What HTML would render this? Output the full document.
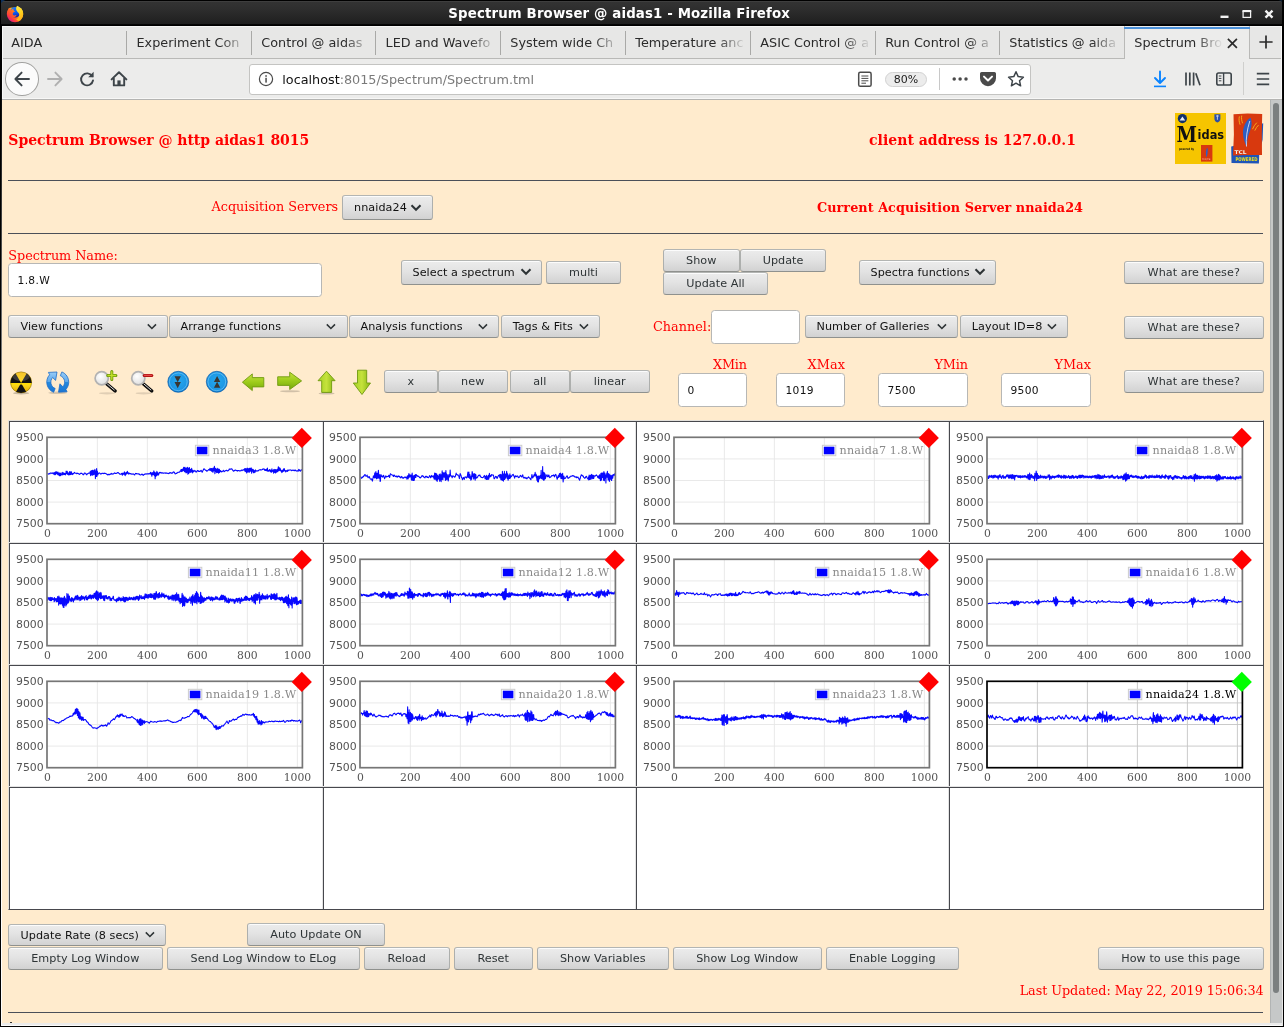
<!DOCTYPE html>
<html><head><meta charset="utf-8"><title>Spectrum Browser @ aidas1 - Mozilla Firefox</title>
<style>
html,body{margin:0;padding:0;background:#000;}
#w{position:relative;width:1284px;height:1027px;overflow:hidden;background:#ffebcd;will-change:transform;font-family:'DejaVu Sans','Liberation Sans',sans-serif;}
.t{position:absolute;white-space:pre;line-height:normal;}
.a{position:absolute;}
.b{position:absolute;box-sizing:border-box;border:1px solid #adafad;border-top-color:#b3b5b3;border-bottom-color:#8f918e;border-radius:3px;
 background:linear-gradient(#ececec,#e3e3e3 45%,#d2d2d2);color:#2e3436;text-align:center;font-family:'DejaVu Sans','Liberation Sans',sans-serif;white-space:pre;letter-spacing:.05px;
 box-shadow:inset 0 1px 0 rgba(255,255,255,.85);}
.b.s{text-align:left;color:#111;}
.chev{position:absolute;}
.i{position:absolute;box-sizing:border-box;border:1px solid #b7b7b5;border-radius:3.5px;background:#fff;color:#111;font:10.67px 'DejaVu Sans','Liberation Sans',sans-serif;padding-left:8.3px;white-space:pre;letter-spacing:.3px;}
.hr{position:absolute;left:8px;width:1255px;height:1px;background:#4b4f58;}
</style></head>
<body><div id="w">
<div class="a" style="left:0;top:0;width:1284px;height:26px;background:linear-gradient(#000 0,#000 1px,#4a4a4a 1px,#333 2px,#2f2f2f 8px,#1f1f1f 24px,#000 24.600px,#000 26px);"></div>
<svg class="a" style="left:0;top:0" width="1284" height="7" viewBox="0 0 1284 7"><path d="M0 0H5.500C2.800 .6 .8 2.600 0 5.500Z" fill="#0b2f5c"/><path d="M1284 0H1278.500C1281.200 .6 1283.200 2.600 1284 5.500Z" fill="#0a1c30"/></svg>
<span class="t" id="t1" style="top:5.63px;font:700 13.33px 'DejaVu Sans','Liberation Sans',sans-serif;color:#fff;letter-spacing:0.134px;left:619.20px;transform:translateX(-50%);">Spectrum Browser @ aidas1 - Mozilla Firefox</span>
<svg class="a" style="left:0;top:0" width="30" height="28" viewBox="0 0 30 28">
<defs><linearGradient id="fxo" x1="0.85" y1="0.1" x2="0.15" y2="0.9"><stop offset="0" stop-color="#fff160"/><stop offset=".3" stop-color="#ffc41e"/><stop offset=".55" stop-color="#ff8a16"/><stop offset=".8" stop-color="#ff3b3d"/><stop offset="1" stop-color="#d81b8c"/></linearGradient>
<linearGradient id="fxb" x1="0.3" y1="0" x2="0.6" y2="1"><stop offset="0" stop-color="#1f7cff"/><stop offset=".55" stop-color="#0a5cf0"/><stop offset="1" stop-color="#1b1f9e"/></linearGradient>
<linearGradient id="fxh" x1="0.9" y1="0" x2="0.1" y2="1"><stop offset="0" stop-color="#ff9c12"/><stop offset=".6" stop-color="#ff5a2c"/><stop offset="1" stop-color="#ff3040"/></linearGradient>
<linearGradient id="fxy" x1="0.3" y1="0" x2="0.6" y2="1"><stop offset="0" stop-color="#ffe94a"/><stop offset=".5" stop-color="#ffd21e"/><stop offset="1" stop-color="#ffa516"/></linearGradient></defs>
<circle cx="15" cy="14.100" r="8.200" fill="url(#fxo)"/>
<path d="M9.600 7.600L11 5.500L17.200 5.200L16.600 7.800Z" fill="#2d2d2d"/><circle cx="15.200" cy="12.300" r="5.300" fill="url(#fxb)"/>
<path d="M7.600 11.200C7.900 9.800 8.500 8.600 9.400 7.700C9.600 8.700 10.200 9.400 11.200 9.700C11.800 9.400 12.600 9.200 13.300 8.600C13.300 9.500 13.500 10.300 14 10.900C14.600 11.100 15.100 11.300 15.300 11.600C14.300 11.900 13.400 12.300 13 13.100C12.500 14 12.700 14.800 13.400 15.300C14.400 15.600 15.600 15.300 16.400 15C16.300 16 15.600 16.800 14.600 17.300C13.400 17.800 12 17.700 11 17.200L8.600 15.800Z" fill="url(#fxh)"/>
<path d="M17.300 5.700C18.200 6.600 19 7 20.200 7.800C22.300 9.400 23.400 11.800 23.200 14.400C23 17.400 21.200 20 18.600 21.300L16.200 19.400C17.600 18.800 18.700 17.600 19.100 16.200C19.500 14.900 19.200 13.800 18.400 12.800C17.600 11.800 16.500 10.800 16.200 9.400C16 8 16.400 6.700 17.300 5.700Z" fill="url(#fxy)"/>
</svg>
<svg class="a" style="left:1215px;top:6px" width="64" height="16" viewBox="0 0 64 16"><g fill="none" stroke="#f2f2f2" stroke-width="2"><path d="M5.5 10.800h8" stroke-width="2.4"/><rect x="28.100" y="5.400" width="7.500" height="6" stroke-width="1.250"/><path d="M27.500 5.050h8.700" stroke-width="2.100"/><path d="M50.500 4.600l7 7M57.500 4.600l-7 7" stroke-width="2.400"/></g></svg>
<div class="a" style="left:0;top:25.700px;width:1284px;height:33.300px;background:#e7e7e6;border-bottom:1px solid #b9b9b7;border-top:1px solid #f6f6f5;box-sizing:border-box"></div>
<div class="a" style="left:126.2px;top:31px;width:1px;height:24px;background:#a9a9a7"></div>
<div class="a" style="left:251.2px;top:31px;width:1px;height:24px;background:#a9a9a7"></div>
<div class="a" style="left:375.0px;top:31px;width:1px;height:24px;background:#a9a9a7"></div>
<div class="a" style="left:500.0px;top:31px;width:1px;height:24px;background:#a9a9a7"></div>
<div class="a" style="left:625.0px;top:31px;width:1px;height:24px;background:#a9a9a7"></div>
<div class="a" style="left:750.0px;top:31px;width:1px;height:24px;background:#a9a9a7"></div>
<div class="a" style="left:875.0px;top:31px;width:1px;height:24px;background:#a9a9a7"></div>
<div class="a" style="left:999.0px;top:31px;width:1px;height:24px;background:#a9a9a7"></div>
<div class="a" style="left:1124px;top:26px;width:126px;height:33px;background:#ececeb;border-left:1px solid #b9b9b7;border-right:1px solid #b9b9b7;box-sizing:border-box"></div>
<div class="a" style="left:1124px;top:26.6px;width:126px;height:2.200px;background:#4a90d9"></div>
<div class="a" style="left:11.3px;top:33px;width:113px;height:22px;overflow:hidden;-webkit-mask-image:linear-gradient(90deg,#000 83px,transparent 111px);mask-image:linear-gradient(90deg,#000 83px,transparent 111px)"><span class="t" style="left:0;top:2.12px;font:12.8px 'DejaVu Sans','Liberation Sans',sans-serif;color:#2b2b2b;letter-spacing:0px">AIDA</span></div>
<div class="a" style="left:136.5px;top:33px;width:113px;height:22px;overflow:hidden;-webkit-mask-image:linear-gradient(90deg,#000 83px,transparent 111px);mask-image:linear-gradient(90deg,#000 83px,transparent 111px)"><span class="t" style="left:0;top:2.12px;font:12.8px 'DejaVu Sans','Liberation Sans',sans-serif;color:#2b2b2b;letter-spacing:0px">Experiment Con</span></div>
<div class="a" style="left:261.3px;top:33px;width:113px;height:22px;overflow:hidden;-webkit-mask-image:linear-gradient(90deg,#000 83px,transparent 111px);mask-image:linear-gradient(90deg,#000 83px,transparent 111px)"><span class="t" style="left:0;top:2.12px;font:12.8px 'DejaVu Sans','Liberation Sans',sans-serif;color:#2b2b2b;letter-spacing:0px">Control @ aidas</span></div>
<div class="a" style="left:385.5px;top:33px;width:113px;height:22px;overflow:hidden;-webkit-mask-image:linear-gradient(90deg,#000 83px,transparent 111px);mask-image:linear-gradient(90deg,#000 83px,transparent 111px)"><span class="t" style="left:0;top:2.12px;font:12.8px 'DejaVu Sans','Liberation Sans',sans-serif;color:#2b2b2b;letter-spacing:0px">LED and Wavefo</span></div>
<div class="a" style="left:510.3px;top:33px;width:113px;height:22px;overflow:hidden;-webkit-mask-image:linear-gradient(90deg,#000 83px,transparent 111px);mask-image:linear-gradient(90deg,#000 83px,transparent 111px)"><span class="t" style="left:0;top:2.12px;font:12.8px 'DejaVu Sans','Liberation Sans',sans-serif;color:#2b2b2b;letter-spacing:0px">System wide Ch</span></div>
<div class="a" style="left:635.3px;top:33px;width:113px;height:22px;overflow:hidden;-webkit-mask-image:linear-gradient(90deg,#000 83px,transparent 111px);mask-image:linear-gradient(90deg,#000 83px,transparent 111px)"><span class="t" style="left:0;top:2.12px;font:12.8px 'DejaVu Sans','Liberation Sans',sans-serif;color:#2b2b2b;letter-spacing:0px">Temperature anc</span></div>
<div class="a" style="left:760.3px;top:33px;width:113px;height:22px;overflow:hidden;-webkit-mask-image:linear-gradient(90deg,#000 83px,transparent 111px);mask-image:linear-gradient(90deg,#000 83px,transparent 111px)"><span class="t" style="left:0;top:2.12px;font:12.8px 'DejaVu Sans','Liberation Sans',sans-serif;color:#2b2b2b;letter-spacing:0px">ASIC Control @ a</span></div>
<div class="a" style="left:885.3px;top:33px;width:113px;height:22px;overflow:hidden;-webkit-mask-image:linear-gradient(90deg,#000 83px,transparent 111px);mask-image:linear-gradient(90deg,#000 83px,transparent 111px)"><span class="t" style="left:0;top:2.12px;font:12.8px 'DejaVu Sans','Liberation Sans',sans-serif;color:#2b2b2b;letter-spacing:0px">Run Control @ a</span></div>
<div class="a" style="left:1009.3px;top:33px;width:113px;height:22px;overflow:hidden;-webkit-mask-image:linear-gradient(90deg,#000 83px,transparent 111px);mask-image:linear-gradient(90deg,#000 83px,transparent 111px)"><span class="t" style="left:0;top:2.12px;font:12.8px 'DejaVu Sans','Liberation Sans',sans-serif;color:#2b2b2b;letter-spacing:0px">Statistics @ aida</span></div>
<div class="a" style="left:1134.3px;top:33px;width:91px;height:22px;overflow:hidden;-webkit-mask-image:linear-gradient(90deg,#000 61px,transparent 89px);mask-image:linear-gradient(90deg,#000 61px,transparent 89px)"><span class="t" style="left:0;top:2.12px;font:12.8px 'DejaVu Sans','Liberation Sans',sans-serif;color:#2b2b2b;letter-spacing:0px">Spectrum Bro</span></div>
<svg class="a" style="left:1226px;top:36.6px" width="13" height="13" viewBox="0 0 13 13"><path d="M1.900 1.900l9 9M10.900 1.900L1.900 10.900" stroke="#2b2b2b" stroke-width="1.7" fill="none"/></svg>
<svg class="a" style="left:1258px;top:34px" width="16" height="16" viewBox="0 0 16 16"><path d="M8 1.4v13.2M1.4 8h13.2" stroke="#2b2b2b" stroke-width="1.7" fill="none"/></svg>
<div class="a" style="left:0;top:59px;width:1284px;height:41px;background:linear-gradient(#ececeb 0,#ececeb 38.800px,#f7f7f6 39.200px,#f7f7f6 39.800px,#b4b4b2 40.200px,#b4b4b2 41px)"></div>
<div class="a" style="left:5px;top:62.300px;width:33.600px;height:33.400px;border-radius:50%;background:#fbfbfb;border:1px solid #a2a2a0;box-sizing:border-box"></div>
<svg class="a" style="left:13px;top:70px" width="18" height="18" viewBox="0 0 18 18"><path d="M16 9H2.6M8.6 2.6L2.4 9l6.2 6.4" stroke="#3d4449" stroke-width="1.9" fill="none" stroke-linecap="round" stroke-linejoin="round"/></svg>
<svg class="a" style="left:46px;top:70px" width="18" height="18" viewBox="0 0 18 18"><path d="M2 9h13.4M9.4 2.6L15.6 9l-6.2 6.4" stroke="#b0b0b0" stroke-width="1.9" fill="none" stroke-linecap="round" stroke-linejoin="round"/></svg>
<svg class="a" style="left:78px;top:70px" width="18" height="18" viewBox="0 0 18 18"><path d="M14.2 6.2A6 6 0 1 0 15 10.5" stroke="#3d4449" stroke-width="1.9" fill="none" stroke-linecap="round"/><path d="M15.6 1.8v5.4h-5.4z" fill="#3d4449"/></svg>
<svg class="a" style="left:110px;top:70px" width="18" height="18" viewBox="0 0 18 18"><path d="M1.6 9.4L9 2.2l7.4 7.2M3.8 8.2v7.2h10.4V8.2" stroke="#3d4449" stroke-width="1.9" fill="none" stroke-linejoin="round" stroke-linecap="round"/><rect x="7.4" y="10.4" width="3.2" height="5" fill="#3d4449"/></svg>
<div class="a" style="left:248.5px;top:64px;width:782px;height:30.5px;background:#fff;border:1px solid #c4c4c2;border-radius:3px;box-sizing:border-box"></div>
<svg class="a" style="left:258px;top:71px" width="16" height="16" viewBox="0 0 16 16"><circle cx="8" cy="8" r="6.6" fill="none" stroke="#4a4a4a" stroke-width="1.2"/><rect x="7.3" y="6.8" width="1.5" height="4.8" fill="#4a4a4a"/><rect x="7.3" y="4.2" width="1.5" height="1.6" fill="#4a4a4a"/></svg>
<span class="t" id="t2" style="top:71.62px;font:400 12.8px 'DejaVu Sans','Liberation Sans',sans-serif;color:#111;letter-spacing:-0.011px;left:282.30px;">localhost<span style="color:#7a7a7a">:8015/Spectrum/Spectrum.tml</span></span>
<svg class="a" style="left:857px;top:71px" width="16" height="17" viewBox="0 0 16 17"><rect x="1.7" y="1.3" width="12.4" height="14" rx="1.6" fill="none" stroke="#4a4a4a" stroke-width="1.5"/><path d="M4.4 5h7M4.4 7.4h7M4.4 9.8h7M4.4 12.2h4.6" stroke="#4a4a4a" stroke-width="1"/></svg>
<div class="a" style="left:885px;top:72px;width:42px;height:15px;border-radius:8px;background:#ececec;border:1px solid #d2d2d2;box-sizing:border-box"></div>
<span class="t" id="t3" style="top:73.09px;font:400 11px 'DejaVu Sans','Liberation Sans',sans-serif;color:#222;left:906.00px;transform:translateX(-50%);">80%</span>
<div class="a" style="left:939px;top:68px;width:1px;height:22px;background:#c8c8c8"></div>
<svg class="a" style="left:950px;top:76px" width="20" height="6" viewBox="0 0 20 6"><circle cx="4.2" cy="3" r="1.75" fill="#4a4a4a"/><circle cx="10.1" cy="3" r="1.75" fill="#4a4a4a"/><circle cx="16" cy="3" r="1.75" fill="#4a4a4a"/></svg>
<svg class="a" style="left:979px;top:71px" width="18" height="16" viewBox="0 0 18 16"><path d="M2.6 1h12.8a1.6 1.6 0 0 1 1.6 1.6v4.6a8 8 0 0 1-16 0V2.6A1.6 1.6 0 0 1 2.6 1z" fill="#4a4a4a"/><path d="M5 5.6l4 3.9 4-3.9" stroke="#fff" stroke-width="2" fill="none" stroke-linecap="round" stroke-linejoin="round"/></svg>
<svg class="a" style="left:1007px;top:70px" width="18" height="18" viewBox="0 0 18 18"><path d="M9 1.8l2.2 4.8 5.2.6-3.9 3.5 1.1 5.1L9 13.2l-4.6 2.6 1.1-5.1L1.6 7.2l5.2-.6z" fill="none" stroke="#3d4449" stroke-width="1.5" stroke-linejoin="round"/></svg>
<svg class="a" style="left:1151px;top:70px" width="18" height="18" viewBox="0 0 18 18"><path d="M9 1.4v11M4 8l5 5 5-5" stroke="#0a84ff" stroke-width="1.9" fill="none" stroke-linecap="round" stroke-linejoin="round"/><path d="M3 16.4h12" stroke="#0a84ff" stroke-width="1.6"/></svg>
<svg class="a" style="left:1184px;top:71px" width="18" height="16" viewBox="0 0 18 16"><path d="M2 1.6v13M5.8 1.6v13M9.6 1.6v13" stroke="#3d4449" stroke-width="1.7"/><path d="M11.8 2.2l4.2 12" stroke="#3d4449" stroke-width="1.7"/></svg>
<svg class="a" style="left:1215px;top:71px" width="18" height="16" viewBox="0 0 18 16"><rect x="1.8" y="2" width="14.4" height="12" rx="1.8" fill="none" stroke="#3d4449" stroke-width="1.6"/><path d="M8.6 2v12" stroke="#3d4449" stroke-width="1.4"/><path d="M3.8 5h2.6M3.8 7.4h2.6M3.8 9.8h2.6" stroke="#3d4449" stroke-width="1"/></svg>
<div class="a" style="left:1243px;top:62px;width:1px;height:33px;background:#cfcfcd"></div>
<svg class="a" style="left:1255px;top:71px" width="16" height="16" viewBox="0 0 16 16"><path d="M1.8 2.6h12.4M1.8 8h12.4M1.8 13.4h12.4" stroke="#3d4449" stroke-width="1.7"/></svg>
<span class="t" id="t4" style="top:131.51px;font:700 14px 'DejaVu Serif','Liberation Serif',serif;color:#ff0000;letter-spacing:-0.031px;left:8.30px;">Spectrum Browser @ http aidas1 8015</span>
<span class="t" id="t5" style="top:131.51px;font:700 14px 'DejaVu Serif','Liberation Serif',serif;color:#ff0000;letter-spacing:0.026px;left:869.00px;">client address is 127.0.0.1</span>
<div class="hr" style="top:180px"></div>
<span class="t" id="t6" style="top:198.92px;font:400 12.8px 'DejaVu Serif','Liberation Serif',serif;color:#ff0000;letter-spacing:-0.011px;left:211.50px;">Acquisition Servers</span>
<div class="b s" style="left:342px;top:195.3px;width:91px;height:24.5px;line-height:23.9px;font-size:11.2px;padding-left:11.1px">nnaida24<svg class="chev" style="left:67.3px;top:7.3px" width="12" height="8" viewBox="0 0 12 8"><path d="M1.5 1.3 L6 5.700 L10.500 1.300" fill="none" stroke="#2e3436" stroke-width="2.1"/></svg></div>
<span class="t" id="t7" style="top:199.62px;font:700 12.8px 'DejaVu Serif','Liberation Serif',serif;color:#ff0000;letter-spacing:0.045px;left:817.00px;">Current Acquisition Server nnaida24</span>
<div class="hr" style="top:233px"></div>
<span class="t" id="t8" style="top:247.62px;font:400 12.8px 'DejaVu Serif','Liberation Serif',serif;color:#ff0000;letter-spacing:-0.058px;left:8.30px;">Spectrum Name:</span>
<div class="i" style="left:8.3px;top:263.1px;width:313.4px;height:33.6px;line-height:33.2px">1.8.W</div>
<div class="b s" style="left:401px;top:260.3px;width:140.7px;height:24.3px;line-height:23.7px;font-size:11.2px;padding-left:10.5px">Select a spectrum<svg class="chev" style="left:117.8px;top:7.2px" width="12" height="8" viewBox="0 0 12 8"><path d="M1.5 1.3 L6 5.700 L10.500 1.300" fill="none" stroke="#2e3436" stroke-width="2.1"/></svg></div>
<div class="b" style="left:546px;top:261.3px;width:75px;height:22.5px;line-height:21.9px;font-size:11.2px">multi</div>
<div class="b" style="left:663px;top:249.3px;width:76.5px;height:22.5px;line-height:21.9px;font-size:11.2px">Show</div>
<div class="b" style="left:740.2px;top:249.3px;width:85.8px;height:22.5px;line-height:21.9px;font-size:11.2px">Update</div>
<div class="b" style="left:663px;top:272.3px;width:105px;height:22.5px;line-height:21.9px;font-size:11.2px">Update All</div>
<div class="b s" style="left:859px;top:260.3px;width:136.5px;height:24.3px;line-height:23.7px;font-size:11.2px;padding-left:10.5px">Spectra functions<svg class="chev" style="left:113.9px;top:7.2px" width="12" height="8" viewBox="0 0 12 8"><path d="M1.5 1.3 L6 5.700 L10.500 1.300" fill="none" stroke="#2e3436" stroke-width="2.1"/></svg></div>
<div class="b" style="left:1124px;top:261.3px;width:139.5px;height:22.5px;line-height:21.9px;font-size:11.2px">What are these?</div>
<div class="b s" style="left:8px;top:315.40000000000003px;width:159.5px;height:23.1px;line-height:22.5px;font-size:11.2px;padding-left:11.5px">View functions<svg class="chev" style="left:136.95px;top:7.1px" width="12" height="8" viewBox="0 0 12 8"><path d="M1.8 1.4 L5.900 5.500 L10 1.400" fill="none" stroke="#2e3436" stroke-width="1.55"/></svg></div>
<div class="b s" style="left:169px;top:315.40000000000003px;width:178.5px;height:23.1px;line-height:22.5px;font-size:11.2px;padding-left:10.5px">Arrange functions<svg class="chev" style="left:155.25px;top:7.1px" width="12" height="8" viewBox="0 0 12 8"><path d="M1.8 1.4 L5.900 5.500 L10 1.400" fill="none" stroke="#2e3436" stroke-width="1.55"/></svg></div>
<div class="b s" style="left:349px;top:315.40000000000003px;width:149.5px;height:23.1px;line-height:22.5px;font-size:11.2px;padding-left:10.5px">Analysis functions<svg class="chev" style="left:126.75px;top:7.1px" width="12" height="8" viewBox="0 0 12 8"><path d="M1.8 1.4 L5.900 5.500 L10 1.400" fill="none" stroke="#2e3436" stroke-width="1.55"/></svg></div>
<div class="b s" style="left:501.2px;top:315.40000000000003px;width:98.5px;height:23.1px;line-height:22.5px;font-size:11.2px;padding-left:10.5px">Tags &amp; Fits<svg class="chev" style="left:75.55px;top:7.1px" width="12" height="8" viewBox="0 0 12 8"><path d="M1.8 1.4 L5.900 5.500 L10 1.400" fill="none" stroke="#2e3436" stroke-width="1.55"/></svg></div>
<span class="t" id="t9" style="top:318.62px;font:400 12.8px 'DejaVu Serif','Liberation Serif',serif;color:#ff0000;letter-spacing:0.011px;left:653.00px;">Channel:</span>
<div class="i" style="left:711.2px;top:310.1px;width:88.8px;height:33.6px;line-height:33.2px"></div>
<div class="b s" style="left:805px;top:315.40000000000003px;width:152.5px;height:23.1px;line-height:22.5px;font-size:11.2px;padding-left:10.5px">Number of Galleries<svg class="chev" style="left:130.45px;top:7.1px" width="12" height="8" viewBox="0 0 12 8"><path d="M1.8 1.4 L5.900 5.500 L10 1.400" fill="none" stroke="#2e3436" stroke-width="1.55"/></svg></div>
<div class="b s" style="left:960.3px;top:315.40000000000003px;width:107.3px;height:23.1px;line-height:22.5px;font-size:11.2px;padding-left:10.5px">Layout ID=8<svg class="chev" style="left:84.45px;top:7.1px" width="12" height="8" viewBox="0 0 12 8"><path d="M1.8 1.4 L5.900 5.500 L10 1.400" fill="none" stroke="#2e3436" stroke-width="1.55"/></svg></div>
<div class="b" style="left:1124px;top:316.3px;width:139.5px;height:22.5px;line-height:21.9px;font-size:11.2px">What are these?</div>
<div class="b" style="left:384px;top:370.3px;width:53.5px;height:22.5px;line-height:21.9px;font-size:11.2px">x</div>
<div class="b" style="left:438px;top:370.3px;width:69.5px;height:22.5px;line-height:21.9px;font-size:11.2px">new</div>
<div class="b" style="left:510px;top:370.3px;width:59.5px;height:22.5px;line-height:21.9px;font-size:11.2px">all</div>
<div class="b" style="left:570px;top:370.3px;width:79.5px;height:22.5px;line-height:21.9px;font-size:11.2px">linear</div>
<span class="t" id="t10" style="top:356.62px;font:400 12.8px 'DejaVu Serif','Liberation Serif',serif;color:#ff0000;letter-spacing:-0.188px;left:713.00px;">XMin</span>
<span class="t" id="t11" style="top:356.62px;font:400 12.8px 'DejaVu Serif','Liberation Serif',serif;color:#ff0000;letter-spacing:0.146px;left:807.50px;">XMax</span>
<span class="t" id="t12" style="top:356.62px;font:400 12.8px 'DejaVu Serif','Liberation Serif',serif;color:#ff0000;letter-spacing:-0.130px;left:934.50px;">YMin</span>
<span class="t" id="t13" style="top:356.62px;font:400 12.8px 'DejaVu Serif','Liberation Serif',serif;color:#ff0000;letter-spacing:0.031px;left:1054.50px;">YMax</span>
<div class="i" style="left:678.3px;top:373.1px;width:68.5px;height:33.6px;line-height:33.2px">0</div>
<div class="i" style="left:776.2px;top:373.1px;width:68.7px;height:33.6px;line-height:33.2px">1019</div>
<div class="i" style="left:878.3px;top:373.1px;width:89.4px;height:33.6px;line-height:33.2px">7500</div>
<div class="i" style="left:1001.2px;top:373.1px;width:89.6px;height:33.6px;line-height:33.2px">9500</div>
<div class="b" style="left:1124px;top:370.3px;width:139.5px;height:22.5px;line-height:21.9px;font-size:11.2px">What are these?</div>
<div class="b s" style="left:8px;top:923.5px;width:157.5px;height:22.7px;line-height:22.099999999999998px;font-size:11.2px;padding-left:11.5px">Update Rate (8 secs)<svg class="chev" style="left:134.65px;top:6.8px" width="12" height="8" viewBox="0 0 12 8"><path d="M1.8 1.4 L5.900 5.500 L10 1.400" fill="none" stroke="#2e3436" stroke-width="1.55"/></svg></div>
<div class="b" style="left:247px;top:923.3px;width:138px;height:22.5px;line-height:21.9px;font-size:11.2px">Auto Update ON</div>
<div class="b" style="left:8px;top:947.3px;width:154.6px;height:22.5px;line-height:21.9px;font-size:11.2px">Empty Log Window</div>
<div class="b" style="left:167px;top:947.3px;width:193px;height:22.5px;line-height:21.9px;font-size:11.2px">Send Log Window to ELog</div>
<div class="b" style="left:364px;top:947.3px;width:85.5px;height:22.5px;line-height:21.9px;font-size:11.2px">Reload</div>
<div class="b" style="left:454px;top:947.3px;width:78.5px;height:22.5px;line-height:21.9px;font-size:11.2px">Reset</div>
<div class="b" style="left:537px;top:947.3px;width:131.5px;height:22.5px;line-height:21.9px;font-size:11.2px">Show Variables</div>
<div class="b" style="left:673px;top:947.3px;width:148.5px;height:22.5px;line-height:21.9px;font-size:11.2px">Show Log Window</div>
<div class="b" style="left:826px;top:947.3px;width:132.5px;height:22.5px;line-height:21.9px;font-size:11.2px">Enable Logging</div>
<div class="b" style="left:1098px;top:947.3px;width:165.5px;height:22.5px;line-height:21.9px;font-size:11.2px">How to use this page</div>
<span class="t" id="t14" style="top:983.12px;font:400 12.8px 'DejaVu Serif','Liberation Serif',serif;color:#ff0000;letter-spacing:-0.075px;right:20.40px;">Last Updated: May 22, 2019 15:06:34</span>
<div class="hr" style="top:1012px"></div>
<div class="a" style="left:10px;top:1021.5px;width:1.6px;height:1.5px;background:#333"></div>
<svg class="a" style="left:1175px;top:113px" width="51" height="51" viewBox="0 0 51 51">
<rect width="51" height="51" fill="#f6c500"/>
<circle cx="7.4" cy="5.6" r="4.6" fill="#12306a"/><path d="M4.6 7.6l2.8-4 2.8 4z" fill="#e8eef8"/>
<path d="M39.4 1.2h6v4.6c0 2-1.4 3.2-3 3.8c-1.600-.6-3-1.800-3-3.800z" fill="#2b4fa8"/><path d="M41 3h2.800M42.400 2.200v4.600" stroke="#dfe6f5" stroke-width=".8"/>
<text x="1.6" y="28.6" font-family="'DejaVu Serif','Liberation Serif',serif" font-weight="700" font-size="23" fill="#111" textLength="20.5" lengthAdjust="spacingAndGlyphs">M</text>
<text x="22.6" y="26" font-family="'DejaVu Sans','Liberation Sans',sans-serif" font-weight="700" font-size="11.5" fill="#111" textLength="26.5" lengthAdjust="spacingAndGlyphs">idas</text>
<text x="4" y="37.4" font-family="'DejaVu Sans','Liberation Sans',sans-serif" font-weight="700" font-size="3.1" fill="#111" textLength="15" lengthAdjust="spacingAndGlyphs">powered by</text>
<rect x="26" y="32" width="11.4" height="16.6" fill="#d8390e"/><path d="M32.400 34.400c-1.600 2-2 6-1 10c1.200-3 1.800-7 1-10z" fill="#2d5fc4"/>
<text x="27" y="47.200" font-family="'DejaVu Sans','Liberation Sans',sans-serif" font-weight="700" font-size="2.4" fill="#f3a27e" textLength="8.6" lengthAdjust="spacingAndGlyphs">Tcl/Tk</text>
</svg>
<svg class="a" style="left:1231px;top:113px" width="33" height="52" viewBox="0 0 33 52">
<path d="M.2 33.500l2.400-.600 26-21.600 3.600-1-.6 16.200-3.400 15.500-.3 8.600-27.400-.5z" fill="#1f55b8"/>
<path d="M2.500 1.300l14-.9 14.700.5-.4 20 .2 21.200-14.500-.2-14.500.7.900-21z" fill="#d8390e"/>
<path d="M19.600 4.800c-4.600 2.400-8 9.600-7.600 16.500.3 4.800 2 8.600 3.600 12.700.7-3.600.4-6.500 1.300-10 1.300-5 3.800-8.500 3.700-13.200 0-2.200-.3-4.200-1-6z" fill="#2d5fc4"/>
<path d="M15.500 33.500c-.8-8 .5-16.500 3.300-25.500" stroke="#e9eefb" stroke-width=".8" fill="none"/>
<path d="M8.400 3.400c-.7 3-.3 5.600.7 8.300M10.700 2.600c-.5 2.700 0 5.200.9 7.700M21.500 16.200c1-2.600 2.400-4.700 4.300-6.500M23.800 17.600c.8-2.100 2.100-3.900 3.700-5.500" stroke="#f6b21b" stroke-width=".9" fill="none"/>
<text x="3.500" y="41.300" font-family="'DejaVu Sans','Liberation Sans',sans-serif" font-weight="700" font-size="5.200" fill="#f4efe6" textLength="12" lengthAdjust="spacingAndGlyphs">TCL</text>
<text x="4.400" y="48.300" font-family="'DejaVu Sans','Liberation Sans',sans-serif" font-weight="700" font-size="5" fill="#f2e21a" textLength="22" lengthAdjust="spacingAndGlyphs">POWERED</text>
</svg>
<svg class="a" style="left:8px;top:366px" width="368" height="32" viewBox="8 366 368 32">
<defs>
<linearGradient id="gy" x1="0" y1="0" x2="0" y2="1"><stop offset="0" stop-color="#f2b600"/><stop offset=".5" stop-color="#fbd000"/><stop offset=".56" stop-color="#ffdf20"/><stop offset="1" stop-color="#e2a800"/></linearGradient>
<radialGradient id="gb" cx="50%" cy="45%" r="60%"><stop offset="0" stop-color="#25a8ee"/><stop offset=".7" stop-color="#1c96e4"/><stop offset="1" stop-color="#0c74c8"/></radialGradient>
<linearGradient id="gg" x1="0" y1="0" x2="0" y2="1"><stop offset="0" stop-color="#c5e23c"/><stop offset=".5" stop-color="#9ccb1a"/><stop offset="1" stop-color="#78a80c"/></linearGradient>
<linearGradient id="ggh" x1="0" y1="0" x2="1" y2="0"><stop offset="0" stop-color="#a5d024"/><stop offset=".5" stop-color="#c5e23c"/><stop offset="1" stop-color="#84b410"/></linearGradient>
<linearGradient id="gr" gradientUnits="userSpaceOnUse" x1="0" y1="371" x2="0" y2="393"><stop offset="0" stop-color="#9fd0f8"/><stop offset=".48" stop-color="#5ea9ec"/><stop offset=".52" stop-color="#2489de"/><stop offset="1" stop-color="#1a74d2"/></linearGradient>
<radialGradient id="gl" cx="40%" cy="35%" r="70%"><stop offset="0" stop-color="#fff"/><stop offset="1" stop-color="#dcdcdc"/></radialGradient>
</defs>
<!-- radiation -->
<clipPath id="rc"><circle cx="21.1" cy="382.4" r="10.6"/></clipPath>
<ellipse cx="21.1" cy="393.2" rx="8" ry="1.3" fill="#000" opacity=".22"/>
<circle cx="21.1" cy="382.4" r="10.7" fill="url(#gy)"/>
<g clip-path="url(#rc)"><path d="M21.1 383L28.1 395.1H14.1ZM21.1 383H7.1L14.1 370.9ZM21.1 383H35.1L28.1 370.9Z" fill="#121212"/>
<path d="M10 383.3h22v1.2h-22z" fill="#ffdc00"/>
<ellipse cx="21.1" cy="375.8" rx="9" ry="5.2" fill="#fff" opacity=".17"/></g>
<circle cx="21.1" cy="382.4" r="10.5" fill="none" stroke="#3a2c00" stroke-width=".6" opacity=".55"/>
<!-- refresh -->
<ellipse cx="57.7" cy="392.8" rx="9.5" ry="1.3" fill="#000" opacity=".16"/>
<g fill="url(#gr)" stroke="#1d6cc8" stroke-width=".8" stroke-linejoin="round">
<path d="M53.63 392.30A11.0 11.0 0 0 1 49.58 374.74L48.40 372.40L57.00 372.00L55.60 380.40L52.62 377.48A6.9 6.9 0 0 0 55.17 388.50Z"/>
<path d="M61.87 371.90A11.0 11.0 0 0 1 65.92 389.46L67.10 391.80L58.50 392.20L59.90 383.80L62.88 386.72A6.9 6.9 0 0 0 60.33 375.70Z"/></g>
<!-- zoom in -->
<ellipse cx="107" cy="393.300" rx="8" ry="1.100" fill="#000" opacity=".12"/>
<path d="M106.600 383.700 L115.200 391" stroke="#0c0c0c" stroke-width="3.300" stroke-linecap="round"/><path d="M107.200 383.900 L114.600 390.200" stroke="#f4f4f4" stroke-width=".9"/>
<circle cx="101.700" cy="378.300" r="6.600" fill="url(#gl)" stroke="#b2b2b2" stroke-width="1.700"/>
<path d="M107.700 375.500h8.200M111.800 371.400v8.200" stroke="#6d9a06" stroke-width="3" stroke-linecap="round"/><path d="M108 375.500h7.600M111.800 371.700v7.600" stroke="#c3e02a" stroke-width="1.300" stroke-linecap="round"/>
<!-- zoom out -->
<ellipse cx="143.600" cy="393.300" rx="8" ry="1.100" fill="#000" opacity=".12"/>
<path d="M143.200 383.700 L151.800 391" stroke="#0c0c0c" stroke-width="3.300" stroke-linecap="round"/><path d="M143.800 383.900 L151.200 390.200" stroke="#f4f4f4" stroke-width=".9"/>
<circle cx="138.300" cy="378.300" r="6.600" fill="url(#gl)" stroke="#b2b2b2" stroke-width="1.700"/>
<path d="M144.200 375.500h7.600" stroke="#b31212" stroke-width="3" stroke-linecap="round"/><path d="M144.500 375.300h7" stroke="#ee5a5a" stroke-width="1" stroke-linecap="round"/>
<!-- down circle -->
<circle cx="178.300" cy="381.800" r="10.500" fill="url(#gb)" stroke="#0a5aa8" stroke-width=".7"/>
<circle cx="178.300" cy="381.800" r="8.900" fill="none" stroke="#8fd6fb" stroke-width=".7" opacity=".75"/>
<path d="M174.500 376.200h6.400l-3.200 6.100zM174.500 382h6.400l-3.200 6.200z" fill="#3a3632"/>
<!-- up circle -->
<circle cx="216.800" cy="381.800" r="10.500" fill="url(#gb)" stroke="#0a5aa8" stroke-width=".7"/>
<circle cx="216.800" cy="381.800" r="8.900" fill="none" stroke="#8fd6fb" stroke-width=".7" opacity=".75"/>
<path d="M213.900 382.100h6.400l-3.200-6.100zM213.900 387.800h6.400l-3.200-6z" fill="#3a3632"/>
<!-- arrows -->
<g stroke="#6f9a10" stroke-width=".9" stroke-linejoin="round">
<path d="M242.400 382.200 L252.300 373.900 V377.600 H263.800 V386.900 H252.300 V390.600Z" fill="url(#gg)"/>
<path d="M301.600 380.900 L289.700 372.200 V376.800 H277.700 V385.400 H289.700 V389.500Z" fill="url(#gg)"/>
<path d="M326.500 371.200 L335.100 380.700 H331.600 V392.400 H321.700 V380.700 H318Z" fill="url(#ggh)"/>
<path d="M362 394.500 L370.500 383 H366.700 V370.200 H357.500 V383 H353.300Z" fill="url(#ggh)"/>
</g>
<ellipse cx="290" cy="391.200" rx="10" ry="1" fill="#000" opacity=".18"/><ellipse cx="326.600" cy="393.500" rx="8" ry="1" fill="#000" opacity=".18"/>
</svg>
<div class="a" style="left:1270px;top:100px;width:12px;height:923px;background:#c6c8c8;border-left:1px solid #b2b4b4;box-sizing:border-box"></div>
<div class="a" style="left:1273px;top:103px;width:6px;height:890px;background:#7b7f80;border-radius:3px"></div>
<div class="a" style="left:2px;top:1023px;width:1280px;height:2px;background:#ebebeb"></div>
<div class="a" style="left:1px;top:1025px;width:1282px;height:1px;background:#fbfbfa"></div>
<div class="a" style="left:0;top:1026px;width:1284px;height:1px;background:#000"></div>
<div class="a" style="left:0;top:0;width:1px;height:1027px;background:#000"></div>
<div class="a" style="left:1px;top:26px;width:1px;height:1000px;background:linear-gradient(#000 0,#000 40px,#fdfdfb 640px)"></div>
<div class="a" style="left:1283px;top:0;width:1px;height:1027px;background:#000"></div>
<div class="a" style="left:1282px;top:0;width:1px;height:1026px;background:linear-gradient(#000 0,#000 66px,#e6e6e6 660px)"></div>
<div class="a" style="left:2px;top:26px;width:1px;height:73px;background:#f7f7f6"></div>
<div class="a" style="left:1281px;top:26px;width:1px;height:73px;background:#f7f7f6"></div>
<div class="a" style="left:8px;top:420px;width:1256px;height:490px;background:#fff;border-top:1px solid #e3e0da;border-left:1px solid #e3e0da;border-right:1px solid #47484d;border-bottom:1px solid #47484d;box-sizing:border-box"></div>
<div class="a" style="left:9.0px;top:421px;width:1px;height:488px;background:#47484d"></div>
<div class="a" style="left:323.0px;top:421px;width:1px;height:488px;background:#47484d"></div>
<div class="a" style="left:322.0px;top:421px;width:1px;height:488px;background:#e4e4e4"></div>
<div class="a" style="left:636.0px;top:421px;width:1px;height:488px;background:#47484d"></div>
<div class="a" style="left:635.0px;top:421px;width:1px;height:488px;background:#e4e4e4"></div>
<div class="a" style="left:949.0px;top:421px;width:1px;height:488px;background:#47484d"></div>
<div class="a" style="left:948.0px;top:421px;width:1px;height:488px;background:#e4e4e4"></div>
<div class="a" style="left:9px;top:421.0px;width:1254px;height:1px;background:#47484d"></div>
<div class="a" style="left:9px;top:543.0px;width:1254px;height:1px;background:#47484d"></div>
<div class="a" style="left:9px;top:542.0px;width:1254px;height:1px;background:#e4e4e4"></div>
<div class="a" style="left:9px;top:665.0px;width:1254px;height:1px;background:#47484d"></div>
<div class="a" style="left:9px;top:664.0px;width:1254px;height:1px;background:#e4e4e4"></div>
<div class="a" style="left:9px;top:787.0px;width:1254px;height:1px;background:#47484d"></div>
<div class="a" style="left:9px;top:786.0px;width:1254px;height:1px;background:#e4e4e4"></div>
<svg class="a" style="left:9.0px;top:421.0px" width="313" height="121" viewBox="0 0 313 121"><path d="M88.4 16.3V102.7M138.4 16.3V102.7M188.4 16.3V102.7M238.4 16.3V102.7M288.4 16.3V102.7M38.0 37.9H293.4M38.0 59.5H293.4M38.0 81.1H293.4" stroke="#e6e6e6" stroke-width=".9" fill="none"/><polyline points="38.4,52.8 38.65,52.7 38.9,52.9 39.15,52.9 39.4,53.1 39.65,52.8 39.9,53.0 40.15,52.8 40.4,52.5 40.65,52.8 40.9,52.4 41.15,52.6 41.4,52.1 41.65,52.0 41.9,52.0 42.15,52.1 42.4,52.2 42.65,52.2 42.9,52.5 43.15,51.9 43.4,52.2 43.65,52.3 43.9,52.0 44.15,52.3 44.4,53.1 44.65,52.6 44.9,51.7 45.15,51.7 45.4,52.4 45.65,53.7 45.9,51.2 46.15,52.6 46.4,53.6 46.65,50.9 46.9,52.5 47.15,52.3 47.4,50.9 47.65,52.8 47.9,51.0 48.15,53.3 48.4,53.1 48.65,51.9 48.9,51.1 49.15,53.9 49.4,53.7 49.65,52.2 49.9,52.1 50.15,53.6 50.4,54.8 50.65,53.6 50.9,51.7 51.15,52.3 51.4,54.6 51.65,54.2 51.9,52.6 52.15,53.5 52.4,53.7 52.65,53.9 52.9,54.0 53.15,51.3 53.4,51.6 53.65,53.7 53.9,53.4 54.15,52.0 54.4,51.8 54.65,52.0 54.9,53.6 55.15,52.3 55.4,53.5 55.65,53.1 55.9,52.4 56.15,52.9 56.4,53.9 56.65,53.2 56.9,51.9 57.15,50.1 57.4,51.0 57.65,52.7 57.9,52.7 58.15,50.2 58.4,51.3 58.65,53.5 58.9,53.3 59.15,52.0 59.4,53.6 59.65,53.9 59.9,51.8 60.15,53.3 60.4,53.6 60.65,50.6 60.9,53.2 61.15,53.6 61.4,50.9 61.65,52.2 61.9,53.4 62.15,51.7 62.4,50.7 62.65,53.3 62.9,52.2 63.15,52.3 63.4,53.1 63.65,53.6 63.9,52.7 64.15,52.9 64.4,52.5 64.65,52.4 64.9,52.1 65.15,51.6 65.4,51.4 65.65,51.7 65.9,52.0 66.15,52.3 66.4,52.2 66.65,52.2 66.9,52.3 67.15,52.1 67.4,52.2 67.65,52.6 67.9,52.6 68.15,52.5 68.4,52.3 68.65,52.1 68.9,52.6 69.15,52.7 69.4,52.6 69.65,52.8 69.9,52.9 70.15,53.2 70.4,53.3 70.65,53.4 70.9,53.2 71.15,52.6 71.4,52.5 71.65,52.3 71.9,52.1 72.15,52.2 72.4,52.5 72.65,52.3 72.9,52.5 73.15,52.5 73.4,52.8 73.65,53.1 73.9,53.1 74.15,53.7 74.4,53.7 74.65,53.8 74.9,53.3 75.15,52.4 75.4,52.1 75.65,52.1 75.9,52.2 76.15,52.3 76.4,52.2 76.65,52.3 76.9,52.8 77.15,53.1 77.4,53.7 77.65,53.4 77.9,53.6 78.15,53.1 78.4,52.8 78.65,52.6 78.9,52.6 79.15,52.3 79.4,52.3 79.65,52.0 79.9,52.1 80.15,52.2 80.4,52.2 80.65,52.1 80.9,52.1 81.15,50.6 81.4,53.3 81.65,54.7 81.9,51.9 82.15,49.5 82.4,51.6 82.65,53.9 82.9,52.9 83.15,50.1 83.4,49.2 83.65,54.1 83.9,53.2 84.15,49.2 84.4,51.1 84.65,53.7 84.9,53.0 85.15,49.9 85.4,53.2 85.65,50.6 85.9,48.2 86.15,50.7 86.4,57.6 86.65,50.1 86.9,50.7 87.15,55.5 87.4,51.7 87.65,47.5 87.9,55.4 88.15,51.2 88.4,50.2 88.65,53.3 88.9,53.9 89.15,52.4 89.4,52.4 89.65,52.5 89.9,52.2 90.15,52.1 90.4,51.9 90.65,52.1 90.9,52.2 91.15,52.6 91.4,52.9 91.65,52.7 91.9,53.0 92.15,52.8 92.4,52.6 92.65,52.7 92.9,52.4 93.15,52.5 93.4,52.2 93.65,52.2 93.9,52.2 94.15,52.5 94.4,52.7 94.65,52.6 94.9,52.5 95.15,52.2 95.4,52.2 95.65,52.5 95.9,52.1 96.15,52.5 96.4,52.5 96.65,52.5 96.9,52.7 97.15,52.9 97.4,52.9 97.65,53.3 97.9,53.3 98.15,53.2 98.4,53.9 98.65,53.6 98.9,53.5 99.15,53.5 99.4,53.2 99.65,53.6 99.9,53.9 100.15,53.8 100.4,53.7 100.65,53.4 100.9,53.5 101.15,53.1 101.4,53.2 101.65,53.1 101.9,53.1 102.15,52.8 102.4,52.4 102.65,52.9 102.9,52.7 103.15,52.9 103.4,52.9 103.65,53.2 103.9,53.0 104.15,53.0 104.4,53.0 104.65,52.6 104.9,52.4 105.15,52.4 105.4,52.2 105.65,51.9 105.9,52.1 106.15,52.3 106.4,52.5 106.65,52.3 106.9,52.3 107.15,52.5 107.4,52.3 107.65,52.2 107.9,52.3 108.15,51.9 108.4,51.7 108.65,51.6 108.9,51.6 109.15,51.5 109.4,51.8 109.65,51.9 109.9,52.4 110.15,52.6 110.4,52.6 110.65,53.0 110.9,53.3 111.15,53.1 111.4,53.3 111.65,53.3 111.9,53.0 112.15,53.1 112.4,52.8 112.65,52.4 112.9,52.7 113.15,53.2 113.4,54.3 113.65,52.3 113.9,52.0 114.15,53.2 114.4,52.5 114.65,53.1 114.9,53.3 115.15,52.1 115.4,50.9 115.65,51.7 115.9,53.9 116.15,54.7 116.4,53.6 116.65,51.8 116.9,52.6 117.15,53.2 117.4,52.3 117.65,51.2 117.9,52.7 118.15,52.3 118.4,50.4 118.65,52.0 118.9,52.3 119.15,51.7 119.4,51.8 119.65,53.1 119.9,53.0 120.15,52.1 120.4,52.5 120.65,52.5 120.9,52.7 121.15,52.6 121.4,52.6 121.65,52.6 121.9,52.8 122.15,53.2 122.4,52.9 122.65,53.0 122.9,52.9 123.15,53.2 123.4,53.2 123.65,53.1 123.9,53.0 124.15,53.0 124.4,52.9 124.65,53.2 124.9,53.3 125.15,53.6 125.4,53.6 125.65,54.0 125.9,53.4 126.15,53.0 126.4,52.4 126.65,52.7 126.9,52.5 127.15,52.5 127.4,52.6 127.65,52.9 127.9,52.6 128.15,52.8 128.4,52.8 128.65,52.8 128.9,53.0 129.15,53.1 129.4,53.0 129.65,52.7 129.9,53.0 130.15,52.9 130.4,53.4 130.65,53.7 130.9,53.7 131.15,53.8 131.4,53.8 131.65,54.0 131.9,53.8 132.15,53.7 132.4,53.6 132.65,53.2 132.9,53.1 133.15,53.2 133.4,53.3 133.65,53.8 133.9,54.2 134.15,54.4 134.4,53.9 134.65,54.0 134.9,53.6 135.15,53.7 135.4,53.5 135.65,53.0 135.9,53.1 136.15,53.0 136.4,53.1 136.65,52.8 136.9,52.9 137.15,53.1 137.4,52.9 137.65,52.8 137.9,52.7 138.15,52.9 138.4,52.8 138.65,52.7 138.9,52.9 139.15,52.6 139.4,53.0 139.65,52.8 139.9,52.7 140.15,53.0 140.4,52.8 140.65,52.5 140.9,52.3 141.15,52.5 141.4,51.4 141.65,53.2 141.9,52.4 142.15,51.8 142.4,51.8 142.65,54.2 142.9,55.3 143.15,53.1 143.4,51.5 143.65,52.8 143.9,52.3 144.15,53.6 144.4,53.6 144.65,50.8 144.9,49.9 145.15,52.2 145.4,54.8 145.65,52.8 145.9,51.3 146.15,57.7 146.4,52.0 146.65,53.4 146.9,55.5 147.15,51.9 147.4,53.3 147.65,54.5 147.9,50.4 148.15,54.0 148.4,53.4 148.65,51.7 148.9,51.9 149.15,54.1 149.4,53.7 149.65,53.6 149.9,52.9 150.15,52.2 150.4,51.5 150.65,51.4 150.9,51.3 151.15,51.6 151.4,51.4 151.65,51.5 151.9,51.9 152.15,51.5 152.4,51.8 152.65,52.1 152.9,52.0 153.15,51.9 153.4,51.8 153.65,51.7 153.9,52.1 154.15,52.1 154.4,52.2 154.65,52.0 154.9,52.1 155.15,52.0 155.4,51.9 155.65,52.0 155.9,52.2 156.15,51.9 156.4,52.2 156.65,52.2 156.9,52.1 157.15,52.2 157.4,52.1 157.65,52.2 157.9,52.0 158.15,52.0 158.4,52.3 158.65,52.3 158.9,52.5 159.15,52.5 159.4,52.7 159.65,52.6 159.9,52.2 160.15,52.0 160.4,51.9 160.65,52.1 160.9,51.7 161.15,51.5 161.4,52.0 161.65,51.9 161.9,51.9 162.15,51.9 162.4,52.0 162.65,52.1 162.9,52.4 163.15,52.1 163.4,51.7 163.65,52.0 163.9,51.3 164.15,51.0 164.4,51.2 164.65,51.1 164.9,50.9 165.15,51.3 165.4,51.3 165.65,51.9 165.9,52.7 166.15,52.8 166.4,52.8 166.65,52.9 166.9,52.7 167.15,52.3 167.4,52.4 167.65,52.5 167.9,52.0 168.15,51.9 168.4,51.7 168.65,51.8 168.9,51.3 169.15,51.4 169.4,51.2 169.65,51.2 169.9,51.3 170.15,51.3 170.4,51.2 170.65,50.8 170.9,50.7 171.15,50.0 171.4,50.3 171.65,50.3 171.9,48.9 172.15,48.5 172.4,50.5 172.65,48.5 172.9,50.7 173.15,48.7 173.4,48.0 173.65,49.9 173.9,49.2 174.15,48.5 174.4,49.5 174.65,46.2 174.9,47.9 175.15,49.9 175.4,50.7 175.65,46.8 175.9,46.3 176.15,50.6 176.4,49.7 176.65,47.2 176.9,51.6 177.15,47.3 177.4,47.6 177.65,51.8 177.9,46.9 178.15,49.6 178.4,51.0 178.65,46.3 178.9,53.3 179.15,50.0 179.4,47.2 179.65,52.4 179.9,51.9 180.15,47.8 180.4,46.5 180.65,48.6 180.9,50.6 181.15,51.5 181.4,49.7 181.65,48.3 181.9,48.5 182.15,51.2 182.4,49.8 182.65,47.2 182.9,50.1 183.15,50.8 183.4,49.2 183.65,52.0 183.9,49.2 184.15,50.2 184.4,50.8 184.65,50.0 184.9,50.3 185.15,50.1 185.4,50.2 185.65,49.7 185.9,49.4 186.15,49.9 186.4,50.1 186.65,50.5 186.9,51.0 187.15,51.2 187.4,51.0 187.65,50.7 187.9,50.4 188.15,49.9 188.4,49.5 188.65,49.6 188.9,49.8 189.15,49.6 189.4,50.3 189.65,50.4 189.9,50.3 190.15,50.2 190.4,50.5 190.65,50.3 190.9,50.4 191.15,50.4 191.4,50.2 191.65,49.6 191.9,49.4 192.15,49.3 192.4,49.9 192.65,50.2 192.9,50.7 193.15,51.3 193.4,50.7 193.65,50.1 193.9,49.7 194.15,49.3 194.4,48.9 194.65,48.2 194.9,47.7 195.15,47.9 195.4,48.0 195.65,48.4 195.9,48.6 196.15,48.7 196.4,49.2 196.65,49.4 196.9,49.2 197.15,49.4 197.4,49.8 197.65,50.1 197.9,49.8 198.15,49.9 198.4,50.0 198.65,49.8 198.9,49.4 199.15,49.2 199.4,49.1 199.65,48.6 199.9,48.8 200.15,48.5 200.4,49.1 200.65,49.2 200.9,47.2 201.15,48.2 201.4,49.4 201.65,48.7 201.9,48.1 202.15,47.6 202.4,50.1 202.65,50.3 202.9,49.6 203.15,47.3 203.4,48.5 203.65,50.6 203.9,51.2 204.15,50.5 204.4,47.1 204.65,48.9 204.9,49.6 205.15,48.7 205.4,45.2 205.65,47.7 205.9,52.8 206.15,48.2 206.4,47.3 206.65,49.1 206.9,50.6 207.15,48.6 207.4,49.2 207.65,51.8 207.9,48.8 208.15,47.2 208.4,49.1 208.65,51.5 208.9,51.2 209.15,47.9 209.4,48.9 209.65,52.3 209.9,50.1 210.15,48.2 210.4,48.4 210.65,51.5 210.9,50.6 211.15,50.0 211.4,49.9 211.65,49.5 211.9,50.5 212.15,50.4 212.4,50.5 212.65,50.9 212.9,50.8 213.15,50.5 213.4,50.3 213.65,50.2 213.9,50.1 214.15,50.0 214.4,49.3 214.65,49.8 214.9,50.1 215.15,50.7 215.4,50.5 215.65,50.3 215.9,50.0 216.15,49.7 216.4,49.8 216.65,49.5 216.9,49.6 217.15,49.4 217.4,49.4 217.65,49.3 217.9,49.7 218.15,49.8 218.4,49.9 218.65,49.9 218.9,49.6 219.15,49.8 219.4,49.5 219.65,49.1 219.9,49.1 220.15,48.2 220.4,48.0 220.65,48.4 220.9,48.0 221.15,48.3 221.4,48.1 221.65,48.1 221.9,48.1 222.15,48.1 222.4,48.0 222.65,47.7 222.9,48.0 223.15,48.4 223.4,48.7 223.65,49.2 223.9,49.5 224.15,49.7 224.4,50.1 224.65,50.1 224.9,49.9 225.15,50.0 225.4,49.7 225.65,49.2 225.9,49.2 226.15,49.1 226.4,49.0 226.65,49.3 226.9,49.4 227.15,49.4 227.4,49.6 227.65,49.5 227.9,49.5 228.15,49.8 228.4,50.1 228.65,49.6 228.9,49.7 229.15,49.6 229.4,49.5 229.65,49.6 229.9,49.7 230.15,49.8 230.4,49.9 230.65,49.9 230.9,49.8 231.15,49.7 231.4,49.9 231.65,49.7 231.9,49.7 232.15,49.1 232.4,49.1 232.65,49.2 232.9,49.2 233.15,49.6 233.4,49.3 233.65,49.0 233.9,48.9 234.15,48.8 234.4,48.7 234.65,48.9 234.9,49.2 235.15,49.2 235.4,47.9 235.65,47.7 235.9,49.2 236.15,50.7 236.4,50.6 236.65,47.6 236.9,50.0 237.15,49.4 237.4,48.0 237.65,51.9 237.9,48.3 238.15,47.1 238.4,51.0 238.65,47.6 238.9,49.3 239.15,51.1 239.4,47.9 239.65,49.6 239.9,50.1 240.15,47.4 240.4,51.1 240.65,50.3 240.9,47.2 241.15,47.4 241.4,48.0 241.65,50.2 241.9,49.5 242.15,46.9 242.4,47.7 242.65,52.1 242.9,48.8 243.15,48.3 243.4,50.2 243.65,50.1 243.9,48.4 244.15,48.8 244.4,51.7 244.65,49.0 244.9,50.1 245.15,51.6 245.4,50.8 245.65,49.7 245.9,49.6 246.15,51.3 246.4,48.9 246.65,49.7 246.9,49.9 247.15,49.8 247.4,50.1 247.65,49.8 247.9,49.8 248.15,49.6 248.4,50.0 248.65,50.0 248.9,50.1 249.15,50.0 249.4,49.7 249.65,49.5 249.9,49.1 250.15,49.1 250.4,48.9 250.65,48.7 250.9,48.7 251.15,48.9 251.4,48.6 251.65,48.9 251.9,48.9 252.15,49.0 252.4,49.0 252.65,48.7 252.9,48.7 253.15,48.7 253.4,48.5 253.65,48.1 253.9,48.1 254.15,47.8 254.4,47.9 254.65,48.2 254.9,48.0 255.15,48.0 255.4,48.2 255.65,49.1 255.9,49.5 256.15,48.5 256.4,49.1 256.65,49.4 256.9,49.5 257.15,48.5 257.4,48.2 257.65,48.9 257.9,50.0 258.15,49.5 258.4,47.0 258.65,49.7 258.9,50.2 259.15,50.2 259.4,49.2 259.65,50.2 259.9,49.4 260.15,49.3 260.4,49.5 260.65,48.5 260.9,49.9 261.15,50.4 261.4,49.8 261.65,49.1 261.9,50.3 262.15,51.4 262.4,50.6 262.65,49.0 262.9,47.8 263.15,50.8 263.4,50.4 263.65,49.6 263.9,49.3 264.15,49.5 264.4,48.8 264.65,52.2 264.9,50.4 265.15,48.8 265.4,51.4 265.65,49.4 265.9,48.4 266.15,49.4 266.4,51.3 266.65,52.0 266.9,48.6 267.15,50.0 267.4,51.1 267.65,50.7 267.9,50.2 268.15,48.4 268.4,49.5 268.65,50.8 268.9,50.5 269.15,47.1 269.4,45.7 269.65,47.7 269.9,49.3 270.15,49.6 270.4,47.9 270.65,46.7 270.9,48.3 271.15,49.5 271.4,47.8 271.65,49.2 271.9,50.2 272.15,49.2 272.4,49.7 272.65,51.0 272.9,51.6 273.15,50.5 273.4,49.5 273.65,50.6 273.9,50.1 274.15,48.8 274.4,48.1 274.65,50.3 274.9,49.9 275.15,47.6 275.4,48.0 275.65,49.1 275.9,49.9 276.15,49.7 276.4,49.6 276.65,51.0 276.9,50.1 277.15,49.7 277.4,50.0 277.65,50.3 277.9,49.8 278.15,49.3 278.4,50.0 278.65,50.4 278.9,49.1 279.15,49.2 279.4,49.5 279.65,49.2 279.9,49.1 280.15,49.1 280.4,49.2 280.65,49.0 280.9,49.0 281.15,48.9 281.4,49.1 281.65,49.0 281.9,49.1 282.15,49.0 282.4,49.3 282.65,49.7 282.9,49.6 283.15,49.5 283.4,49.3 283.65,49.2 283.9,49.0 284.15,49.2 284.4,49.4 284.65,49.4 284.9,49.2 285.15,49.6 285.4,49.3 285.65,49.6 285.9,49.4 286.15,49.1 286.4,49.0 286.65,49.5 286.9,49.6 287.15,50.0 287.4,49.9 287.65,50.0 287.9,50.1 288.15,50.0 288.4,49.7 288.65,49.8 288.9,49.9 289.15,50.3 289.4,49.4 289.65,48.7 289.9,48.4 290.15,48.7 290.4,49.0 290.65,49.7 290.9,49.7 291.15,49.9 291.4,50.2 291.65,49.7 291.9,49.4 292.15,48.7 292.4,49.0 292.65,49.0 292.9,49.2 293.15,49.5" fill="none" stroke="#0808ff" stroke-width="1.08" stroke-linejoin="round"/><rect x="38.0" y="16.3" width="255.39999999999998" height="86.4" fill="none" stroke="#767676" stroke-width="1.7"/><g font-family="'DejaVu Sans','Liberation Sans',sans-serif" font-size="10.9" fill="#545454" text-anchor="end"><text x="34.7" y="20.4">9500</text><text x="34.7" y="41.8">9000</text><text x="34.7" y="63.3">8500</text><text x="34.7" y="84.8">8000</text><text x="34.7" y="106.2">7500</text></g><g font-family="'DejaVu Serif','Liberation Serif',serif" font-size="10.8" fill="#545454" text-anchor="middle"><text x="38.4" y="115.9">0</text><text x="88.4" y="115.9">200</text><text x="138.4" y="115.9">400</text><text x="188.4" y="115.9">600</text><text x="238.4" y="115.9">800</text><text x="288.4" y="115.9">1000</text></g><rect x="186.4" y="24.3" width="13.4" height="10.4" fill="#fff" stroke="#ccc" stroke-width="1"/><rect x="187.8" y="25.7" width="10.6" height="7.6" fill="#0000ff"/><text x="203.6" y="32.8" font-family="'DejaVu Serif','Liberation Serif',serif" font-size="11.2" fill="#8a8a8a" textLength="83.6" lengthAdjust="spacing">nnaida3 1.8.W</text><path d="M292.8 6.800L302.900 16.900L292.800 27L282.700 16.900Z" fill="#ff0000"/></svg>
<svg class="a" style="left:322.4px;top:421.0px" width="313" height="121" viewBox="0 0 313 121"><path d="M88.4 16.3V102.7M138.4 16.3V102.7M188.4 16.3V102.7M238.4 16.3V102.7M288.4 16.3V102.7M38.0 37.9H293.4M38.0 59.5H293.4M38.0 81.1H293.4" stroke="#e6e6e6" stroke-width=".9" fill="none"/><polyline points="38.4,55.7 38.65,56.0 38.9,55.9 39.15,57.1 39.4,56.8 39.65,57.3 39.9,56.8 40.15,56.6 40.4,56.5 40.65,55.9 40.9,56.1 41.15,55.5 41.4,55.7 41.65,55.5 41.9,54.6 42.15,54.9 42.4,54.3 42.65,53.8 42.9,53.5 43.15,53.7 43.4,54.3 43.65,54.6 43.9,55.2 44.15,55.3 44.4,55.2 44.65,54.8 44.9,54.7 45.15,54.1 45.4,54.9 45.65,55.6 45.9,56.4 46.15,56.8 46.4,56.3 46.65,55.8 46.9,55.8 47.15,55.5 47.4,56.0 47.65,56.8 47.9,57.3 48.15,57.7 48.4,58.1 48.65,58.2 48.9,58.1 49.15,58.1 49.4,57.8 49.65,58.1 49.9,58.9 50.15,59.5 50.4,60.1 50.65,58.9 50.9,57.3 51.15,56.4 51.4,54.9 51.65,55.3 51.9,56.1 52.15,56.7 52.4,56.9 52.65,52.6 52.9,51.8 53.15,55.3 53.4,56.8 53.65,54.7 53.9,50.5 54.15,52.5 54.4,57.7 54.65,57.8 54.9,56.4 55.15,52.3 55.4,54.2 55.65,56.5 55.9,57.3 56.15,51.5 56.4,49.4 56.65,53.1 56.9,56.7 57.15,57.3 57.4,53.7 57.65,53.8 57.9,56.1 58.15,60.4 58.4,60.0 58.65,56.7 58.9,53.5 59.15,54.5 59.4,55.4 59.65,54.8 59.9,54.9 60.15,55.2 60.4,56.1 60.65,55.7 60.9,55.9 61.15,55.1 61.4,54.4 61.65,54.4 61.9,55.3 62.15,56.1 62.4,57.0 62.65,57.7 62.9,56.6 63.15,56.5 63.4,55.6 63.65,54.9 63.9,55.0 64.15,55.3 64.4,55.8 64.65,56.0 64.9,55.4 65.15,55.7 65.4,55.6 65.65,55.5 65.9,55.3 66.15,55.4 66.4,55.4 66.65,54.4 66.9,54.3 67.15,55.0 67.4,56.1 67.65,56.5 67.9,55.2 68.15,53.9 68.4,52.7 68.65,52.7 68.9,53.1 69.15,53.4 69.4,53.6 69.65,53.8 69.9,53.8 70.15,54.0 70.4,54.0 70.65,54.3 70.9,54.0 71.15,54.8 71.4,55.5 71.65,55.1 71.9,54.4 72.15,54.3 72.4,54.1 72.65,54.5 72.9,55.2 73.15,55.4 73.4,55.2 73.65,55.4 73.9,55.7 74.15,55.6 74.4,55.2 74.65,55.0 74.9,55.7 75.15,56.2 75.4,56.2 75.65,55.4 75.9,55.6 76.15,55.0 76.4,55.5 76.65,55.2 76.9,55.0 77.15,55.7 77.4,55.9 77.65,56.0 77.9,55.4 78.15,56.4 78.4,56.7 78.65,56.9 78.9,56.4 79.15,56.2 79.4,55.9 79.65,55.4 79.9,56.3 80.15,56.0 80.4,57.0 80.65,57.1 80.9,57.0 81.15,56.8 81.4,57.3 81.65,56.7 81.9,56.6 82.15,56.6 82.4,56.2 82.65,56.1 82.9,56.2 83.15,56.0 83.4,56.3 83.65,56.8 83.9,56.0 84.15,56.6 84.4,56.3 84.65,56.3 84.9,58.1 85.15,57.3 85.4,54.9 85.65,55.3 85.9,57.8 86.15,57.9 86.4,54.8 86.65,54.1 86.9,52.6 87.15,56.5 87.4,55.1 87.65,54.3 87.9,53.7 88.15,54.1 88.4,56.0 88.65,55.9 88.9,54.6 89.15,54.0 89.4,58.9 89.65,59.1 89.9,57.2 90.15,52.1 90.4,54.9 90.65,59.2 90.9,59.5 91.15,56.4 91.4,55.1 91.65,59.4 91.9,54.6 92.15,59.4 92.4,58.1 92.65,54.2 92.9,56.8 93.15,56.3 93.4,53.5 93.65,54.2 93.9,56.5 94.15,53.5 94.4,53.9 94.65,54.6 94.9,54.4 95.15,54.5 95.4,54.8 95.65,55.3 95.9,55.5 96.15,55.1 96.4,55.5 96.65,55.3 96.9,55.5 97.15,55.8 97.4,56.4 97.65,56.7 97.9,56.5 98.15,56.5 98.4,56.8 98.65,56.9 98.9,56.2 99.15,56.1 99.4,55.4 99.65,54.9 99.9,54.8 100.15,54.8 100.4,54.6 100.65,55.2 100.9,55.5 101.15,55.0 101.4,55.3 101.65,55.5 101.9,56.3 102.15,56.4 102.4,56.5 102.65,56.7 102.9,56.9 103.15,56.2 103.4,55.7 103.65,55.4 103.9,55.2 104.15,55.7 104.4,55.7 104.65,55.4 104.9,55.9 105.15,56.4 105.4,55.9 105.65,55.8 105.9,56.2 106.15,56.6 106.4,56.7 106.65,56.2 106.9,56.2 107.15,55.7 107.4,55.0 107.65,54.6 107.9,54.8 108.15,55.3 108.4,55.9 108.65,56.8 108.9,56.6 109.15,55.9 109.4,55.1 109.65,54.4 109.9,54.9 110.15,55.5 110.4,55.1 110.65,55.3 110.9,55.6 111.15,56.3 111.4,55.4 111.65,54.8 111.9,57.0 112.15,58.2 112.4,55.7 112.65,52.0 112.9,54.5 113.15,58.3 113.4,55.9 113.65,52.2 113.9,56.5 114.15,59.3 114.4,55.7 114.65,52.7 114.9,58.3 115.15,60.4 115.4,55.9 115.65,54.2 115.9,58.7 116.15,55.5 116.4,55.9 116.65,55.2 116.9,57.6 117.15,53.5 117.4,55.9 117.65,60.3 117.9,59.1 118.15,52.8 118.4,54.4 118.65,54.7 118.9,58.8 119.15,60.8 119.4,53.7 119.65,58.4 119.9,55.4 120.15,49.9 120.4,58.3 120.65,52.1 120.9,58.8 121.15,51.5 121.4,55.7 121.65,54.1 121.9,52.4 122.15,56.3 122.4,55.7 122.65,55.7 122.9,51.3 123.15,55.2 123.4,59.4 123.65,56.9 123.9,49.5 124.15,56.8 124.4,52.5 124.65,58.7 124.9,58.2 125.15,53.5 125.4,57.6 125.65,54.6 125.9,57.5 126.15,60.0 126.4,59.2 126.65,55.5 126.9,53.6 127.15,56.1 127.4,56.0 127.65,53.9 127.9,53.6 128.15,49.1 128.4,52.5 128.65,55.0 128.9,55.2 129.15,55.0 129.4,54.8 129.65,55.4 129.9,55.8 130.15,56.8 130.4,55.8 130.65,54.9 130.9,54.8 131.15,55.2 131.4,55.3 131.65,55.1 131.9,55.3 132.15,55.7 132.4,56.1 132.65,55.7 132.9,55.9 133.15,55.9 133.4,55.1 133.65,54.1 133.9,53.6 134.15,52.1 134.4,53.0 134.65,53.6 134.9,53.4 135.15,53.7 135.4,53.8 135.65,54.1 135.9,54.0 136.15,54.1 136.4,54.5 136.65,54.8 136.9,55.7 137.15,56.6 137.4,57.6 137.65,55.4 137.9,54.0 138.15,52.5 138.4,53.3 138.65,53.4 138.9,54.5 139.15,55.0 139.4,56.1 139.65,56.7 139.9,56.8 140.15,57.4 140.4,58.8 140.65,58.1 140.9,57.7 141.15,57.1 141.4,56.4 141.65,57.0 141.9,57.8 142.15,58.4 142.4,57.9 142.65,56.8 142.9,56.3 143.15,55.9 143.4,56.2 143.65,56.1 143.9,56.1 144.15,56.6 144.4,56.4 144.65,56.9 144.9,56.6 145.15,56.2 145.4,54.5 145.65,52.8 145.9,51.1 146.15,54.9 146.4,56.5 146.65,53.5 146.9,51.0 147.15,54.0 147.4,57.1 147.65,56.1 147.9,53.5 148.15,55.9 148.4,57.9 148.65,56.0 148.9,59.2 149.15,57.8 149.4,54.9 149.65,58.3 149.9,54.1 150.15,50.5 150.4,51.7 150.65,55.7 150.9,55.3 151.15,54.4 151.4,52.8 151.65,58.0 151.9,57.1 152.15,55.9 152.4,54.5 152.65,52.6 152.9,56.1 153.15,59.1 153.4,55.6 153.65,53.4 153.9,54.0 154.15,57.2 154.4,56.9 154.65,56.9 154.9,56.6 155.15,56.8 155.4,56.1 155.65,56.0 155.9,55.2 156.15,55.1 156.4,54.4 156.65,54.2 156.9,54.3 157.15,54.2 157.4,54.6 157.65,54.4 157.9,53.9 158.15,54.9 158.4,55.2 158.65,55.9 158.9,56.1 159.15,56.0 159.4,56.5 159.65,56.5 159.9,56.4 160.15,56.6 160.4,56.6 160.65,56.6 160.9,56.5 161.15,56.4 161.4,56.0 161.65,55.5 161.9,55.1 162.15,55.2 162.4,55.1 162.65,54.4 162.9,56.6 163.15,58.0 163.4,55.9 163.65,55.4 163.9,56.2 164.15,57.6 164.4,58.4 164.65,54.4 164.9,56.4 165.15,58.4 165.4,57.7 165.65,55.7 165.9,58.3 166.15,57.6 166.4,54.4 166.65,58.3 166.9,57.2 167.15,55.4 167.4,52.4 167.65,56.0 167.9,55.9 168.15,55.5 168.4,54.4 168.65,55.3 168.9,55.4 169.15,54.9 169.4,53.5 169.65,54.1 169.9,54.1 170.15,54.2 170.4,54.0 170.65,53.9 170.9,53.9 171.15,54.2 171.4,54.1 171.65,55.2 171.9,57.0 172.15,57.8 172.4,57.8 172.65,57.3 172.9,56.7 173.15,56.6 173.4,55.8 173.65,55.4 173.9,55.3 174.15,55.6 174.4,55.7 174.65,56.8 174.9,57.0 175.15,57.4 175.4,57.0 175.65,56.3 175.9,55.4 176.15,55.0 176.4,54.4 176.65,54.9 176.9,54.8 177.15,54.4 177.4,53.7 177.65,55.3 177.9,56.8 178.15,55.5 178.4,53.2 178.65,56.4 178.9,58.8 179.15,57.5 179.4,54.4 179.65,53.6 179.9,57.6 180.15,59.5 180.4,50.3 180.65,57.2 180.9,58.9 181.15,53.1 181.4,60.1 181.65,53.1 181.9,56.1 182.15,58.4 182.4,50.4 182.65,58.4 182.9,52.7 183.15,57.6 183.4,57.0 183.65,56.7 183.9,53.1 184.15,55.9 184.4,53.5 184.65,50.3 184.9,52.2 185.15,57.3 185.4,57.8 185.65,52.8 185.9,53.9 186.15,59.2 186.4,55.4 186.65,55.6 186.9,57.8 187.15,54.4 187.4,57.4 187.65,57.5 187.9,52.9 188.15,57.0 188.4,56.9 188.65,54.8 188.9,55.9 189.15,55.4 189.4,55.1 189.65,55.4 189.9,54.8 190.15,54.1 190.4,53.7 190.65,54.0 190.9,53.7 191.15,53.3 191.4,53.9 191.65,54.6 191.9,54.7 192.15,55.8 192.4,56.4 192.65,57.2 192.9,55.9 193.15,55.2 193.4,54.7 193.65,55.1 193.9,55.4 194.15,55.3 194.4,55.3 194.65,55.7 194.9,55.0 195.15,55.0 195.4,54.9 195.65,55.0 195.9,55.3 196.15,56.2 196.4,56.6 196.65,56.5 196.9,56.4 197.15,56.1 197.4,56.2 197.65,55.6 197.9,55.3 198.15,54.7 198.4,54.4 198.65,54.7 198.9,55.0 199.15,55.4 199.4,55.6 199.65,56.0 199.9,55.7 200.15,54.7 200.4,54.6 200.65,53.8 200.9,54.4 201.15,56.1 201.4,56.7 201.65,57.0 201.9,57.0 202.15,57.1 202.4,56.5 202.65,56.4 202.9,56.2 203.15,56.7 203.4,56.8 203.65,57.2 203.9,57.5 204.15,56.9 204.4,56.8 204.65,57.1 204.9,57.9 205.15,57.1 205.4,57.2 205.65,57.0 205.9,56.7 206.15,56.7 206.4,55.8 206.65,55.9 206.9,56.4 207.15,56.4 207.4,57.0 207.65,57.2 207.9,57.2 208.15,57.8 208.4,58.3 208.65,58.3 208.9,58.8 209.15,57.2 209.4,56.1 209.65,55.2 209.9,53.5 210.15,54.5 210.4,56.0 210.65,57.0 210.9,56.2 211.15,56.2 211.4,55.5 211.65,54.8 211.9,54.3 212.15,53.6 212.4,54.2 212.65,55.1 212.9,53.2 213.15,51.4 213.4,53.3 213.65,55.0 213.9,54.2 214.15,53.2 214.4,56.6 214.65,54.3 214.9,59.2 215.15,55.2 215.4,56.9 215.65,60.7 215.9,55.3 216.15,56.1 216.4,61.0 216.65,57.8 216.9,54.7 217.15,55.4 217.4,57.9 217.65,55.8 217.9,55.4 218.15,56.1 218.4,54.3 218.65,57.3 218.9,55.7 219.15,49.2 219.4,55.3 219.65,57.8 219.9,57.1 220.15,54.0 220.4,57.2 220.65,45.6 220.9,58.5 221.15,55.3 221.4,51.2 221.65,58.7 221.9,59.5 222.15,56.2 222.4,51.7 222.65,58.3 222.9,55.0 223.15,53.1 223.4,57.7 223.65,56.7 223.9,55.1 224.15,55.2 224.4,55.2 224.65,54.3 224.9,53.8 225.15,53.8 225.4,55.2 225.65,55.8 225.9,55.6 226.15,55.8 226.4,55.2 226.65,54.2 226.9,54.0 227.15,55.1 227.4,55.9 227.65,56.7 227.9,56.4 228.15,56.4 228.4,56.2 228.65,56.0 228.9,55.9 229.15,55.3 229.4,55.3 229.65,54.6 229.9,54.7 230.15,54.5 230.4,54.7 230.65,54.7 230.9,54.7 231.15,54.1 231.4,54.5 231.65,54.0 231.9,54.3 232.15,54.9 232.4,55.9 232.65,55.3 232.9,54.6 233.15,54.1 233.4,53.6 233.65,53.4 233.9,53.6 234.15,54.4 234.4,55.7 234.65,56.3 234.9,57.2 235.15,58.3 235.4,57.8 235.65,56.6 235.9,56.0 236.15,54.8 236.4,54.7 236.65,56.5 236.9,55.2 237.15,53.6 237.4,52.8 237.65,52.5 237.9,55.7 238.15,55.1 238.4,54.7 238.65,52.1 238.9,57.4 239.15,57.6 239.4,54.4 239.65,53.3 239.9,57.3 240.15,57.6 240.4,54.9 240.65,52.3 240.9,57.0 241.15,61.0 241.4,57.2 241.65,55.4 241.9,55.1 242.15,57.9 242.4,56.8 242.65,57.4 242.9,57.2 243.15,57.4 243.4,56.9 243.65,56.9 243.9,56.5 244.15,56.0 244.4,55.4 244.65,55.2 244.9,55.1 245.15,54.8 245.4,55.5 245.65,56.5 245.9,57.2 246.15,57.3 246.4,56.7 246.65,57.3 246.9,56.8 247.15,56.5 247.4,56.5 247.65,56.1 247.9,56.2 248.15,55.5 248.4,55.2 248.65,55.2 248.9,55.3 249.15,55.3 249.4,55.0 249.65,55.1 249.9,55.3 250.15,54.9 250.4,54.8 250.65,54.5 250.9,54.7 251.15,55.0 251.4,54.9 251.65,54.7 251.9,55.2 252.15,55.0 252.4,55.7 252.65,55.6 252.9,55.9 253.15,56.2 253.4,56.0 253.65,55.9 253.9,55.9 254.15,56.3 254.4,56.8 254.65,55.8 254.9,56.4 255.15,56.3 255.4,56.5 255.65,56.4 255.9,56.0 256.15,56.8 256.4,57.2 256.65,57.4 256.9,57.7 257.15,58.5 257.4,58.8 257.65,59.3 257.9,58.0 258.15,57.6 258.4,56.3 258.65,55.5 258.9,54.9 259.15,53.9 259.4,53.8 259.65,54.4 259.9,54.5 260.15,54.2 260.4,54.6 260.65,54.9 260.9,54.7 261.15,55.6 261.4,55.4 261.65,56.4 261.9,56.3 262.15,56.6 262.4,57.1 262.65,57.3 262.9,57.3 263.15,56.8 263.4,56.8 263.65,56.0 263.9,55.8 264.15,55.2 264.4,55.2 264.65,55.6 264.9,56.6 265.15,56.9 265.4,57.2 265.65,57.5 265.9,58.0 266.15,58.2 266.4,57.5 266.65,55.6 266.9,58.9 267.15,54.1 267.4,55.1 267.65,58.5 267.9,57.8 268.15,56.1 268.4,54.4 268.65,57.5 268.9,58.4 269.15,56.2 269.4,53.4 269.65,54.3 269.9,57.2 270.15,54.4 270.4,54.0 270.65,56.9 270.9,57.8 271.15,55.8 271.4,54.3 271.65,57.5 271.9,56.7 272.15,55.0 272.4,54.9 272.65,54.8 272.9,54.7 273.15,55.1 273.4,55.0 273.65,54.6 273.9,54.3 274.15,54.2 274.4,53.9 274.65,54.4 274.9,54.4 275.15,54.9 275.4,55.1 275.65,56.3 275.9,56.4 276.15,56.8 276.4,56.0 276.65,54.8 276.9,56.9 277.15,57.4 277.4,55.3 277.65,53.7 277.9,54.4 278.15,57.6 278.4,59.6 278.65,55.2 278.9,52.2 279.15,55.4 279.4,59.3 279.65,53.8 279.9,51.9 280.15,53.1 280.4,56.4 280.65,52.9 280.9,52.1 281.15,55.0 281.4,59.3 281.65,53.2 281.9,50.5 282.15,59.3 282.4,59.8 282.65,52.4 282.9,52.1 283.15,57.4 283.4,54.9 283.65,54.0 283.9,61.9 284.15,54.0 284.4,56.1 284.65,53.2 284.9,51.9 285.15,56.2 285.4,50.3 285.65,53.3 285.9,55.2 286.15,59.0 286.4,55.4 286.65,52.5 286.9,53.4 287.15,59.3 287.4,60.4 287.65,53.8 287.9,53.7 288.15,56.9 288.4,58.3 288.65,55.4 288.9,54.6 289.15,57.4 289.4,59.5 289.65,59.4 289.9,55.1 290.15,54.1 290.4,55.4 290.65,57.3 290.9,56.0 291.15,53.9 291.4,54.4 291.65,53.6 291.9,53.8 292.15,54.0 292.4,52.9 292.65,54.0 292.9,54.4 293.15,55.1" fill="none" stroke="#0808ff" stroke-width="1.08" stroke-linejoin="round"/><rect x="38.0" y="16.3" width="255.39999999999998" height="86.4" fill="none" stroke="#767676" stroke-width="1.7"/><g font-family="'DejaVu Sans','Liberation Sans',sans-serif" font-size="10.9" fill="#545454" text-anchor="end"><text x="34.7" y="20.4">9500</text><text x="34.7" y="41.8">9000</text><text x="34.7" y="63.3">8500</text><text x="34.7" y="84.8">8000</text><text x="34.7" y="106.2">7500</text></g><g font-family="'DejaVu Serif','Liberation Serif',serif" font-size="10.8" fill="#545454" text-anchor="middle"><text x="38.4" y="115.9">0</text><text x="88.4" y="115.9">200</text><text x="138.4" y="115.9">400</text><text x="188.4" y="115.9">600</text><text x="238.4" y="115.9">800</text><text x="288.4" y="115.9">1000</text></g><rect x="186.4" y="24.3" width="13.4" height="10.4" fill="#fff" stroke="#ccc" stroke-width="1"/><rect x="187.8" y="25.7" width="10.6" height="7.6" fill="#0000ff"/><text x="203.6" y="32.8" font-family="'DejaVu Serif','Liberation Serif',serif" font-size="11.2" fill="#8a8a8a" textLength="83.6" lengthAdjust="spacing">nnaida4 1.8.W</text><path d="M292.8 6.800L302.900 16.900L292.800 27L282.700 16.900Z" fill="#ff0000"/></svg>
<svg class="a" style="left:635.7px;top:421.0px" width="313" height="121" viewBox="0 0 313 121"><path d="M88.4 16.3V102.7M138.4 16.3V102.7M188.4 16.3V102.7M238.4 16.3V102.7M288.4 16.3V102.7M38.0 37.9H293.4M38.0 59.5H293.4M38.0 81.1H293.4" stroke="#e6e6e6" stroke-width=".9" fill="none"/><rect x="38.0" y="16.3" width="255.39999999999998" height="86.4" fill="none" stroke="#767676" stroke-width="1.7"/><g font-family="'DejaVu Sans','Liberation Sans',sans-serif" font-size="10.9" fill="#545454" text-anchor="end"><text x="34.7" y="20.4">9500</text><text x="34.7" y="41.8">9000</text><text x="34.7" y="63.3">8500</text><text x="34.7" y="84.8">8000</text><text x="34.7" y="106.2">7500</text></g><g font-family="'DejaVu Serif','Liberation Serif',serif" font-size="10.8" fill="#545454" text-anchor="middle"><text x="38.4" y="115.9">0</text><text x="88.4" y="115.9">200</text><text x="138.4" y="115.9">400</text><text x="188.4" y="115.9">600</text><text x="238.4" y="115.9">800</text><text x="288.4" y="115.9">1000</text></g><rect x="186.4" y="24.3" width="13.4" height="10.4" fill="#fff" stroke="#ccc" stroke-width="1"/><rect x="187.8" y="25.7" width="10.6" height="7.6" fill="#0000ff"/><text x="203.6" y="32.8" font-family="'DejaVu Serif','Liberation Serif',serif" font-size="11.2" fill="#8a8a8a" textLength="83.6" lengthAdjust="spacing">nnaida7 1.8.W</text><path d="M292.8 6.800L302.900 16.900L292.800 27L282.700 16.900Z" fill="#ff0000"/></svg>
<svg class="a" style="left:949.1px;top:421.0px" width="313" height="121" viewBox="0 0 313 121"><path d="M88.4 16.3V102.7M138.4 16.3V102.7M188.4 16.3V102.7M238.4 16.3V102.7M288.4 16.3V102.7M38.0 37.9H293.4M38.0 59.5H293.4M38.0 81.1H293.4" stroke="#e6e6e6" stroke-width=".9" fill="none"/><polyline points="38.4,56.9 38.65,55.4 38.9,57.8 39.15,56.0 39.4,55.8 39.65,57.4 39.9,55.1 40.15,54.4 40.4,55.0 40.65,56.3 40.9,56.0 41.15,55.0 41.4,55.2 41.65,55.9 41.9,56.1 42.15,55.8 42.4,54.2 42.65,56.4 42.9,55.1 43.15,55.0 43.4,55.6 43.65,54.9 43.9,57.2 44.15,55.4 44.4,54.4 44.65,56.2 44.9,56.7 45.15,54.7 45.4,55.8 45.65,56.2 45.9,54.0 46.15,55.1 46.4,55.9 46.65,54.6 46.9,55.3 47.15,56.4 47.4,55.5 47.65,55.0 47.9,56.1 48.15,56.4 48.4,55.4 48.65,54.9 48.9,57.4 49.15,58.2 49.4,56.5 49.65,55.1 49.9,54.5 50.15,56.2 50.4,56.3 50.65,55.2 50.9,53.5 51.15,54.1 51.4,56.1 51.65,55.6 51.9,55.7 52.15,56.2 52.4,57.0 52.65,57.5 52.9,56.4 53.15,54.8 53.4,55.1 53.65,56.0 53.9,54.8 54.15,54.2 54.4,56.1 54.65,57.3 54.9,56.6 55.15,56.1 55.4,55.7 55.65,56.9 55.9,56.3 56.15,55.5 56.4,57.3 56.65,56.1 56.9,56.3 57.15,55.9 57.4,54.3 57.65,55.5 57.9,55.3 58.15,53.6 58.4,54.4 58.65,55.5 58.9,54.8 59.15,54.7 59.4,57.0 59.65,55.7 59.9,53.9 60.15,57.2 60.4,57.1 60.65,54.2 60.9,54.6 61.15,56.7 61.4,56.7 61.65,53.7 61.9,54.3 62.15,57.1 62.4,54.8 62.65,54.1 62.9,57.6 63.15,53.6 63.4,55.6 63.65,54.6 63.9,53.8 64.15,57.8 64.4,55.3 64.65,54.8 64.9,56.9 65.15,54.2 65.4,54.9 65.65,59.0 65.9,55.1 66.15,54.5 66.4,55.9 66.65,55.6 66.9,54.8 67.15,54.2 67.4,54.9 67.65,55.1 67.9,55.2 68.15,54.4 68.4,54.9 68.65,55.5 68.9,56.3 69.15,55.2 69.4,54.8 69.65,56.5 69.9,55.6 70.15,54.9 70.4,55.0 70.65,56.5 70.9,54.9 71.15,54.5 71.4,55.8 71.65,56.9 71.9,55.2 72.15,55.8 72.4,56.2 72.65,56.1 72.9,54.8 73.15,56.4 73.4,56.1 73.65,54.9 73.9,55.6 74.15,56.3 74.4,55.5 74.65,55.0 74.9,54.9 75.15,56.2 75.4,55.0 75.65,54.6 75.9,55.9 76.15,55.9 76.4,55.0 76.65,54.7 76.9,55.6 77.15,56.7 77.4,56.1 77.65,55.6 77.9,57.0 78.15,56.1 78.4,54.5 78.65,56.4 78.9,53.2 79.15,57.9 79.4,54.6 79.65,53.7 79.9,56.7 80.15,58.8 80.4,55.7 80.65,52.0 80.9,56.5 81.15,58.5 81.4,56.0 81.65,54.1 81.9,56.2 82.15,56.8 82.4,53.6 82.65,54.0 82.9,55.9 83.15,56.3 83.4,54.9 83.65,55.2 83.9,57.2 84.15,56.8 84.4,55.6 84.65,55.9 84.9,57.3 85.15,57.6 85.4,54.6 85.65,59.6 85.9,52.2 86.15,57.5 86.4,53.9 86.65,56.1 86.9,55.5 87.15,50.1 87.4,51.6 87.65,59.5 87.9,57.4 88.15,52.5 88.4,52.5 88.65,57.5 88.9,56.6 89.15,55.6 89.4,54.4 89.65,57.5 89.9,56.7 90.15,55.0 90.4,56.9 90.65,56.8 90.9,55.4 91.15,57.0 91.4,55.5 91.65,54.0 91.9,56.6 92.15,56.8 92.4,55.7 92.65,55.2 92.9,55.6 93.15,56.2 93.4,56.2 93.65,55.1 93.9,56.2 94.15,57.2 94.4,56.0 94.65,55.3 94.9,55.9 95.15,56.8 95.4,56.6 95.65,55.0 95.9,55.5 96.15,56.3 96.4,57.4 96.65,56.4 96.9,55.4 97.15,55.3 97.4,56.8 97.65,57.2 97.9,56.5 98.15,55.9 98.4,55.9 98.65,55.7 98.9,56.2 99.15,53.9 99.4,55.1 99.65,56.1 99.9,55.4 100.15,54.7 100.4,53.8 100.65,58.6 100.9,57.5 101.15,55.3 101.4,56.3 101.65,56.2 101.9,55.0 102.15,57.9 102.4,56.9 102.65,55.7 102.9,56.2 103.15,56.8 103.4,56.0 103.65,54.8 103.9,55.7 104.15,56.6 104.4,55.3 104.65,56.1 104.9,55.6 105.15,55.7 105.4,57.1 105.65,55.3 105.9,56.4 106.15,55.3 106.4,55.9 106.65,55.4 106.9,56.5 107.15,55.5 107.4,54.9 107.65,55.0 107.9,55.6 108.15,55.8 108.4,54.3 108.65,55.8 108.9,56.2 109.15,55.0 109.4,53.8 109.65,56.5 109.9,55.4 110.15,54.9 110.4,54.3 110.65,54.8 110.9,55.6 111.15,56.4 111.4,55.2 111.65,55.3 111.9,57.0 112.15,54.4 112.4,55.4 112.65,57.1 112.9,55.9 113.15,55.2 113.4,56.3 113.65,55.8 113.9,55.2 114.15,56.5 114.4,57.1 114.65,55.0 114.9,54.1 115.15,55.4 115.4,57.0 115.65,55.6 115.9,54.6 116.15,54.9 116.4,57.3 116.65,57.3 116.9,56.3 117.15,54.7 117.4,55.7 117.65,55.9 117.9,56.5 118.15,56.3 118.4,55.8 118.65,56.8 118.9,56.5 119.15,56.3 119.4,54.5 119.65,55.1 119.9,56.1 120.15,55.2 120.4,55.3 120.65,57.4 120.9,56.9 121.15,55.3 121.4,56.1 121.65,57.1 121.9,55.9 122.15,55.1 122.4,55.2 122.65,57.3 122.9,56.0 123.15,54.6 123.4,56.4 123.65,55.8 123.9,54.4 124.15,55.8 124.4,57.1 124.65,56.0 124.9,55.4 125.15,57.2 125.4,56.1 125.65,56.1 125.9,56.1 126.15,56.5 126.4,55.8 126.65,54.9 126.9,56.3 127.15,56.1 127.4,55.0 127.65,56.2 127.9,57.2 128.15,55.2 128.4,55.9 128.65,57.5 128.9,55.5 129.15,55.4 129.4,56.3 129.65,56.3 129.9,54.4 130.15,55.3 130.4,56.8 130.65,56.2 130.9,54.1 131.15,55.7 131.4,56.9 131.65,54.4 131.9,55.0 132.15,56.4 132.4,54.9 132.65,54.3 132.9,56.7 133.15,56.2 133.4,54.0 133.65,54.4 133.9,55.4 134.15,55.6 134.4,54.5 134.65,55.2 134.9,57.1 135.15,56.5 135.4,55.1 135.65,55.3 135.9,56.1 136.15,55.4 136.4,55.3 136.65,56.7 136.9,55.0 137.15,56.7 137.4,55.2 137.65,56.1 137.9,55.9 138.15,55.1 138.4,56.4 138.65,55.8 138.9,55.3 139.15,56.6 139.4,56.7 139.65,55.8 139.9,56.8 140.15,56.8 140.4,55.0 140.65,55.7 140.9,56.2 141.15,55.8 141.4,55.2 141.65,56.7 141.9,56.9 142.15,55.4 142.4,56.2 142.65,57.0 142.9,55.3 143.15,55.2 143.4,54.9 143.65,56.1 143.9,56.4 144.15,55.6 144.4,55.0 144.65,55.5 144.9,56.1 145.15,55.3 145.4,55.5 145.65,54.5 145.9,56.6 146.15,57.2 146.4,54.3 146.65,56.6 146.9,55.5 147.15,56.2 147.4,56.8 147.65,54.4 147.9,57.7 148.15,55.1 148.4,56.3 148.65,57.3 148.9,53.4 149.15,56.7 149.4,53.7 149.65,55.5 149.9,57.8 150.15,54.2 150.4,57.7 150.65,54.0 150.9,56.5 151.15,57.6 151.4,54.5 151.65,56.8 151.9,55.1 152.15,57.4 152.4,56.4 152.65,56.3 152.9,57.5 153.15,54.6 153.4,56.6 153.65,55.3 153.9,55.8 154.15,57.5 154.4,55.0 154.65,55.6 154.9,55.8 155.15,55.0 155.4,53.9 155.65,56.5 155.9,55.7 156.15,55.2 156.4,55.7 156.65,56.3 156.9,55.3 157.15,55.3 157.4,56.4 157.65,56.4 157.9,56.3 158.15,56.2 158.4,55.2 158.65,55.5 158.9,55.3 159.15,55.0 159.4,54.9 159.65,55.5 159.9,56.9 160.15,55.4 160.4,55.1 160.65,56.9 160.9,57.0 161.15,55.2 161.4,55.5 161.65,56.3 161.9,55.2 162.15,54.3 162.4,56.1 162.65,56.1 162.9,55.5 163.15,54.6 163.4,54.1 163.65,54.9 163.9,56.8 164.15,56.0 164.4,55.4 164.65,55.9 164.9,57.4 165.15,57.0 165.4,55.8 165.65,56.5 165.9,57.2 166.15,55.9 166.4,56.0 166.65,56.9 166.9,56.2 167.15,55.2 167.4,55.9 167.65,55.8 167.9,55.8 168.15,55.4 168.4,54.4 168.65,56.2 168.9,57.4 169.15,57.4 169.4,55.5 169.65,57.6 169.9,57.6 170.15,56.2 170.4,56.1 170.65,56.5 170.9,55.6 171.15,57.0 171.4,57.1 171.65,56.7 171.9,55.9 172.15,54.7 172.4,55.7 172.65,57.0 172.9,56.8 173.15,56.1 173.4,55.4 173.65,55.9 173.9,58.8 174.15,58.3 174.4,55.9 174.65,54.2 174.9,53.7 175.15,58.4 175.4,57.7 175.65,57.7 175.9,52.7 176.15,54.1 176.4,57.2 176.65,60.2 176.9,55.2 177.15,51.9 177.4,57.0 177.65,59.3 177.9,55.7 178.15,53.6 178.4,57.4 178.65,57.9 178.9,54.4 179.15,53.3 179.4,57.7 179.65,57.1 179.9,54.1 180.15,55.8 180.4,57.8 180.65,56.0 180.9,55.6 181.15,54.9 181.4,55.7 181.65,54.4 181.9,55.5 182.15,55.4 182.4,54.0 182.65,54.3 182.9,55.3 183.15,56.4 183.4,55.0 183.65,55.1 183.9,56.2 184.15,55.6 184.4,55.0 184.65,55.4 184.9,56.6 185.15,56.1 185.4,55.4 185.65,55.4 185.9,55.7 186.15,56.1 186.4,54.7 186.65,54.8 186.9,55.9 187.15,54.6 187.4,55.6 187.65,56.5 187.9,55.5 188.15,56.9 188.4,56.1 188.65,55.2 188.9,57.3 189.15,55.2 189.4,57.0 189.65,56.3 189.9,55.4 190.15,56.7 190.4,56.9 190.65,56.5 190.9,56.1 191.15,56.4 191.4,57.6 191.65,56.3 191.9,56.4 192.15,56.9 192.4,55.3 192.65,55.2 192.9,58.0 193.15,56.7 193.4,56.4 193.65,57.5 193.9,56.6 194.15,55.6 194.4,55.8 194.65,57.0 194.9,57.4 195.15,55.8 195.4,55.2 195.65,56.4 195.9,56.1 196.15,53.7 196.4,55.8 196.65,54.7 196.9,54.5 197.15,56.2 197.4,54.5 197.65,57.1 197.9,55.5 198.15,55.8 198.4,56.5 198.65,56.7 198.9,56.7 199.15,55.4 199.4,56.1 199.65,57.2 199.9,54.8 200.15,55.0 200.4,56.9 200.65,56.4 200.9,54.4 201.15,55.1 201.4,56.2 201.65,55.6 201.9,54.8 202.15,55.3 202.4,56.5 202.65,55.9 202.9,56.2 203.15,54.0 203.4,55.8 203.65,56.2 203.9,56.2 204.15,55.7 204.4,55.1 204.65,55.4 204.9,56.5 205.15,56.8 205.4,56.2 205.65,54.7 205.9,55.6 206.15,56.5 206.4,56.7 206.65,55.5 206.9,55.0 207.15,54.9 207.4,56.4 207.65,56.0 207.9,53.8 208.15,55.3 208.4,56.5 208.65,56.1 208.9,55.4 209.15,54.6 209.4,55.5 209.65,56.3 209.9,56.0 210.15,55.5 210.4,54.3 210.65,56.4 210.9,57.1 211.15,56.7 211.4,55.4 211.65,55.8 211.9,57.1 212.15,57.4 212.4,54.7 212.65,55.8 212.9,56.1 213.15,53.9 213.4,56.2 213.65,55.8 213.9,55.2 214.15,56.1 214.4,56.3 214.65,55.4 214.9,55.7 215.15,56.7 215.4,57.3 215.65,55.2 215.9,54.9 216.15,55.9 216.4,57.1 216.65,53.8 216.9,55.6 217.15,55.7 217.4,54.7 217.65,54.7 217.9,55.9 218.15,56.0 218.4,55.4 218.65,55.7 218.9,57.7 219.15,55.5 219.4,55.3 219.65,58.1 219.9,55.0 220.15,54.7 220.4,55.9 220.65,57.0 220.9,55.0 221.15,55.6 221.4,54.7 221.65,54.5 221.9,55.3 222.15,57.0 222.4,57.4 222.65,56.3 222.9,57.0 223.15,56.5 223.4,57.0 223.65,58.6 223.9,56.8 224.15,55.9 224.4,56.2 224.65,57.3 224.9,58.3 225.15,56.1 225.4,54.9 225.65,55.9 225.9,56.3 226.15,55.2 226.4,54.6 226.65,56.3 226.9,56.9 227.15,55.4 227.4,55.2 227.65,57.2 227.9,57.0 228.15,55.1 228.4,55.9 228.65,57.4 228.9,56.0 229.15,55.9 229.4,55.7 229.65,55.5 229.9,55.5 230.15,57.3 230.4,56.7 230.65,56.0 230.9,56.4 231.15,56.7 231.4,56.5 231.65,57.4 231.9,57.6 232.15,56.6 232.4,57.1 232.65,58.0 232.9,57.8 233.15,56.9 233.4,56.2 233.65,56.5 233.9,57.0 234.15,55.5 234.4,54.5 234.65,56.2 234.9,57.2 235.15,56.5 235.4,55.3 235.65,56.2 235.9,57.9 236.15,56.0 236.4,55.0 236.65,56.2 236.9,57.1 237.15,55.6 237.4,57.9 237.65,56.9 237.9,57.0 238.15,56.6 238.4,56.5 238.65,56.4 238.9,57.7 239.15,57.3 239.4,55.6 239.65,55.8 239.9,57.9 240.15,56.1 240.4,55.3 240.65,56.8 240.9,57.0 241.15,54.8 241.4,54.6 241.65,55.4 241.9,57.5 242.15,56.0 242.4,55.0 242.65,57.4 242.9,54.9 243.15,57.5 243.4,56.3 243.65,58.0 243.9,56.7 244.15,57.0 244.4,57.6 244.65,55.4 244.9,58.3 245.15,53.6 245.4,60.3 245.65,54.1 245.9,57.9 246.15,56.4 246.4,52.7 246.65,57.7 246.9,56.6 247.15,54.0 247.4,54.4 247.65,56.8 247.9,58.2 248.15,55.8 248.4,54.3 248.65,56.8 248.9,57.8 249.15,55.5 249.4,55.2 249.65,57.3 249.9,56.6 250.15,54.7 250.4,56.7 250.65,58.0 250.9,56.7 251.15,55.4 251.4,56.6 251.65,57.6 251.9,56.1 252.15,55.2 252.4,56.0 252.65,57.2 252.9,55.4 253.15,56.3 253.4,56.6 253.65,56.6 253.9,55.4 254.15,55.2 254.4,56.9 254.65,57.2 254.9,55.7 255.15,56.2 255.4,57.9 255.65,57.3 255.9,55.7 256.15,56.2 256.4,57.3 256.65,55.3 256.9,57.3 257.15,55.8 257.4,55.7 257.65,56.7 257.9,56.7 258.15,55.2 258.4,57.4 258.65,54.9 258.9,55.7 259.15,57.2 259.4,55.9 259.65,55.1 259.9,56.0 260.15,57.2 260.4,57.2 260.65,56.1 260.9,54.9 261.15,57.3 261.4,56.6 261.65,55.4 261.9,57.9 262.15,57.3 262.4,56.0 262.65,57.5 262.9,55.7 263.15,56.4 263.4,57.0 263.65,55.4 263.9,56.2 264.15,57.9 264.4,55.6 264.65,56.9 264.9,55.9 265.15,55.8 265.4,57.8 265.65,55.3 265.9,56.3 266.15,56.9 266.4,54.5 266.65,58.4 266.9,56.2 267.15,55.8 267.4,58.2 267.65,53.9 267.9,60.1 268.15,55.1 268.4,58.3 268.65,58.9 268.9,54.5 269.15,59.1 269.4,53.2 269.65,56.9 269.9,58.3 270.15,53.9 270.4,58.9 270.65,54.2 270.9,57.3 271.15,58.1 271.4,55.3 271.65,55.1 271.9,56.3 272.15,58.1 272.4,56.7 272.65,56.5 272.9,56.4 273.15,57.7 273.4,58.0 273.65,57.0 273.9,55.4 274.15,55.9 274.4,57.2 274.65,58.0 274.9,56.6 275.15,55.6 275.4,55.6 275.65,56.6 275.9,56.8 276.15,56.3 276.4,55.5 276.65,56.3 276.9,57.4 277.15,56.7 277.4,57.2 277.65,57.6 277.9,56.8 278.15,57.7 278.4,57.7 278.65,55.9 278.9,56.3 279.15,57.8 279.4,57.1 279.65,56.5 279.9,56.6 280.15,57.8 280.4,57.2 280.65,56.4 280.9,55.9 281.15,57.5 281.4,57.1 281.65,55.2 281.9,58.1 282.15,56.9 282.4,56.5 282.65,57.8 282.9,57.2 283.15,56.7 283.4,57.3 283.65,56.2 283.9,55.9 284.15,57.7 284.4,57.4 284.65,56.1 284.9,57.4 285.15,58.0 285.4,57.4 285.65,57.2 285.9,58.0 286.15,56.2 286.4,56.8 286.65,58.8 286.9,56.8 287.15,55.6 287.4,57.3 287.65,57.0 287.9,55.9 288.15,57.0 288.4,57.3 288.65,56.0 288.9,56.9 289.15,57.8 289.4,57.1 289.65,55.8 289.9,57.1 290.15,57.2 290.4,56.2 290.65,56.9 290.9,57.0 291.15,54.7 291.4,56.8 291.65,57.1 291.9,57.1 292.15,55.8 292.4,55.6 292.65,57.1 292.9,56.4 293.15,55.4" fill="none" stroke="#0808ff" stroke-width="1.08" stroke-linejoin="round"/><rect x="38.0" y="16.3" width="255.39999999999998" height="86.4" fill="none" stroke="#767676" stroke-width="1.7"/><g font-family="'DejaVu Sans','Liberation Sans',sans-serif" font-size="10.9" fill="#545454" text-anchor="end"><text x="34.7" y="20.4">9500</text><text x="34.7" y="41.8">9000</text><text x="34.7" y="63.3">8500</text><text x="34.7" y="84.8">8000</text><text x="34.7" y="106.2">7500</text></g><g font-family="'DejaVu Serif','Liberation Serif',serif" font-size="10.8" fill="#545454" text-anchor="middle"><text x="38.4" y="115.9">0</text><text x="88.4" y="115.9">200</text><text x="138.4" y="115.9">400</text><text x="188.4" y="115.9">600</text><text x="238.4" y="115.9">800</text><text x="288.4" y="115.9">1000</text></g><rect x="186.4" y="24.3" width="13.4" height="10.4" fill="#fff" stroke="#ccc" stroke-width="1"/><rect x="187.8" y="25.7" width="10.6" height="7.6" fill="#0000ff"/><text x="203.6" y="32.8" font-family="'DejaVu Serif','Liberation Serif',serif" font-size="11.2" fill="#8a8a8a" textLength="83.6" lengthAdjust="spacing">nnaida8 1.8.W</text><path d="M292.8 6.800L302.900 16.900L292.800 27L282.700 16.900Z" fill="#ff0000"/></svg>
<svg class="a" style="left:9.0px;top:543.0px" width="313" height="121" viewBox="0 0 313 121"><path d="M88.4 16.3V102.7M138.4 16.3V102.7M188.4 16.3V102.7M238.4 16.3V102.7M288.4 16.3V102.7M38.0 37.9H293.4M38.0 59.5H293.4M38.0 81.1H293.4" stroke="#e6e6e6" stroke-width=".9" fill="none"/><polyline points="38.4,57.8 38.65,54.3 38.9,54.2 39.15,55.7 39.4,55.2 39.65,55.1 39.9,56.8 40.15,54.9 40.4,55.8 40.65,56.9 40.9,57.5 41.15,54.4 41.4,56.0 41.65,57.6 41.9,56.3 42.15,54.6 42.4,54.9 42.65,57.8 42.9,55.6 43.15,54.5 43.4,55.4 43.65,56.4 43.9,56.0 44.15,55.9 44.4,56.5 44.65,55.9 44.9,55.4 45.15,58.8 45.4,54.6 45.65,57.3 45.9,58.0 46.15,55.6 46.4,56.4 46.65,57.0 46.9,56.5 47.15,55.3 47.4,58.6 47.65,55.9 47.9,56.1 48.15,58.6 48.4,57.7 48.65,53.6 48.9,58.4 49.15,58.5 49.4,54.0 49.65,62.1 49.9,53.0 50.15,55.3 50.4,60.5 50.65,60.7 50.9,54.8 51.15,55.1 51.4,60.4 51.65,61.0 51.9,55.1 52.15,54.8 52.4,60.8 52.65,60.6 52.9,55.1 53.15,58.8 53.4,62.3 53.65,57.2 53.9,55.0 54.15,64.1 54.4,58.4 54.65,55.1 54.9,64.5 55.15,55.5 55.4,53.3 55.65,62.3 55.9,54.7 56.15,55.1 56.4,58.9 56.65,55.9 56.9,63.0 57.15,56.6 57.4,56.3 57.65,61.6 57.9,50.5 58.15,60.1 58.4,53.4 58.65,55.3 58.9,60.2 59.15,51.0 59.4,59.4 59.65,52.7 59.9,55.4 60.15,58.1 60.4,53.0 60.65,56.7 60.9,55.9 61.15,56.4 61.4,56.3 61.65,58.2 61.9,56.2 62.15,55.3 62.4,58.4 62.65,54.5 62.9,57.3 63.15,56.3 63.4,55.1 63.65,57.4 63.9,56.1 64.15,58.5 64.4,58.9 64.65,55.8 64.9,57.0 65.15,56.4 65.4,55.1 65.65,54.7 65.9,57.2 66.15,54.1 66.4,53.1 66.65,55.6 66.9,55.9 67.15,54.6 67.4,52.8 67.65,55.1 67.9,57.0 68.15,55.8 68.4,53.5 68.65,52.2 68.9,54.3 69.15,56.9 69.4,53.9 69.65,54.9 69.9,54.4 70.15,55.9 70.4,55.9 70.65,54.3 70.9,57.6 71.15,55.4 71.4,53.7 71.65,55.3 71.9,57.1 72.15,56.4 72.4,53.4 72.65,52.6 72.9,54.9 73.15,56.3 73.4,53.7 73.65,55.9 73.9,56.0 74.15,53.4 74.4,54.3 74.65,55.6 74.9,55.5 75.15,54.4 75.4,55.2 75.65,57.3 75.9,55.4 76.15,53.6 76.4,54.4 76.65,54.9 76.9,53.2 77.15,52.6 77.4,56.0 77.65,56.8 77.9,56.3 78.15,54.3 78.4,56.9 78.65,56.7 78.9,54.7 79.15,53.5 79.4,53.9 79.65,55.4 79.9,54.9 80.15,52.1 80.4,52.9 80.65,55.3 80.9,52.2 81.15,54.4 81.4,54.7 81.65,51.7 81.9,55.8 82.15,52.5 82.4,53.5 82.65,56.0 82.9,54.9 83.15,52.0 83.4,54.6 83.65,54.4 83.9,52.3 84.15,53.3 84.4,55.4 84.65,54.3 84.9,51.4 85.15,50.3 85.4,54.2 85.65,53.5 85.9,50.3 86.15,52.8 86.4,55.5 86.65,50.2 86.9,48.9 87.15,54.2 87.4,56.6 87.65,47.8 87.9,55.1 88.15,52.2 88.4,48.9 88.65,57.6 88.9,51.9 89.15,49.0 89.4,56.8 89.65,51.4 89.9,53.4 90.15,54.8 90.4,50.3 90.65,53.8 90.9,54.9 91.15,49.4 91.4,55.2 91.65,55.7 91.9,51.9 92.15,49.7 92.4,52.5 92.65,55.4 92.9,53.3 93.15,53.3 93.4,53.3 93.65,55.2 93.9,52.8 94.15,52.8 94.4,53.0 94.65,57.1 94.9,52.8 95.15,53.5 95.4,55.3 95.65,57.6 95.9,52.9 96.15,52.6 96.4,53.7 96.65,53.5 96.9,52.7 97.15,55.7 97.4,52.6 97.65,55.1 97.9,55.2 98.15,54.8 98.4,56.0 98.65,54.2 98.9,54.5 99.15,56.0 99.4,53.6 99.65,53.7 99.9,54.7 100.15,54.9 100.4,54.5 100.65,53.5 100.9,56.2 101.15,57.7 101.4,55.2 101.65,55.0 101.9,55.9 102.15,56.7 102.4,57.4 102.65,57.4 102.9,55.3 103.15,55.6 103.4,55.1 103.65,55.5 103.9,54.7 104.15,53.3 104.4,53.2 104.65,56.0 104.9,56.4 105.15,56.9 105.4,57.0 105.65,57.3 105.9,57.0 106.15,56.7 106.4,57.6 106.65,57.2 106.9,57.0 107.15,56.7 107.4,58.9 107.65,55.9 107.9,55.9 108.15,57.9 108.4,57.8 108.65,56.4 108.9,55.0 109.15,55.7 109.4,57.4 109.65,57.6 109.9,54.0 110.15,55.6 110.4,56.7 110.65,54.8 110.9,56.9 111.15,55.9 111.4,55.4 111.65,57.9 111.9,56.7 112.15,54.7 112.4,57.6 112.65,57.0 112.9,56.9 113.15,56.1 113.4,55.5 113.65,57.5 113.9,56.8 114.15,53.6 114.4,54.9 114.65,58.2 114.9,56.4 115.15,54.6 115.4,57.9 115.65,59.0 115.9,54.7 116.15,55.0 116.4,58.7 116.65,54.4 116.9,56.8 117.15,56.3 117.4,54.2 117.65,55.8 117.9,57.8 118.15,56.7 118.4,54.7 118.65,55.7 118.9,56.5 119.15,57.4 119.4,55.5 119.65,55.0 119.9,56.5 120.15,54.1 120.4,54.6 120.65,56.5 120.9,54.2 121.15,56.8 121.4,56.3 121.65,55.4 121.9,55.9 122.15,55.5 122.4,54.5 122.65,55.6 122.9,56.2 123.15,55.2 123.4,56.4 123.65,56.7 123.9,54.7 124.15,56.6 124.4,56.5 124.65,54.1 124.9,56.0 125.15,57.0 125.4,55.1 125.65,54.6 125.9,55.9 126.15,53.8 126.4,55.1 126.65,56.9 126.9,56.3 127.15,54.6 127.4,53.3 127.65,55.2 127.9,55.8 128.15,54.3 128.4,53.2 128.65,55.1 128.9,56.1 129.15,56.8 129.4,53.8 129.65,57.4 129.9,53.5 130.15,56.3 130.4,55.2 130.65,52.0 130.9,56.0 131.15,54.2 131.4,54.1 131.65,54.4 131.9,53.5 132.15,52.5 132.4,55.0 132.65,55.8 132.9,54.2 133.15,55.6 133.4,53.7 133.65,54.3 133.9,55.4 134.15,54.5 134.4,55.4 134.65,54.1 134.9,53.2 135.15,54.4 135.4,56.5 135.65,54.5 135.9,52.3 136.15,50.9 136.4,53.0 136.65,54.9 136.9,54.3 137.15,51.9 137.4,51.3 137.65,54.6 137.9,54.8 138.15,54.7 138.4,52.4 138.65,51.7 138.9,55.1 139.15,55.3 139.4,52.0 139.65,51.5 139.9,52.8 140.15,54.5 140.4,52.9 140.65,52.2 140.9,51.0 141.15,53.1 141.4,54.5 141.65,54.4 141.9,50.6 142.15,52.0 142.4,54.8 142.65,53.6 142.9,51.4 143.15,51.1 143.4,54.4 143.65,52.8 143.9,53.4 144.15,53.3 144.4,52.1 144.65,56.0 144.9,50.6 145.15,50.9 145.4,56.3 145.65,52.8 145.9,50.4 146.15,53.1 146.4,56.3 146.65,55.5 146.9,51.4 147.15,48.6 147.4,48.9 147.65,54.1 147.9,51.9 148.15,51.6 148.4,53.7 148.65,51.0 148.9,55.0 149.15,50.8 149.4,54.9 149.65,53.2 149.9,50.3 150.15,53.0 150.4,49.6 150.65,54.5 150.9,54.7 151.15,52.0 151.4,52.8 151.65,51.7 151.9,52.7 152.15,53.7 152.4,50.7 152.65,54.2 152.9,49.9 153.15,53.2 153.4,53.2 153.65,52.2 153.9,51.1 154.15,53.5 154.4,53.3 154.65,51.8 154.9,50.7 155.15,53.3 155.4,54.9 155.65,52.7 155.9,52.2 156.15,52.8 156.4,54.0 156.65,54.0 156.9,52.5 157.15,52.0 157.4,53.4 157.65,53.6 157.9,52.9 158.15,53.9 158.4,53.6 158.65,53.3 158.9,55.7 159.15,55.4 159.4,52.8 159.65,54.5 159.9,56.6 160.15,54.2 160.4,54.1 160.65,55.8 160.9,56.0 161.15,53.0 161.4,54.1 161.65,55.6 161.9,55.8 162.15,53.7 162.4,53.7 162.65,56.1 162.9,52.3 163.15,57.3 163.4,52.1 163.65,56.1 163.9,55.3 164.15,52.1 164.4,53.2 164.65,56.4 164.9,57.7 165.15,52.2 165.4,56.5 165.65,52.3 165.9,55.4 166.15,56.0 166.4,51.4 166.65,57.9 166.9,52.8 167.15,56.1 167.4,57.2 167.65,49.8 167.9,56.9 168.15,54.2 168.4,51.6 168.65,56.9 168.9,52.0 169.15,52.7 169.4,57.3 169.65,51.4 169.9,53.9 170.15,58.8 170.4,55.4 170.65,55.2 170.9,55.2 171.15,60.7 171.4,59.0 171.65,57.0 171.9,55.2 172.15,58.5 172.4,59.4 172.65,59.3 172.9,52.7 173.15,50.2 173.4,60.3 173.65,63.4 173.9,56.2 174.15,52.1 174.4,59.5 174.65,62.5 174.9,58.7 175.15,53.9 175.4,59.6 175.65,62.9 175.9,60.5 176.15,54.1 176.4,56.5 176.65,58.8 176.9,58.6 177.15,55.4 177.4,55.2 177.65,59.1 177.9,59.8 178.15,58.4 178.4,56.4 178.65,59.2 178.9,59.4 179.15,57.8 179.4,56.0 179.65,57.0 179.9,57.9 180.15,56.3 180.4,56.2 180.65,57.2 180.9,54.0 181.15,57.7 181.4,57.0 181.65,56.0 181.9,60.5 182.15,57.6 182.4,53.7 182.65,58.6 182.9,54.7 183.15,52.8 183.4,62.2 183.65,57.7 183.9,51.6 184.15,59.1 184.4,53.5 184.65,56.4 184.9,56.1 185.15,53.9 185.4,59.7 185.65,52.4 185.9,56.0 186.15,55.2 186.4,50.6 186.65,59.7 186.9,57.0 187.15,53.1 187.4,48.6 187.65,53.3 187.9,60.8 188.15,55.7 188.4,49.9 188.65,58.0 188.9,58.0 189.15,51.1 189.4,58.6 189.65,59.0 189.9,53.8 190.15,55.1 190.4,58.5 190.65,54.6 190.9,56.4 191.15,60.4 191.4,54.0 191.65,49.4 191.9,52.8 192.15,60.2 192.4,56.7 192.65,52.9 192.9,58.6 193.15,59.5 193.4,53.8 193.65,57.8 193.9,56.8 194.15,55.5 194.4,59.1 194.65,55.5 194.9,54.6 195.15,57.5 195.4,58.1 195.65,55.1 195.9,57.5 196.15,56.8 196.4,55.5 196.65,55.7 196.9,57.1 197.15,56.7 197.4,55.0 197.65,54.2 197.9,55.1 198.15,55.3 198.4,55.9 198.65,54.9 198.9,54.3 199.15,55.2 199.4,55.7 199.65,55.4 199.9,53.2 200.15,54.9 200.4,56.1 200.65,55.5 200.9,54.7 201.15,55.0 201.4,57.5 201.65,57.0 201.9,55.0 202.15,53.9 202.4,55.7 202.65,57.0 202.9,54.6 203.15,54.3 203.4,54.4 203.65,58.0 203.9,56.1 204.15,55.8 204.4,54.7 204.65,55.8 204.9,56.6 205.15,55.7 205.4,55.9 205.65,56.8 205.9,55.9 206.15,54.2 206.4,56.3 206.65,55.3 206.9,53.3 207.15,55.3 207.4,56.1 207.65,54.9 207.9,54.1 208.15,56.1 208.4,54.9 208.65,54.2 208.9,56.2 209.15,56.2 209.4,55.9 209.65,55.8 209.9,56.2 210.15,57.1 210.4,56.2 210.65,54.7 210.9,55.1 211.15,57.0 211.4,55.0 211.65,53.0 211.9,55.1 212.15,56.6 212.4,53.0 212.65,52.0 212.9,56.5 213.15,56.3 213.4,52.3 213.65,53.4 213.9,56.7 214.15,54.8 214.4,53.5 214.65,52.3 214.9,54.8 215.15,56.4 215.4,53.5 215.65,55.3 215.9,58.9 216.15,53.0 216.4,54.3 216.65,57.3 216.9,57.8 217.15,54.9 217.4,55.0 217.65,58.8 217.9,59.5 218.15,57.4 218.4,57.2 218.65,59.3 218.9,59.1 219.15,55.1 219.4,59.0 219.65,60.0 219.9,55.9 220.15,58.4 220.4,59.4 220.65,56.6 220.9,56.3 221.15,57.9 221.4,57.2 221.65,55.7 221.9,57.2 222.15,57.8 222.4,56.4 222.65,57.5 222.9,58.4 223.15,57.3 223.4,57.4 223.65,56.0 223.9,57.7 224.15,57.7 224.4,57.9 224.65,56.4 224.9,58.0 225.15,60.3 225.4,56.9 225.65,57.2 225.9,60.2 226.15,56.7 226.4,57.8 226.65,58.6 226.9,57.2 227.15,55.2 227.4,56.3 227.65,57.9 227.9,55.7 228.15,55.5 228.4,57.7 228.65,59.3 228.9,59.3 229.15,57.1 229.4,55.2 229.65,56.6 229.9,57.4 230.15,56.2 230.4,55.0 230.65,55.4 230.9,59.6 231.15,60.5 231.4,57.3 231.65,56.4 231.9,58.6 232.15,57.5 232.4,54.5 232.65,57.3 232.9,58.2 233.15,55.8 233.4,56.4 233.65,57.0 233.9,57.7 234.15,57.0 234.4,56.3 234.65,56.7 234.9,57.4 235.15,56.0 235.4,54.2 235.65,56.0 235.9,57.2 236.15,55.2 236.4,53.0 236.65,56.0 236.9,57.5 237.15,56.2 237.4,53.2 237.65,53.9 237.9,57.1 238.15,55.3 238.4,54.1 238.65,56.5 238.9,56.1 239.15,55.7 239.4,57.1 239.65,55.3 239.9,55.2 240.15,57.2 240.4,55.8 240.65,57.8 240.9,55.7 241.15,55.1 241.4,55.5 241.65,55.3 241.9,56.3 242.15,56.5 242.4,54.8 242.65,52.5 242.9,55.6 243.15,58.5 243.4,54.8 243.65,54.1 243.9,54.9 244.15,57.1 244.4,56.9 244.65,52.2 244.9,59.7 245.15,51.6 245.4,56.4 245.65,59.7 245.9,52.1 246.15,52.9 246.4,60.9 246.65,53.6 246.9,50.6 247.15,57.2 247.4,55.4 247.65,51.7 247.9,55.4 248.15,57.4 248.4,51.2 248.65,54.7 248.9,56.7 249.15,52.6 249.4,51.8 249.65,54.8 249.9,53.3 250.15,49.4 250.4,54.5 250.65,60.3 250.9,51.8 251.15,55.5 251.4,57.0 251.65,53.5 251.9,56.6 252.15,53.9 252.4,52.5 252.65,54.1 252.9,56.9 253.15,54.2 253.4,50.9 253.65,53.5 253.9,55.2 254.15,52.2 254.4,53.5 254.65,55.9 254.9,54.3 255.15,52.8 255.4,54.0 255.65,56.0 255.9,55.5 256.15,54.5 256.4,52.8 256.65,56.0 256.9,56.3 257.15,53.5 257.4,53.0 257.65,55.0 257.9,54.2 258.15,51.4 258.4,55.0 258.65,56.0 258.9,55.5 259.15,53.0 259.4,53.9 259.65,54.2 259.9,54.3 260.15,53.1 260.4,52.4 260.65,53.5 260.9,53.4 261.15,53.3 261.4,53.7 261.65,56.2 261.9,52.5 262.15,50.9 262.4,56.5 262.65,54.7 262.9,51.3 263.15,52.9 263.4,55.5 263.65,54.0 263.9,51.9 264.15,53.7 264.4,55.8 264.65,51.7 264.9,50.8 265.15,55.1 265.4,56.2 265.65,50.8 265.9,53.3 266.15,56.9 266.4,55.7 266.65,51.7 266.9,51.9 267.15,56.8 267.4,56.3 267.65,52.4 267.9,50.2 268.15,55.4 268.4,54.7 268.65,54.7 268.9,56.2 269.15,55.1 269.4,55.2 269.65,56.1 269.9,55.5 270.15,54.4 270.4,56.4 270.65,56.0 270.9,54.7 271.15,55.1 271.4,57.6 271.65,55.1 271.9,54.6 272.15,56.8 272.4,56.3 272.65,54.0 272.9,54.4 273.15,57.2 273.4,57.2 273.65,54.3 273.9,55.9 274.15,57.5 274.4,59.7 274.65,59.0 274.9,55.8 275.15,55.1 275.4,58.4 275.65,59.7 275.9,56.2 276.15,54.2 276.4,58.5 276.65,59.3 276.9,53.6 277.15,53.2 277.4,57.2 277.65,60.6 277.9,58.7 278.15,54.1 278.4,55.5 278.65,61.2 278.9,62.8 279.15,58.2 279.4,51.8 279.65,56.3 279.9,64.8 280.15,56.3 280.4,55.6 280.65,58.1 280.9,60.4 281.15,56.7 281.4,58.7 281.65,61.8 281.9,58.2 282.15,56.1 282.4,62.1 282.65,54.1 282.9,55.8 283.15,64.9 283.4,57.6 283.65,59.6 283.9,60.8 284.15,54.9 284.4,58.5 284.65,57.5 284.9,55.1 285.15,57.7 285.4,60.6 285.65,59.1 285.9,54.6 286.15,55.0 286.4,59.8 286.65,60.1 286.9,53.7 287.15,57.4 287.4,61.8 287.65,60.5 287.9,54.6 288.15,56.0 288.4,59.7 288.65,61.5 288.9,59.6 289.15,58.3 289.4,60.9 289.65,60.0 289.9,58.5 290.15,60.0 290.4,59.8 290.65,57.5 290.9,58.4 291.15,59.8 291.4,60.4 291.65,57.1 291.9,58.2 292.15,60.3 292.4,60.5 292.65,59.3 292.9,57.4 293.15,59.8" fill="none" stroke="#0808ff" stroke-width="1.08" stroke-linejoin="round"/><rect x="38.0" y="16.3" width="255.39999999999998" height="86.4" fill="none" stroke="#767676" stroke-width="1.7"/><g font-family="'DejaVu Sans','Liberation Sans',sans-serif" font-size="10.9" fill="#545454" text-anchor="end"><text x="34.7" y="20.4">9500</text><text x="34.7" y="41.8">9000</text><text x="34.7" y="63.3">8500</text><text x="34.7" y="84.8">8000</text><text x="34.7" y="106.2">7500</text></g><g font-family="'DejaVu Serif','Liberation Serif',serif" font-size="10.8" fill="#545454" text-anchor="middle"><text x="38.4" y="115.9">0</text><text x="88.4" y="115.9">200</text><text x="138.4" y="115.9">400</text><text x="188.4" y="115.9">600</text><text x="238.4" y="115.9">800</text><text x="288.4" y="115.9">1000</text></g><rect x="179.4" y="24.3" width="13.4" height="10.4" fill="#fff" stroke="#ccc" stroke-width="1"/><rect x="180.8" y="25.7" width="10.6" height="7.6" fill="#0000ff"/><text x="196.6" y="32.8" font-family="'DejaVu Serif','Liberation Serif',serif" font-size="11.2" fill="#8a8a8a" textLength="90.6" lengthAdjust="spacing">nnaida11 1.8.W</text><path d="M292.8 6.800L302.900 16.900L292.800 27L282.700 16.900Z" fill="#ff0000"/></svg>
<svg class="a" style="left:322.4px;top:543.0px" width="313" height="121" viewBox="0 0 313 121"><path d="M88.4 16.3V102.7M138.4 16.3V102.7M188.4 16.3V102.7M238.4 16.3V102.7M288.4 16.3V102.7M38.0 37.9H293.4M38.0 59.5H293.4M38.0 81.1H293.4" stroke="#e6e6e6" stroke-width=".9" fill="none"/><polyline points="38.4,52.6 38.65,50.6 38.9,53.1 39.15,52.3 39.4,51.8 39.65,51.4 39.9,52.3 40.15,52.5 40.4,52.8 40.65,52.4 40.9,51.6 41.15,51.3 41.4,51.5 41.65,51.9 41.9,51.4 42.15,51.6 42.4,52.4 42.65,52.3 42.9,51.5 43.15,51.8 43.4,52.1 43.65,52.8 43.9,52.4 44.15,51.9 44.4,52.3 44.65,53.3 44.9,51.9 45.15,53.7 45.4,52.8 45.65,52.4 45.9,52.8 46.15,52.4 46.4,52.9 46.65,53.4 46.9,52.3 47.15,52.4 47.4,53.1 47.65,52.8 47.9,51.7 48.15,51.9 48.4,52.8 48.65,52.5 48.9,50.9 49.15,52.9 49.4,52.2 49.65,51.1 49.9,52.3 50.15,52.1 50.4,51.1 50.65,52.2 50.9,51.2 51.15,50.8 51.4,52.0 51.65,51.3 51.9,52.0 52.15,50.5 52.4,50.5 52.65,50.5 52.9,49.3 53.15,50.3 53.4,50.9 53.65,50.0 53.9,51.3 54.15,51.4 54.4,50.8 54.65,50.3 54.9,50.8 55.15,51.4 55.4,50.9 55.65,50.4 55.9,51.2 56.15,52.7 56.4,52.3 56.65,52.0 56.9,52.1 57.15,53.1 57.4,51.8 57.65,52.0 57.9,51.2 58.15,50.8 58.4,52.6 58.65,53.5 58.9,51.4 59.15,50.5 59.4,54.5 59.65,53.6 59.9,50.6 60.15,54.3 60.4,49.8 60.65,49.3 60.9,52.9 61.15,53.8 61.4,49.5 61.65,49.0 61.9,49.5 62.15,51.9 62.4,49.3 62.65,49.5 62.9,52.3 63.15,49.8 63.4,50.1 63.65,51.3 63.9,55.2 64.15,52.4 64.4,51.9 64.65,51.3 64.9,54.1 65.15,54.1 65.4,50.7 65.65,52.4 65.9,52.0 66.15,54.0 66.4,52.2 66.65,50.0 66.9,48.3 67.15,50.5 67.4,55.1 67.65,52.6 67.9,52.3 68.15,49.7 68.4,51.9 68.65,55.9 68.9,55.1 69.15,52.0 69.4,50.7 69.65,50.4 69.9,54.5 70.15,55.8 70.4,51.1 70.65,50.7 70.9,54.3 71.15,53.4 71.4,50.9 71.65,54.4 71.9,55.5 72.15,54.2 72.4,50.2 72.65,50.4 72.9,52.5 73.15,52.8 73.4,50.8 73.65,49.5 73.9,51.3 74.15,53.1 74.4,51.8 74.65,49.6 74.9,49.9 75.15,52.0 75.4,51.5 75.65,52.2 75.9,52.6 76.15,52.3 76.4,52.8 76.65,52.7 76.9,53.3 77.15,53.6 77.4,53.2 77.65,53.4 77.9,53.6 78.15,52.6 78.4,51.9 78.65,52.2 78.9,52.4 79.15,51.4 79.4,50.5 79.65,51.6 79.9,52.5 80.15,52.2 80.4,51.2 80.65,50.8 80.9,51.7 81.15,52.3 81.4,51.8 81.65,51.1 81.9,52.5 82.15,53.2 82.4,52.6 82.65,51.0 82.9,49.1 83.15,52.0 83.4,50.3 83.65,50.4 83.9,50.4 84.15,50.8 84.4,50.9 84.65,50.5 84.9,52.3 85.15,52.2 85.4,48.2 85.65,50.9 85.9,55.2 86.15,53.2 86.4,48.8 86.65,48.9 86.9,55.3 87.15,54.9 87.4,45.1 87.65,50.4 87.9,51.9 88.15,53.0 88.4,54.7 88.65,46.4 88.9,50.0 89.15,52.8 89.4,54.7 89.65,54.2 89.9,48.8 90.15,49.0 90.4,49.7 90.65,56.1 90.9,54.1 91.15,51.7 91.4,50.9 91.65,52.1 91.9,53.6 92.15,54.6 92.4,50.4 92.65,52.7 92.9,51.9 93.15,52.8 93.4,52.2 93.65,51.2 93.9,52.0 94.15,52.0 94.4,51.8 94.65,51.5 94.9,52.5 95.15,52.8 95.4,52.2 95.65,53.4 95.9,50.9 96.15,53.2 96.4,50.6 96.65,52.1 96.9,50.8 97.15,50.5 97.4,51.5 97.65,50.6 97.9,50.6 98.15,51.9 98.4,51.4 98.65,51.8 98.9,52.8 99.15,52.6 99.4,52.0 99.65,52.2 99.9,52.6 100.15,52.3 100.4,52.1 100.65,52.3 100.9,53.5 101.15,54.0 101.4,50.4 101.65,52.9 101.9,53.2 102.15,50.7 102.4,51.1 102.65,52.2 102.9,52.2 103.15,51.6 103.4,50.4 103.65,53.4 103.9,51.8 104.15,50.3 104.4,52.4 104.65,53.7 104.9,51.0 105.15,51.1 105.4,53.3 105.65,49.8 105.9,50.5 106.15,52.5 106.4,49.5 106.65,49.3 106.9,51.0 107.15,50.9 107.4,49.4 107.65,52.9 107.9,52.8 108.15,50.6 108.4,50.4 108.65,51.8 108.9,51.8 109.15,51.1 109.4,51.6 109.65,53.6 109.9,52.0 110.15,51.3 110.4,52.0 110.65,52.5 110.9,53.2 111.15,52.4 111.4,51.8 111.65,51.2 111.9,52.9 112.15,52.2 112.4,51.6 112.65,51.8 112.9,51.8 113.15,51.3 113.4,51.2 113.65,51.9 113.9,51.6 114.15,50.4 114.4,51.5 114.65,52.0 114.9,51.6 115.15,51.9 115.4,51.6 115.65,50.9 115.9,50.6 116.15,51.5 116.4,51.0 116.65,51.4 116.9,52.3 117.15,51.4 117.4,52.3 117.65,52.8 117.9,52.1 118.15,51.7 118.4,52.3 118.65,53.1 118.9,50.8 119.15,51.1 119.4,51.7 119.65,51.9 119.9,50.8 120.15,50.2 120.4,50.8 120.65,51.5 120.9,50.7 121.15,50.8 121.4,51.1 121.65,53.5 121.9,50.2 122.15,50.4 122.4,52.2 122.65,54.2 122.9,49.7 123.15,55.2 123.4,50.4 123.65,54.6 123.9,52.8 124.15,50.3 124.4,50.3 124.65,52.7 124.9,53.2 125.15,51.9 125.4,47.9 125.65,55.8 125.9,56.0 126.15,51.5 126.4,52.3 126.65,53.3 126.9,51.1 127.15,49.4 127.4,52.0 127.65,54.0 127.9,48.2 128.15,54.0 128.4,59.5 128.65,49.5 128.9,50.9 129.15,52.8 129.4,52.0 129.65,52.1 129.9,50.5 130.15,52.8 130.4,52.5 130.65,53.4 130.9,51.6 131.15,50.6 131.4,51.8 131.65,52.7 131.9,51.3 132.15,51.0 132.4,50.4 132.65,51.3 132.9,51.1 133.15,51.2 133.4,50.5 133.65,50.6 133.9,51.5 134.15,52.0 134.4,51.9 134.65,51.8 134.9,51.8 135.15,51.2 135.4,51.7 135.65,51.3 135.9,51.6 136.15,51.7 136.4,52.4 136.65,52.7 136.9,51.5 137.15,51.1 137.4,51.3 137.65,51.3 137.9,51.5 138.15,51.0 138.4,50.7 138.65,50.8 138.9,51.3 139.15,51.9 139.4,52.1 139.65,51.9 139.9,51.8 140.15,51.7 140.4,51.5 140.65,50.5 140.9,50.3 141.15,51.6 141.4,50.5 141.65,50.3 141.9,49.8 142.15,50.7 142.4,51.9 142.65,51.9 142.9,51.2 143.15,50.8 143.4,53.2 143.65,51.8 143.9,52.4 144.15,52.0 144.4,52.2 144.65,52.7 144.9,51.7 145.15,52.7 145.4,52.5 145.65,52.3 145.9,53.0 146.15,52.3 146.4,52.1 146.65,51.6 146.9,50.9 147.15,50.0 147.4,50.8 147.65,52.0 147.9,52.8 148.15,52.7 148.4,52.0 148.65,52.6 148.9,53.1 149.15,52.6 149.4,52.0 149.65,52.6 149.9,52.8 150.15,52.1 150.4,50.7 150.65,50.1 150.9,51.9 151.15,52.9 151.4,52.3 151.65,50.6 151.9,52.3 152.15,52.7 152.4,52.4 152.65,51.3 152.9,50.7 153.15,53.4 153.4,52.0 153.65,51.2 153.9,54.6 154.15,50.9 154.4,53.4 154.65,51.0 154.9,52.0 155.15,52.9 155.4,52.8 155.65,51.8 155.9,50.8 156.15,50.6 156.4,52.3 156.65,53.1 156.9,50.7 157.15,51.3 157.4,51.8 157.65,50.1 157.9,50.3 158.15,53.7 158.4,51.8 158.65,50.5 158.9,50.6 159.15,53.7 159.4,49.2 159.65,51.8 159.9,54.1 160.15,49.5 160.4,52.9 160.65,53.7 160.9,49.2 161.15,51.9 161.4,54.4 161.65,50.7 161.9,52.0 162.15,53.0 162.4,51.1 162.65,51.0 162.9,52.9 163.15,50.3 163.4,51.3 163.65,53.3 163.9,50.0 164.15,50.9 164.4,52.4 164.65,51.2 164.9,50.3 165.15,52.3 165.4,50.1 165.65,49.3 165.9,51.6 166.15,50.7 166.4,50.4 166.65,51.7 166.9,52.3 167.15,51.1 167.4,51.8 167.65,52.2 167.9,52.4 168.15,51.2 168.4,53.3 168.65,52.2 168.9,51.5 169.15,51.6 169.4,52.1 169.65,51.2 169.9,51.1 170.15,51.6 170.4,51.2 170.65,50.7 170.9,51.1 171.15,51.0 171.4,51.3 171.65,51.6 171.9,51.7 172.15,51.8 172.4,51.9 172.65,51.5 172.9,51.9 173.15,50.6 173.4,51.8 173.65,50.8 173.9,51.2 174.15,53.0 174.4,51.5 174.65,52.0 174.9,53.0 175.15,51.2 175.4,51.4 175.65,52.3 175.9,51.7 176.15,50.8 176.4,51.1 176.65,51.7 176.9,51.7 177.15,50.5 177.4,51.0 177.65,52.0 177.9,51.9 178.15,51.3 178.4,51.3 178.65,52.5 178.9,52.4 179.15,51.3 179.4,50.5 179.65,52.6 179.9,52.8 180.15,50.3 180.4,48.8 180.65,54.0 180.9,55.0 181.15,51.4 181.4,49.2 181.65,56.0 181.9,56.7 182.15,48.3 182.4,48.9 182.65,56.6 182.9,53.7 183.15,45.8 183.4,51.5 183.65,56.1 183.9,51.5 184.15,45.6 184.4,50.6 184.65,52.0 184.9,53.9 185.15,50.8 185.4,50.5 185.65,53.0 185.9,53.6 186.15,50.5 186.4,51.8 186.65,54.2 186.9,53.5 187.15,49.3 187.4,54.0 187.65,51.8 187.9,50.5 188.15,51.7 188.4,53.9 188.65,52.3 188.9,49.9 189.15,50.7 189.4,52.2 189.65,51.8 189.9,49.6 190.15,52.3 190.4,51.0 190.65,50.5 190.9,50.4 191.15,51.5 191.4,51.6 191.65,51.2 191.9,52.7 192.15,51.1 192.4,51.0 192.65,52.2 192.9,50.8 193.15,52.1 193.4,51.8 193.65,51.4 193.9,52.7 194.15,51.4 194.4,52.5 194.65,51.7 194.9,51.5 195.15,52.7 195.4,51.9 195.65,50.8 195.9,51.7 196.15,52.9 196.4,52.5 196.65,51.7 196.9,51.5 197.15,52.0 197.4,52.4 197.65,51.5 197.9,51.6 198.15,51.7 198.4,51.8 198.65,51.0 198.9,52.7 199.15,52.7 199.4,52.5 199.65,51.9 199.9,51.8 200.15,52.7 200.4,52.8 200.65,52.3 200.9,51.0 201.15,51.2 201.4,51.7 201.65,52.4 201.9,50.4 202.15,50.6 202.4,51.9 202.65,52.5 202.9,50.3 203.15,50.5 203.4,52.2 203.65,51.7 203.9,50.2 204.15,51.0 204.4,52.3 204.65,52.3 204.9,50.9 205.15,50.7 205.4,53.5 205.65,52.3 205.9,49.0 206.15,50.8 206.4,51.4 206.65,50.9 206.9,52.3 207.15,50.6 207.4,52.3 207.65,50.2 207.9,55.7 208.15,51.8 208.4,52.7 208.65,53.0 208.9,49.5 209.15,52.2 209.4,54.1 209.65,50.4 209.9,49.8 210.15,53.3 210.4,50.0 210.65,49.7 210.9,52.0 211.15,51.2 211.4,50.8 211.65,53.8 211.9,48.1 212.15,48.7 212.4,52.8 212.65,46.8 212.9,48.4 213.15,51.6 213.4,49.1 213.65,48.9 213.9,53.8 214.15,51.9 214.4,48.5 214.65,48.0 214.9,52.6 215.15,52.7 215.4,52.8 215.65,49.9 215.9,49.8 216.15,52.1 216.4,52.6 216.65,50.6 216.9,48.7 217.15,51.6 217.4,53.1 217.65,53.7 217.9,51.5 218.15,49.8 218.4,51.8 218.65,53.4 218.9,52.0 219.15,48.9 219.4,50.6 219.65,52.7 219.9,48.6 220.15,48.8 220.4,52.2 220.65,53.1 220.9,52.2 221.15,51.2 221.4,51.3 221.65,53.5 221.9,51.8 222.15,49.8 222.4,51.5 222.65,51.0 222.9,50.7 223.15,50.4 223.4,51.8 223.65,50.3 223.9,50.2 224.15,52.2 224.4,51.5 224.65,51.1 224.9,52.3 225.15,51.7 225.4,50.2 225.65,49.6 225.9,51.4 226.15,51.3 226.4,51.6 226.65,52.1 226.9,52.5 227.15,51.1 227.4,51.1 227.65,51.1 227.9,52.6 228.15,52.3 228.4,50.6 228.65,50.4 228.9,51.4 229.15,52.1 229.4,52.2 229.65,50.5 229.9,51.2 230.15,52.4 230.4,53.0 230.65,52.2 230.9,52.1 231.15,52.5 231.4,52.1 231.65,51.5 231.9,53.2 232.15,51.0 232.4,50.1 232.65,50.4 232.9,50.5 233.15,50.3 233.4,50.6 233.65,52.0 233.9,52.4 234.15,52.4 234.4,52.1 234.65,52.0 234.9,52.5 235.15,51.6 235.4,51.3 235.65,52.2 235.9,51.9 236.15,51.9 236.4,51.7 236.65,52.9 236.9,51.6 237.15,52.0 237.4,52.4 237.65,51.6 237.9,52.8 238.15,52.3 238.4,51.8 238.65,51.9 238.9,52.4 239.15,51.7 239.4,52.6 239.65,51.7 239.9,50.9 240.15,51.9 240.4,51.6 240.65,50.4 240.9,50.6 241.15,51.6 241.4,51.7 241.65,51.3 241.9,50.3 242.15,54.0 242.4,53.6 242.65,51.8 242.9,50.4 243.15,53.2 243.4,54.8 243.65,54.3 243.9,48.6 244.15,48.0 244.4,53.6 244.65,52.9 244.9,46.9 245.15,51.4 245.4,57.4 245.65,49.7 245.9,50.6 246.15,57.8 246.4,54.2 246.65,49.7 246.9,47.7 247.15,50.0 247.4,54.7 247.65,54.2 247.9,51.1 248.15,47.6 248.4,52.0 248.65,50.5 248.9,49.3 249.15,54.6 249.4,49.9 249.65,50.4 249.9,51.7 250.15,51.7 250.4,50.6 250.65,51.6 250.9,52.3 251.15,51.3 251.4,50.4 251.65,50.4 251.9,50.6 252.15,49.5 252.4,49.2 252.65,51.4 252.9,53.1 253.15,51.4 253.4,52.8 253.65,51.8 253.9,51.9 254.15,53.0 254.4,51.9 254.65,53.1 254.9,53.1 255.15,52.1 255.4,52.3 255.65,53.1 255.9,52.6 256.15,51.7 256.4,51.0 256.65,51.6 256.9,51.9 257.15,50.8 257.4,51.0 257.65,52.6 257.9,53.3 258.15,53.1 258.4,51.5 258.65,52.4 258.9,52.2 259.15,51.4 259.4,51.5 259.65,51.1 259.9,50.8 260.15,50.9 260.4,51.1 260.65,52.0 260.9,51.2 261.15,50.7 261.4,51.7 261.65,52.9 261.9,51.6 262.15,52.2 262.4,51.8 262.65,52.2 262.9,52.2 263.15,51.3 263.4,52.1 263.65,51.6 263.9,51.1 264.15,51.7 264.4,50.6 264.65,50.3 264.9,50.8 265.15,49.4 265.4,49.8 265.65,51.3 265.9,50.5 266.15,51.6 266.4,52.2 266.65,51.0 266.9,50.8 267.15,52.1 267.4,50.9 267.65,51.2 267.9,52.0 268.15,51.7 268.4,51.0 268.65,51.2 268.9,51.4 269.15,50.7 269.4,49.6 269.65,50.0 269.9,50.0 270.15,49.3 270.4,50.4 270.65,51.4 270.9,51.6 271.15,52.3 271.4,51.7 271.65,51.3 271.9,52.0 272.15,52.9 272.4,52.5 272.65,51.7 272.9,51.9 273.15,52.2 273.4,53.4 273.65,51.7 273.9,50.1 274.15,52.0 274.4,53.8 274.65,51.3 274.9,48.2 275.15,50.0 275.4,52.6 275.65,50.8 275.9,49.0 276.15,50.7 276.4,54.9 276.65,51.4 276.9,48.0 277.15,48.1 277.4,50.3 277.65,54.1 277.9,51.7 278.15,49.6 278.4,48.6 278.65,52.1 278.9,48.8 279.15,46.7 279.4,49.4 279.65,50.1 279.9,48.3 280.15,50.8 280.4,52.1 280.65,48.9 280.9,51.8 281.15,49.8 281.4,48.8 281.65,52.2 281.9,52.9 282.15,49.7 282.4,47.9 282.65,48.6 282.9,53.6 283.15,53.9 283.4,50.2 283.65,49.7 283.9,50.8 284.15,50.9 284.4,52.2 284.65,50.0 284.9,48.5 285.15,51.0 285.4,52.8 285.65,49.6 285.9,46.6 286.15,50.4 286.4,49.7 286.65,47.6 286.9,49.7 287.15,51.1 287.4,50.1 287.65,49.2 287.9,50.1 288.15,49.5 288.4,49.5 288.65,50.2 288.9,49.8 289.15,48.9 289.4,50.3 289.65,50.9 289.9,50.1 290.15,50.0 290.4,50.8 290.65,49.5 290.9,49.8 291.15,51.1 291.4,50.2 291.65,49.9 291.9,50.6 292.15,49.4 292.4,51.0 292.65,48.8 292.9,49.7 293.15,49.2" fill="none" stroke="#0808ff" stroke-width="1.08" stroke-linejoin="round"/><rect x="38.0" y="16.3" width="255.39999999999998" height="86.4" fill="none" stroke="#767676" stroke-width="1.7"/><g font-family="'DejaVu Sans','Liberation Sans',sans-serif" font-size="10.9" fill="#545454" text-anchor="end"><text x="34.7" y="20.4">9500</text><text x="34.7" y="41.8">9000</text><text x="34.7" y="63.3">8500</text><text x="34.7" y="84.8">8000</text><text x="34.7" y="106.2">7500</text></g><g font-family="'DejaVu Serif','Liberation Serif',serif" font-size="10.8" fill="#545454" text-anchor="middle"><text x="38.4" y="115.9">0</text><text x="88.4" y="115.9">200</text><text x="138.4" y="115.9">400</text><text x="188.4" y="115.9">600</text><text x="238.4" y="115.9">800</text><text x="288.4" y="115.9">1000</text></g><rect x="179.4" y="24.3" width="13.4" height="10.4" fill="#fff" stroke="#ccc" stroke-width="1"/><rect x="180.8" y="25.7" width="10.6" height="7.6" fill="#0000ff"/><text x="196.6" y="32.8" font-family="'DejaVu Serif','Liberation Serif',serif" font-size="11.2" fill="#8a8a8a" textLength="90.6" lengthAdjust="spacing">nnaida12 1.8.W</text><path d="M292.8 6.800L302.900 16.900L292.800 27L282.700 16.900Z" fill="#ff0000"/></svg>
<svg class="a" style="left:635.7px;top:543.0px" width="313" height="121" viewBox="0 0 313 121"><path d="M88.4 16.3V102.7M138.4 16.3V102.7M188.4 16.3V102.7M238.4 16.3V102.7M288.4 16.3V102.7M38.0 37.9H293.4M38.0 59.5H293.4M38.0 81.1H293.4" stroke="#e6e6e6" stroke-width=".9" fill="none"/><polyline points="38.4,50.5 38.65,51.6 38.9,50.9 39.15,50.1 39.4,50.5 39.65,52.1 39.9,52.4 40.15,50.6 40.4,49.1 40.65,47.6 40.9,51.1 41.15,51.2 41.4,51.6 41.65,49.6 41.9,49.3 42.15,50.8 42.4,53.5 42.65,52.5 42.9,50.7 43.15,49.1 43.4,50.2 43.65,50.3 43.9,51.3 44.15,50.6 44.4,50.2 44.65,50.0 44.9,50.1 45.15,49.7 45.4,49.7 45.65,50.2 45.9,50.1 46.15,50.2 46.4,49.9 46.65,49.7 46.9,49.7 47.15,49.9 47.4,49.9 47.65,49.5 47.9,49.8 48.15,50.0 48.4,50.3 48.65,50.8 48.9,50.9 49.15,51.4 49.4,51.5 49.65,51.2 49.9,50.8 50.15,50.7 50.4,50.2 50.65,49.5 50.9,49.4 51.15,49.6 51.4,49.7 51.65,49.8 51.9,50.1 52.15,50.1 52.4,49.9 52.65,50.1 52.9,50.4 53.15,50.2 53.4,50.2 53.65,50.0 53.9,50.2 54.15,50.0 54.4,49.9 54.65,50.3 54.9,50.4 55.15,50.2 55.4,50.3 55.65,50.6 55.9,51.0 56.15,50.3 56.4,50.5 56.65,50.5 56.9,50.1 57.15,49.9 57.4,50.1 57.65,50.7 57.9,50.9 58.15,51.3 58.4,51.7 58.65,52.0 58.9,51.5 59.15,51.5 59.4,51.4 59.65,51.1 59.9,50.7 60.15,50.8 60.4,50.4 60.65,50.4 60.9,50.0 61.15,50.4 61.4,51.2 61.65,51.6 61.9,51.7 62.15,51.8 62.4,51.8 62.65,51.8 62.9,51.4 63.15,51.5 63.4,51.5 63.65,51.5 63.9,51.4 64.15,51.1 64.4,50.8 64.65,50.7 64.9,50.4 65.15,50.3 65.4,50.9 65.65,51.1 65.9,51.3 66.15,51.3 66.4,51.1 66.65,51.2 66.9,51.2 67.15,51.2 67.4,51.5 67.65,51.6 67.9,51.1 68.15,50.2 68.4,49.8 68.65,50.5 68.9,51.0 69.15,51.8 69.4,51.6 69.65,51.5 69.9,51.3 70.15,51.3 70.4,51.2 70.65,51.3 70.9,51.0 71.15,51.4 71.4,52.4 71.65,52.9 71.9,52.6 72.15,52.3 72.4,52.0 72.65,51.9 72.9,51.6 73.15,52.0 73.4,52.0 73.65,52.4 73.9,52.8 74.15,52.9 74.4,53.9 74.65,53.4 74.9,53.3 75.15,52.8 75.4,52.3 75.65,51.9 75.9,51.9 76.15,52.0 76.4,51.7 76.65,51.6 76.9,51.8 77.15,52.0 77.4,51.8 77.65,51.8 77.9,51.9 78.15,51.7 78.4,51.5 78.65,51.6 78.9,51.6 79.15,51.4 79.4,51.1 79.65,51.0 79.9,51.0 80.15,51.2 80.4,51.1 80.65,51.3 80.9,51.5 81.15,52.0 81.4,52.5 81.65,52.0 81.9,51.6 82.15,52.0 82.4,51.0 82.65,51.0 82.9,51.0 83.15,51.0 83.4,51.1 83.65,50.9 83.9,51.0 84.15,50.9 84.4,50.7 84.65,51.3 84.9,51.9 85.15,52.5 85.4,52.4 85.65,52.3 85.9,52.4 86.15,52.4 86.4,52.5 86.65,52.2 86.9,51.9 87.15,52.1 87.4,52.0 87.65,52.1 87.9,52.4 88.15,52.3 88.4,51.9 88.65,51.7 88.9,52.4 89.15,51.5 89.4,51.4 89.65,52.0 89.9,51.4 90.15,50.9 90.4,51.9 90.65,52.5 90.9,52.5 91.15,51.1 91.4,52.0 91.65,53.2 91.9,52.0 92.15,51.2 92.4,51.2 92.65,52.7 92.9,52.3 93.15,50.5 93.4,51.1 93.65,52.6 93.9,52.1 94.15,50.0 94.4,51.2 94.65,51.6 94.9,50.3 95.15,51.0 95.4,52.8 95.65,52.1 95.9,50.2 96.15,50.6 96.4,52.0 96.65,52.6 96.9,51.4 97.15,50.9 97.4,51.9 97.65,52.0 97.9,50.7 98.15,51.7 98.4,52.6 98.65,50.7 98.9,51.0 99.15,52.8 99.4,51.3 99.65,49.4 99.9,51.0 100.15,52.7 100.4,52.3 100.65,51.6 100.9,51.6 101.15,52.6 101.4,52.0 101.65,51.7 101.9,52.5 102.15,51.5 102.4,50.1 102.65,50.9 102.9,51.4 103.15,49.9 103.4,49.5 103.65,50.5 103.9,50.7 104.15,51.4 104.4,51.5 104.65,51.0 104.9,50.8 105.15,50.8 105.4,50.0 105.65,50.3 105.9,50.1 106.15,49.8 106.4,49.6 106.65,49.1 106.9,48.3 107.15,48.5 107.4,48.6 107.65,48.8 107.9,49.3 108.15,49.1 108.4,49.3 108.65,49.6 108.9,49.7 109.15,49.6 109.4,49.2 109.65,49.7 109.9,49.8 110.15,49.8 110.4,49.7 110.65,49.8 110.9,49.7 111.15,49.8 111.4,49.7 111.65,49.6 111.9,49.8 112.15,49.7 112.4,49.9 112.65,50.0 112.9,50.1 113.15,50.0 113.4,50.0 113.65,49.6 113.9,49.4 114.15,48.8 114.4,49.3 114.65,49.9 114.9,49.8 115.15,50.4 115.4,50.8 115.65,50.8 115.9,50.8 116.15,50.7 116.4,50.4 116.65,50.6 116.9,50.5 117.15,50.4 117.4,50.6 117.65,50.7 117.9,50.3 118.15,50.0 118.4,50.2 118.65,50.1 118.9,49.7 119.15,49.8 119.4,49.7 119.65,49.5 119.9,49.6 120.15,49.4 120.4,49.5 120.65,49.6 120.9,49.5 121.15,49.4 121.4,49.4 121.65,49.3 121.9,49.1 122.15,48.9 122.4,48.9 122.65,48.9 122.9,49.0 123.15,49.2 123.4,49.4 123.65,49.7 123.9,49.9 124.15,50.0 124.4,50.2 124.65,50.1 124.9,50.3 125.15,49.8 125.4,49.6 125.65,49.9 125.9,49.8 126.15,49.3 126.4,49.1 126.65,49.4 126.9,49.8 127.15,50.3 127.4,50.0 127.65,49.7 127.9,49.4 128.15,49.4 128.4,49.4 128.65,48.9 128.9,49.0 129.15,48.9 129.4,48.6 129.65,48.7 129.9,48.2 130.15,49.0 130.4,48.8 130.65,47.9 130.9,48.0 131.15,50.1 131.4,49.6 131.65,49.2 131.9,48.1 132.15,50.4 132.4,51.7 132.65,49.3 132.9,49.6 133.15,52.2 133.4,51.0 133.65,49.3 133.9,49.7 134.15,50.9 134.4,49.1 134.65,49.5 134.9,50.8 135.15,48.8 135.4,49.3 135.65,49.8 135.9,49.5 136.15,49.6 136.4,50.3 136.65,50.5 136.9,50.3 137.15,50.7 137.4,50.8 137.65,50.7 137.9,50.7 138.15,50.7 138.4,50.7 138.65,50.7 138.9,50.9 139.15,51.2 139.4,51.1 139.65,51.1 139.9,51.0 140.15,50.8 140.4,51.1 140.65,51.0 140.9,51.1 141.15,51.0 141.4,50.8 141.65,50.9 141.9,50.8 142.15,50.0 142.4,50.1 142.65,49.7 142.9,49.3 143.15,49.5 143.4,50.0 143.65,50.4 143.9,50.4 144.15,50.4 144.4,51.0 144.65,50.8 144.9,50.7 145.15,50.3 145.4,50.2 145.65,49.9 145.9,49.5 146.15,49.2 146.4,49.6 146.65,49.8 146.9,50.0 147.15,50.2 147.4,50.7 147.65,51.0 147.9,51.0 148.15,50.7 148.4,50.3 148.65,50.0 148.9,49.5 149.15,49.1 149.4,49.4 149.65,49.7 149.9,49.8 150.15,50.0 150.4,50.0 150.65,50.2 150.9,50.1 151.15,50.0 151.4,50.1 151.65,50.2 151.9,50.2 152.15,50.1 152.4,49.9 152.65,49.9 152.9,49.4 153.15,49.7 153.4,49.9 153.65,50.1 153.9,49.9 154.15,49.7 154.4,49.9 154.65,49.8 154.9,49.0 155.15,49.7 155.4,50.8 155.65,49.8 155.9,49.8 156.15,50.3 156.4,48.7 156.65,48.3 156.9,49.1 157.15,50.8 157.4,49.2 157.65,47.6 157.9,48.6 158.15,50.3 158.4,51.4 158.65,51.5 158.9,50.6 159.15,49.7 159.4,50.3 159.65,51.2 159.9,50.9 160.15,50.4 160.4,51.5 160.65,48.9 160.9,51.5 161.15,51.3 161.4,49.0 161.65,50.5 161.9,50.1 162.15,50.0 162.4,50.0 162.65,48.8 162.9,50.0 163.15,50.6 163.4,48.9 163.65,48.4 163.9,48.7 164.15,49.9 164.4,50.0 164.65,49.9 164.9,50.3 165.15,50.2 165.4,50.3 165.65,50.2 165.9,50.3 166.15,49.9 166.4,50.0 166.65,50.1 166.9,50.1 167.15,50.3 167.4,50.3 167.65,50.1 167.9,50.2 168.15,50.0 168.4,50.3 168.65,50.2 168.9,50.1 169.15,50.4 169.4,50.3 169.65,50.2 169.9,50.2 170.15,50.5 170.4,50.8 170.65,51.0 170.9,51.1 171.15,51.0 171.4,51.2 171.65,51.5 171.9,51.7 172.15,52.2 172.4,52.3 172.65,52.3 172.9,52.0 173.15,51.6 173.4,51.2 173.65,50.9 173.9,50.2 174.15,50.7 174.4,50.9 174.65,51.3 174.9,51.9 175.15,51.9 175.4,51.6 175.65,51.6 175.9,51.2 176.15,51.2 176.4,50.8 176.65,50.9 176.9,51.0 177.15,51.1 177.4,51.4 177.65,51.7 177.9,51.8 178.15,51.6 178.4,51.7 178.65,51.1 178.9,51.1 179.15,50.5 179.4,51.2 179.65,51.3 179.9,51.7 180.15,51.6 180.4,51.6 180.65,51.3 180.9,51.1 181.15,51.1 181.4,50.9 181.65,51.2 181.9,51.2 182.15,51.2 182.4,51.3 182.65,51.5 182.9,51.9 183.15,51.7 183.4,52.0 183.65,51.8 183.9,51.8 184.15,52.0 184.4,52.2 184.65,52.1 184.9,52.5 185.15,52.6 185.4,52.4 185.65,52.3 185.9,52.4 186.15,52.4 186.4,52.3 186.65,52.0 186.9,51.8 187.15,51.9 187.4,51.6 187.65,51.5 187.9,51.6 188.15,51.5 188.4,52.0 188.65,51.9 188.9,52.1 189.15,52.5 189.4,52.6 189.65,52.0 189.9,51.8 190.15,52.1 190.4,51.8 190.65,51.8 190.9,51.8 191.15,51.8 191.4,51.6 191.65,52.0 191.9,52.4 192.15,52.6 192.4,52.8 192.65,52.6 192.9,52.4 193.15,51.6 193.4,51.3 193.65,51.2 193.9,51.0 194.15,51.2 194.4,51.1 194.65,51.0 194.9,50.5 195.15,50.5 195.4,50.1 195.65,50.4 195.9,50.7 196.15,51.0 196.4,51.8 196.65,52.0 196.9,51.3 197.15,50.6 197.4,50.4 197.65,50.6 197.9,50.4 198.15,50.3 198.4,50.2 198.65,50.2 198.9,50.2 199.15,50.6 199.4,51.0 199.65,51.4 199.9,51.2 200.15,51.8 200.4,51.5 200.65,51.4 200.9,51.1 201.15,51.2 201.4,50.9 201.65,50.9 201.9,50.6 202.15,50.6 202.4,50.8 202.65,50.9 202.9,50.9 203.15,51.0 203.4,51.3 203.65,51.2 203.9,51.0 204.15,51.3 204.4,51.3 204.65,51.6 204.9,51.5 205.15,51.6 205.4,51.5 205.65,50.9 205.9,50.5 206.15,50.1 206.4,50.0 206.65,49.9 206.9,49.8 207.15,49.8 207.4,50.0 207.65,50.2 207.9,50.4 208.15,50.4 208.4,50.6 208.65,50.5 208.9,50.2 209.15,50.3 209.4,50.2 209.65,50.1 209.9,49.6 210.15,49.7 210.4,49.8 210.65,49.4 210.9,49.9 211.15,50.5 211.4,50.6 211.65,50.8 211.9,50.7 212.15,50.4 212.4,50.6 212.65,50.2 212.9,50.4 213.15,50.5 213.4,51.1 213.65,51.2 213.9,51.3 214.15,51.0 214.4,51.0 214.65,51.3 214.9,51.3 215.15,51.2 215.4,51.3 215.65,51.5 215.9,51.3 216.15,50.9 216.4,50.3 216.65,50.2 216.9,50.0 217.15,49.8 217.4,49.7 217.65,50.3 217.9,50.4 218.15,50.5 218.4,50.9 218.65,51.2 218.9,50.7 219.15,50.5 219.4,50.1 219.65,51.3 219.9,52.0 220.15,50.4 220.4,49.0 220.65,49.9 220.9,49.9 221.15,50.8 221.4,51.2 221.65,49.6 221.9,48.3 222.15,49.4 222.4,51.2 222.65,51.7 222.9,50.0 223.15,50.4 223.4,52.0 223.65,50.9 223.9,50.5 224.15,51.1 224.4,51.0 224.65,50.9 224.9,50.9 225.15,50.6 225.4,50.4 225.65,50.2 225.9,49.8 226.15,49.5 226.4,49.1 226.65,48.8 226.9,48.4 227.15,48.3 227.4,49.0 227.65,49.7 227.9,50.1 228.15,50.7 228.4,49.7 228.65,49.3 228.9,48.4 229.15,48.8 229.4,49.0 229.65,49.1 229.9,49.5 230.15,49.8 230.4,50.2 230.65,50.0 230.9,50.1 231.15,49.9 231.4,50.2 231.65,49.9 231.9,49.5 232.15,49.2 232.4,49.4 232.65,49.3 232.9,48.9 233.15,49.1 233.4,48.7 233.65,48.7 233.9,48.7 234.15,49.3 234.4,49.5 234.65,49.8 234.9,49.4 235.15,49.3 235.4,49.4 235.65,49.7 235.9,49.4 236.15,49.1 236.4,48.4 236.65,48.4 236.9,48.7 237.15,49.2 237.4,49.4 237.65,49.8 237.9,48.8 238.15,48.2 238.4,47.7 238.65,48.0 238.9,48.3 239.15,48.5 239.4,48.7 239.65,48.9 239.9,48.8 240.15,48.7 240.4,48.1 240.65,48.2 240.9,47.7 241.15,47.5 241.4,48.1 241.65,48.3 241.9,49.0 242.15,48.6 242.4,48.1 242.65,48.1 242.9,47.9 243.15,48.2 243.4,48.6 243.65,48.8 243.9,49.0 244.15,49.6 244.4,49.7 244.65,49.5 244.9,49.3 245.15,49.0 245.4,49.0 245.65,48.5 245.9,48.4 246.15,48.5 246.4,48.5 246.65,48.5 246.9,48.3 247.15,48.3 247.4,48.6 247.65,48.7 247.9,48.4 248.15,48.5 248.4,48.5 248.65,48.0 248.9,48.0 249.15,47.9 249.4,47.9 249.65,48.1 249.9,47.3 250.15,47.8 250.4,47.5 250.65,47.8 250.9,47.9 251.15,48.2 251.4,47.6 251.65,47.3 251.9,49.5 252.15,49.4 252.4,48.4 252.65,46.9 252.9,49.5 253.15,50.0 253.4,47.6 253.65,48.9 253.9,49.4 254.15,46.6 254.4,48.9 254.65,48.1 254.9,48.1 255.15,48.8 255.4,47.5 255.65,48.5 255.9,48.7 256.15,49.0 256.4,49.2 256.65,49.2 256.9,49.3 257.15,49.6 257.4,49.8 257.65,50.1 257.9,49.7 258.15,49.4 258.4,49.4 258.65,49.4 258.9,49.6 259.15,49.3 259.4,49.0 259.65,49.2 259.9,49.4 260.15,49.4 260.4,49.5 260.65,49.3 260.9,49.2 261.15,49.0 261.4,49.0 261.65,49.2 261.9,49.6 262.15,49.9 262.4,50.0 262.65,50.6 262.9,50.7 263.15,50.6 263.4,50.6 263.65,50.4 263.9,50.2 264.15,50.3 264.4,50.3 264.65,49.7 264.9,49.6 265.15,49.6 265.4,49.8 265.65,49.9 265.9,49.8 266.15,49.8 266.4,49.9 266.65,50.3 266.9,49.9 267.15,50.0 267.4,50.0 267.65,50.0 267.9,49.9 268.15,49.8 268.4,49.9 268.65,49.8 268.9,49.9 269.15,50.1 269.4,50.1 269.65,50.2 269.9,50.2 270.15,50.2 270.4,50.3 270.65,50.3 270.9,50.5 271.15,50.7 271.4,50.9 271.65,50.7 271.9,50.6 272.15,50.8 272.4,51.0 272.65,50.5 272.9,51.4 273.15,51.5 273.4,50.5 273.65,51.1 273.9,52.7 274.15,51.9 274.4,50.7 274.65,50.3 274.9,51.8 275.15,49.9 275.4,49.8 275.65,51.9 275.9,50.3 276.15,51.4 276.4,52.1 276.65,52.0 276.9,50.2 277.15,50.8 277.4,52.7 277.65,51.8 277.9,49.8 278.15,52.4 278.4,51.6 278.65,49.1 278.9,51.9 279.15,50.6 279.4,48.9 279.65,51.0 279.9,49.5 280.15,48.4 280.4,51.7 280.65,50.4 280.9,48.8 281.15,52.0 281.4,49.7 281.65,49.4 281.9,51.7 282.15,49.9 282.4,51.1 282.65,53.2 282.9,51.1 283.15,52.1 283.4,52.9 283.65,50.6 283.9,52.0 284.15,52.1 284.4,51.7 284.65,52.5 284.9,52.3 285.15,51.8 285.4,51.5 285.65,52.1 285.9,52.3 286.15,52.1 286.4,52.0 286.65,51.8 286.9,51.8 287.15,51.9 287.4,52.0 287.65,51.8 287.9,51.5 288.15,51.7 288.4,51.7 288.65,51.7 288.9,52.2 289.15,52.3 289.4,52.1 289.65,51.5 289.9,51.3 290.15,50.9 290.4,50.4 290.65,51.2 290.9,51.4 291.15,51.3 291.4,51.5 291.65,51.7 291.9,52.2 292.15,51.9 292.4,52.1 292.65,52.3 292.9,51.9 293.15,51.5" fill="none" stroke="#0808ff" stroke-width="1.08" stroke-linejoin="round"/><rect x="38.0" y="16.3" width="255.39999999999998" height="86.4" fill="none" stroke="#767676" stroke-width="1.7"/><g font-family="'DejaVu Sans','Liberation Sans',sans-serif" font-size="10.9" fill="#545454" text-anchor="end"><text x="34.7" y="20.4">9500</text><text x="34.7" y="41.8">9000</text><text x="34.7" y="63.3">8500</text><text x="34.7" y="84.8">8000</text><text x="34.7" y="106.2">7500</text></g><g font-family="'DejaVu Serif','Liberation Serif',serif" font-size="10.8" fill="#545454" text-anchor="middle"><text x="38.4" y="115.9">0</text><text x="88.4" y="115.9">200</text><text x="138.4" y="115.9">400</text><text x="188.4" y="115.9">600</text><text x="238.4" y="115.9">800</text><text x="288.4" y="115.9">1000</text></g><rect x="179.4" y="24.3" width="13.4" height="10.4" fill="#fff" stroke="#ccc" stroke-width="1"/><rect x="180.8" y="25.7" width="10.6" height="7.6" fill="#0000ff"/><text x="196.6" y="32.8" font-family="'DejaVu Serif','Liberation Serif',serif" font-size="11.2" fill="#8a8a8a" textLength="90.6" lengthAdjust="spacing">nnaida15 1.8.W</text><path d="M292.8 6.800L302.900 16.900L292.800 27L282.700 16.900Z" fill="#ff0000"/></svg>
<svg class="a" style="left:949.1px;top:543.0px" width="313" height="121" viewBox="0 0 313 121"><path d="M88.4 16.3V102.7M138.4 16.3V102.7M188.4 16.3V102.7M238.4 16.3V102.7M288.4 16.3V102.7M38.0 37.9H293.4M38.0 59.5H293.4M38.0 81.1H293.4" stroke="#e6e6e6" stroke-width=".9" fill="none"/><polyline points="38.4,60.3 38.65,60.5 38.9,60.3 39.15,60.5 39.4,60.7 39.65,60.6 39.9,60.6 40.15,60.5 40.4,60.4 40.65,60.4 40.9,60.3 41.15,60.5 41.4,60.5 41.65,60.4 41.9,60.4 42.15,60.2 42.4,60.3 42.65,60.2 42.9,60.2 43.15,60.2 43.4,60.1 43.65,59.9 43.9,60.0 44.15,60.1 44.4,60.1 44.65,60.0 44.9,59.9 45.15,60.0 45.4,60.1 45.65,60.1 45.9,60.0 46.15,59.9 46.4,60.1 46.65,60.1 46.9,60.3 47.15,60.4 47.4,60.7 47.65,60.8 47.9,60.5 48.15,60.6 48.4,60.5 48.65,60.4 48.9,60.5 49.15,60.7 49.4,60.4 49.65,60.1 49.9,59.6 50.15,59.1 50.4,59.2 50.65,59.6 50.9,59.7 51.15,60.1 51.4,60.2 51.65,60.4 51.9,60.2 52.15,59.9 52.4,59.9 52.65,59.7 52.9,59.8 53.15,59.6 53.4,59.6 53.65,59.9 53.9,60.0 54.15,59.9 54.4,60.1 54.65,60.1 54.9,60.5 55.15,60.2 55.4,59.9 55.65,59.8 55.9,59.5 56.15,59.7 56.4,59.6 56.65,59.7 56.9,60.0 57.15,59.7 57.4,59.4 57.65,59.7 57.9,60.0 58.15,59.8 58.4,60.2 58.65,60.8 58.9,60.8 59.15,61.1 59.4,60.7 59.65,60.4 59.9,60.4 60.15,60.0 60.4,59.9 60.65,60.0 60.9,60.1 61.15,60.3 61.4,59.4 61.65,60.2 61.9,60.9 62.15,58.9 62.4,58.2 62.65,58.5 62.9,59.6 63.15,60.5 63.4,60.3 63.65,57.9 63.9,58.0 64.15,60.3 64.4,61.3 64.65,58.9 64.9,62.3 65.15,61.0 65.4,58.0 65.65,59.3 65.9,62.7 66.15,58.8 66.4,60.4 66.65,62.3 66.9,58.0 67.15,59.6 67.4,60.9 67.65,59.4 67.9,57.9 68.15,60.0 68.4,61.8 68.65,60.7 68.9,58.6 69.15,61.6 69.4,58.3 69.65,59.0 69.9,61.0 70.15,59.6 70.4,59.2 70.65,60.0 70.9,59.8 71.15,59.2 71.4,58.7 71.65,59.3 71.9,59.0 72.15,58.7 72.4,58.9 72.65,59.1 72.9,59.4 73.15,59.4 73.4,59.2 73.65,59.0 73.9,58.9 74.15,58.9 74.4,59.0 74.65,59.4 74.9,59.9 75.15,59.9 75.4,60.0 75.65,60.2 75.9,60.3 76.15,60.0 76.4,59.5 76.65,59.1 76.9,59.1 77.15,58.9 77.4,58.7 77.65,59.0 77.9,58.7 78.15,58.5 78.4,58.6 78.65,58.7 78.9,58.8 79.15,59.3 79.4,59.6 79.65,59.9 79.9,59.8 80.15,59.7 80.4,59.9 80.65,60.1 80.9,60.0 81.15,59.7 81.4,59.7 81.65,59.5 81.9,59.4 82.15,59.3 82.4,58.8 82.65,58.7 82.9,58.7 83.15,58.6 83.4,58.8 83.65,59.1 83.9,59.7 84.15,59.8 84.4,59.8 84.65,60.0 84.9,59.7 85.15,59.5 85.4,59.1 85.65,59.0 85.9,58.9 86.15,58.2 86.4,59.2 86.65,58.2 86.9,57.6 87.15,59.6 87.4,59.2 87.65,58.8 87.9,60.9 88.15,58.8 88.4,58.5 88.65,59.4 88.9,62.0 89.15,60.0 89.4,56.9 89.65,56.8 89.9,60.5 90.15,60.3 90.4,58.9 90.65,58.3 90.9,59.2 91.15,59.3 91.4,59.0 91.65,58.9 91.9,58.9 92.15,59.0 92.4,58.7 92.65,58.9 92.9,58.4 93.15,58.4 93.4,58.3 93.65,58.5 93.9,58.4 94.15,58.3 94.4,58.5 94.65,58.7 94.9,58.4 95.15,58.0 95.4,57.9 95.65,58.2 95.9,58.3 96.15,58.3 96.4,58.5 96.65,58.5 96.9,58.6 97.15,58.7 97.4,58.7 97.65,58.4 97.9,58.2 98.15,58.0 98.4,57.5 98.65,57.6 98.9,57.6 99.15,57.8 99.4,58.0 99.65,58.2 99.9,58.6 100.15,58.8 100.4,58.5 100.65,58.7 100.9,58.5 101.15,58.4 101.4,58.2 101.65,58.1 101.9,58.2 102.15,58.3 102.4,58.6 102.65,58.5 102.9,58.6 103.15,58.7 103.4,58.2 103.65,57.8 103.9,58.5 104.15,58.2 104.4,57.7 104.65,54.6 104.9,54.8 105.15,59.9 105.4,60.7 105.65,58.7 105.9,56.5 106.15,56.2 106.4,62.2 106.65,53.7 106.9,62.9 107.15,53.9 107.4,57.4 107.65,62.2 107.9,55.5 108.15,58.3 108.4,60.9 108.65,56.6 108.9,59.7 109.15,58.3 109.4,58.3 109.65,58.4 109.9,58.4 110.15,58.4 110.4,58.4 110.65,58.4 110.9,58.3 111.15,58.2 111.4,58.4 111.65,58.3 111.9,58.3 112.15,58.3 112.4,58.4 112.65,58.5 112.9,58.4 113.15,58.4 113.4,58.4 113.65,58.4 113.9,58.3 114.15,58.4 114.4,58.6 114.65,58.6 114.9,58.9 115.15,59.1 115.4,58.9 115.65,59.1 115.9,58.9 116.15,58.9 116.4,58.9 116.65,58.5 116.9,58.6 117.15,58.2 117.4,58.5 117.65,58.4 117.9,58.5 118.15,58.9 118.4,58.8 118.65,58.9 118.9,58.5 119.15,58.6 119.4,58.4 119.65,58.7 119.9,58.4 120.15,58.3 120.4,58.1 120.65,58.2 120.9,58.1 121.15,58.5 121.4,55.8 121.65,57.2 121.9,60.6 122.15,57.1 122.4,56.5 122.65,61.1 122.9,60.5 123.15,56.5 123.4,53.8 123.65,58.6 123.9,63.4 124.15,58.8 124.4,54.0 124.65,58.4 124.9,60.9 125.15,60.5 125.4,59.2 125.65,56.9 125.9,58.2 126.15,60.6 126.4,57.5 126.65,58.0 126.9,59.0 127.15,58.8 127.4,58.6 127.65,58.6 127.9,58.6 128.15,58.6 128.4,58.8 128.65,58.5 128.9,58.0 129.15,57.9 129.4,57.8 129.65,57.7 129.9,57.2 130.15,56.9 130.4,57.6 130.65,57.8 130.9,58.5 131.15,58.8 131.4,59.0 131.65,58.8 131.9,58.9 132.15,58.8 132.4,58.8 132.65,58.9 132.9,58.8 133.15,58.8 133.4,59.0 133.65,59.5 133.9,59.5 134.15,59.7 134.4,59.6 134.65,59.1 134.9,59.3 135.15,59.1 135.4,59.0 135.65,59.0 135.9,59.1 136.15,59.0 136.4,58.7 136.65,58.5 136.9,58.1 137.15,57.8 137.4,57.6 137.65,57.6 137.9,58.0 138.15,58.4 138.4,58.4 138.65,58.7 138.9,59.0 139.15,58.7 139.4,58.8 139.65,58.6 139.9,58.5 140.15,58.0 140.4,58.1 140.65,57.7 140.9,57.7 141.15,58.0 141.4,58.0 141.65,58.4 141.9,58.7 142.15,59.2 142.4,59.5 142.65,59.4 142.9,59.2 143.15,59.5 143.4,59.5 143.65,59.2 143.9,59.3 144.15,59.0 144.4,58.8 144.65,58.9 144.9,58.7 145.15,58.5 145.4,58.5 145.65,58.5 145.9,58.4 146.15,58.6 146.4,58.7 146.65,58.8 146.9,59.3 147.15,59.4 147.4,59.8 147.65,60.6 147.9,59.9 148.15,59.5 148.4,58.8 148.65,58.6 148.9,58.1 149.15,57.9 149.4,57.6 149.65,58.0 149.9,58.4 150.15,59.0 150.4,59.2 150.65,59.1 150.9,59.1 151.15,59.0 151.4,59.0 151.65,58.8 151.9,58.6 152.15,58.2 152.4,58.1 152.65,58.1 152.9,57.8 153.15,57.9 153.4,57.5 153.65,58.1 153.9,58.6 154.15,59.1 154.4,58.8 154.65,58.9 154.9,59.0 155.15,58.6 155.4,58.9 155.65,58.7 155.9,58.8 156.15,58.8 156.4,59.2 156.65,59.2 156.9,59.3 157.15,59.2 157.4,59.2 157.65,59.0 157.9,58.9 158.15,58.9 158.4,58.7 158.65,58.5 158.9,58.6 159.15,58.4 159.4,58.4 159.65,58.1 159.9,58.0 160.15,58.1 160.4,57.9 160.65,58.1 160.9,58.4 161.15,58.5 161.4,58.6 161.65,58.8 161.9,59.2 162.15,59.1 162.4,59.2 162.65,59.3 162.9,59.0 163.15,59.2 163.4,59.1 163.65,58.9 163.9,59.0 164.15,59.0 164.4,58.8 164.65,58.8 164.9,58.8 165.15,58.9 165.4,59.0 165.65,59.3 165.9,59.2 166.15,59.2 166.4,59.0 166.65,59.2 166.9,58.9 167.15,58.7 167.4,59.1 167.65,59.0 167.9,59.1 168.15,59.4 168.4,59.3 168.65,59.3 168.9,59.3 169.15,59.0 169.4,59.1 169.65,59.0 169.9,58.9 170.15,58.8 170.4,59.1 170.65,59.0 170.9,59.2 171.15,59.7 171.4,59.8 171.65,59.7 171.9,59.7 172.15,59.5 172.4,59.5 172.65,59.6 172.9,59.6 173.15,59.5 173.4,59.1 173.65,58.8 173.9,58.9 174.15,59.1 174.4,59.3 174.65,59.1 174.9,59.4 175.15,59.3 175.4,59.2 175.65,58.9 175.9,59.0 176.15,58.5 176.4,58.5 176.65,58.5 176.9,58.6 177.15,58.7 177.4,58.7 177.65,58.9 177.9,58.9 178.15,58.6 178.4,58.9 178.65,59.5 178.9,57.2 179.15,58.6 179.4,60.0 179.65,59.9 179.9,55.7 180.15,57.4 180.4,61.9 180.65,61.4 180.9,55.0 181.15,57.5 181.4,61.3 181.65,63.3 181.9,57.7 182.15,55.8 182.4,63.5 182.65,63.2 182.9,55.3 183.15,59.1 183.4,65.1 183.65,59.1 183.9,54.7 184.15,57.6 184.4,62.9 184.65,61.2 184.9,56.9 185.15,57.5 185.4,59.8 185.65,60.3 185.9,59.8 186.15,59.9 186.4,59.9 186.65,59.8 186.9,59.5 187.15,59.3 187.4,59.1 187.65,59.0 187.9,58.7 188.15,58.7 188.4,58.7 188.65,58.5 188.9,58.4 189.15,58.4 189.4,58.6 189.65,58.8 189.9,58.7 190.15,58.6 190.4,58.7 190.65,59.2 190.9,59.1 191.15,59.2 191.4,59.0 191.65,58.9 191.9,58.8 192.15,58.9 192.4,58.6 192.65,58.5 192.9,58.5 193.15,58.3 193.4,58.8 193.65,59.5 193.9,59.8 194.15,60.0 194.4,59.8 194.65,60.1 194.9,60.1 195.15,59.7 195.4,59.8 195.65,59.6 195.9,59.6 196.15,59.7 196.4,58.3 196.65,58.9 196.9,61.8 197.15,61.1 197.4,58.5 197.65,56.6 197.9,60.2 198.15,61.0 198.4,61.0 198.65,58.4 198.9,56.9 199.15,60.3 199.4,58.9 199.65,59.1 199.9,55.4 200.15,57.8 200.4,62.6 200.65,58.9 200.9,58.1 201.15,58.6 201.4,62.5 201.65,57.9 201.9,59.6 202.15,63.6 202.4,56.2 202.65,60.7 202.9,59.4 203.15,58.0 203.4,61.0 203.65,62.9 203.9,60.7 204.15,59.8 204.4,59.8 204.65,60.6 204.9,59.7 205.15,59.7 205.4,59.3 205.65,59.7 205.9,59.7 206.15,59.9 206.4,60.0 206.65,60.2 206.9,60.1 207.15,60.6 207.4,60.2 207.65,59.8 207.9,59.6 208.15,59.9 208.4,60.2 208.65,60.2 208.9,60.2 209.15,60.2 209.4,60.2 209.65,59.9 209.9,59.9 210.15,59.9 210.4,59.8 210.65,59.9 210.9,59.6 211.15,59.5 211.4,59.4 211.65,59.8 211.9,60.3 212.15,61.0 212.4,61.5 212.65,61.3 212.9,60.9 213.15,60.7 213.4,60.7 213.65,60.2 213.9,59.8 214.15,59.6 214.4,59.7 214.65,59.6 214.9,59.7 215.15,59.9 215.4,59.9 215.65,59.9 215.9,59.7 216.15,60.0 216.4,60.1 216.65,60.0 216.9,59.7 217.15,59.8 217.4,59.5 217.65,59.5 217.9,59.2 218.15,59.2 218.4,59.0 218.65,58.7 218.9,59.3 219.15,60.0 219.4,60.2 219.65,59.7 219.9,60.0 220.15,59.8 220.4,59.9 220.65,59.8 220.9,59.4 221.15,59.5 221.4,59.6 221.65,59.6 221.9,59.7 222.15,59.7 222.4,59.9 222.65,60.1 222.9,60.1 223.15,59.9 223.4,59.9 223.65,59.6 223.9,59.4 224.15,59.6 224.4,59.6 224.65,59.3 224.9,59.1 225.15,59.1 225.4,59.1 225.65,59.0 225.9,58.9 226.15,58.5 226.4,58.8 226.65,59.1 226.9,59.4 227.15,59.5 227.4,59.2 227.65,59.2 227.9,59.3 228.15,59.3 228.4,59.3 228.65,59.5 228.9,59.6 229.15,59.5 229.4,59.8 229.65,59.7 229.9,59.3 230.15,59.4 230.4,59.4 230.65,59.3 230.9,59.3 231.15,59.5 231.4,59.4 231.65,59.2 231.9,59.0 232.15,59.0 232.4,58.8 232.65,58.9 232.9,59.0 233.15,59.0 233.4,59.3 233.65,59.6 233.9,59.4 234.15,59.5 234.4,59.8 234.65,59.6 234.9,59.9 235.15,59.8 235.4,59.6 235.65,59.7 235.9,59.1 236.15,59.2 236.4,58.9 236.65,58.9 236.9,59.1 237.15,59.2 237.4,59.2 237.65,59.3 237.9,59.6 238.15,59.8 238.4,59.5 238.65,59.5 238.9,59.2 239.15,59.3 239.4,58.9 239.65,58.7 239.9,58.7 240.15,58.5 240.4,58.2 240.65,58.6 240.9,57.0 241.15,57.3 241.4,57.4 241.65,58.3 241.9,57.0 242.15,56.4 242.4,55.4 242.65,59.6 242.9,61.5 243.15,55.8 243.4,56.3 243.65,64.1 243.9,59.4 244.15,55.8 244.4,61.5 244.65,58.3 244.9,54.3 245.15,56.4 245.4,59.9 245.65,59.6 245.9,57.7 246.15,55.8 246.4,57.3 246.65,58.2 246.9,58.7 247.15,58.7 247.4,58.8 247.65,58.7 247.9,58.4 248.15,58.4 248.4,58.1 248.65,57.8 248.9,57.4 249.15,57.1 249.4,57.5 249.65,57.9 249.9,58.3 250.15,58.5 250.4,58.4 250.65,58.6 250.9,58.5 251.15,58.6 251.4,58.6 251.65,58.7 251.9,58.5 252.15,58.7 252.4,59.0 252.65,59.3 252.9,58.9 253.15,59.0 253.4,58.6 253.65,57.9 253.9,57.7 254.15,57.9 254.4,58.2 254.65,58.3 254.9,58.7 255.15,58.9 255.4,59.1 255.65,59.2 255.9,59.0 256.15,58.8 256.4,58.4 256.65,57.9 256.9,58.0 257.15,57.8 257.4,57.8 257.65,57.6 257.9,58.0 258.15,57.9 258.4,57.8 258.65,57.8 258.9,57.9 259.15,57.8 259.4,57.9 259.65,57.6 259.9,57.4 260.15,57.8 260.4,57.9 260.65,57.8 260.9,58.0 261.15,58.2 261.4,58.1 261.65,58.3 261.9,57.8 262.15,57.8 262.4,57.6 262.65,57.6 262.9,57.4 263.15,57.0 263.4,57.0 263.65,57.0 263.9,56.9 264.15,57.0 264.4,57.0 264.65,57.3 264.9,57.2 265.15,57.2 265.4,57.6 265.65,57.6 265.9,57.9 266.15,57.9 266.4,58.2 266.65,57.7 266.9,57.5 267.15,57.3 267.4,56.8 267.65,56.8 267.9,56.7 268.15,56.4 268.4,56.6 268.65,56.5 268.9,57.0 269.15,57.4 269.4,57.9 269.65,58.4 269.9,58.4 270.15,58.0 270.4,57.5 270.65,57.3 270.9,57.1 271.15,57.4 271.4,57.5 271.65,57.8 271.9,57.7 272.15,58.1 272.4,58.6 272.65,58.5 272.9,56.3 273.15,58.6 273.4,57.5 273.65,56.8 273.9,58.8 274.15,55.4 274.4,59.3 274.65,57.0 274.9,56.5 275.15,59.7 275.4,53.6 275.65,57.4 275.9,56.4 276.15,56.3 276.4,58.8 276.65,56.4 276.9,56.5 277.15,61.3 277.4,58.5 277.65,57.2 277.9,57.7 278.15,58.7 278.4,59.2 278.65,57.7 278.9,56.6 279.15,56.8 279.4,56.9 279.65,57.3 279.9,57.4 280.15,57.3 280.4,57.4 280.65,57.5 280.9,57.3 281.15,57.1 281.4,57.1 281.65,57.3 281.9,57.5 282.15,58.1 282.4,58.0 282.65,58.5 282.9,58.8 283.15,58.9 283.4,58.6 283.65,58.4 283.9,57.9 284.15,57.8 284.4,57.9 284.65,58.0 284.9,58.1 285.15,58.4 285.4,58.7 285.65,58.9 285.9,58.9 286.15,59.0 286.4,59.1 286.65,58.8 286.9,58.9 287.15,59.1 287.4,59.3 287.65,59.1 287.9,59.4 288.15,59.2 288.4,59.7 288.65,59.7 288.9,59.4 289.15,58.9 289.4,58.5 289.65,58.2 289.9,58.4 290.15,58.7 290.4,58.9 290.65,59.1 290.9,58.9 291.15,58.9 291.4,58.7 291.65,58.8 291.9,58.5 292.15,58.5 292.4,58.5 292.65,58.6 292.9,58.9 293.15,59.0" fill="none" stroke="#0808ff" stroke-width="1.08" stroke-linejoin="round"/><rect x="38.0" y="16.3" width="255.39999999999998" height="86.4" fill="none" stroke="#767676" stroke-width="1.7"/><g font-family="'DejaVu Sans','Liberation Sans',sans-serif" font-size="10.9" fill="#545454" text-anchor="end"><text x="34.7" y="20.4">9500</text><text x="34.7" y="41.8">9000</text><text x="34.7" y="63.3">8500</text><text x="34.7" y="84.8">8000</text><text x="34.7" y="106.2">7500</text></g><g font-family="'DejaVu Serif','Liberation Serif',serif" font-size="10.8" fill="#545454" text-anchor="middle"><text x="38.4" y="115.9">0</text><text x="88.4" y="115.9">200</text><text x="138.4" y="115.9">400</text><text x="188.4" y="115.9">600</text><text x="238.4" y="115.9">800</text><text x="288.4" y="115.9">1000</text></g><rect x="179.4" y="24.3" width="13.4" height="10.4" fill="#fff" stroke="#ccc" stroke-width="1"/><rect x="180.8" y="25.7" width="10.6" height="7.6" fill="#0000ff"/><text x="196.6" y="32.8" font-family="'DejaVu Serif','Liberation Serif',serif" font-size="11.2" fill="#8a8a8a" textLength="90.6" lengthAdjust="spacing">nnaida16 1.8.W</text><path d="M292.8 6.800L302.900 16.900L292.800 27L282.700 16.900Z" fill="#ff0000"/></svg>
<svg class="a" style="left:9.0px;top:665.0px" width="313" height="121" viewBox="0 0 313 121"><path d="M88.4 16.3V102.7M138.4 16.3V102.7M188.4 16.3V102.7M238.4 16.3V102.7M288.4 16.3V102.7M38.0 37.9H293.4M38.0 59.5H293.4M38.0 81.1H293.4" stroke="#e6e6e6" stroke-width=".9" fill="none"/><polyline points="38.4,53.8 38.65,53.7 38.9,53.7 39.15,53.7 39.4,53.8 39.65,53.5 39.9,53.3 40.15,53.8 40.4,54.4 40.65,55.0 40.9,55.1 41.15,55.0 41.4,55.2 41.65,55.0 41.9,54.7 42.15,55.0 42.4,55.0 42.65,55.4 42.9,55.6 43.15,55.6 43.4,55.6 43.65,55.6 43.9,55.8 44.15,55.7 44.4,55.7 44.65,55.5 44.9,56.0 45.15,56.2 45.4,56.5 45.65,56.5 45.9,56.9 46.15,56.9 46.4,57.3 46.65,57.2 46.9,57.6 47.15,57.2 47.4,57.7 47.65,57.6 47.9,57.6 48.15,57.6 48.4,57.5 48.65,57.7 48.9,57.7 49.15,57.9 49.4,58.2 49.65,58.2 49.9,58.3 50.15,57.6 50.4,57.5 50.65,57.0 50.9,57.0 51.15,56.9 51.4,57.0 51.65,57.2 51.9,57.0 52.15,56.7 52.4,56.1 52.65,55.9 52.9,55.5 53.15,55.4 53.4,55.5 53.65,55.6 53.9,55.5 54.15,55.7 54.4,55.5 54.65,55.5 54.9,55.0 55.15,54.6 55.4,54.6 55.65,54.4 55.9,54.0 56.15,54.0 56.4,54.1 56.65,53.9 56.9,53.6 57.15,53.5 57.4,53.2 57.65,53.0 57.9,53.0 58.15,52.9 58.4,52.7 58.65,52.7 58.9,52.7 59.15,52.5 59.4,52.4 59.65,52.5 59.9,52.3 60.15,51.8 60.4,51.6 60.65,51.5 60.9,51.0 61.15,51.3 61.4,51.4 61.65,51.4 61.9,51.1 62.15,51.1 62.4,51.0 62.65,51.2 62.9,51.0 63.15,50.9 63.4,50.6 63.65,50.9 63.9,49.8 64.15,48.5 64.4,48.4 64.65,49.8 64.9,49.7 65.15,47.8 65.4,47.2 65.65,48.6 65.9,48.7 66.15,46.2 66.4,44.4 66.65,48.9 66.9,47.6 67.15,44.0 67.4,48.3 67.65,46.9 67.9,43.2 68.15,46.5 68.4,50.4 68.65,46.4 68.9,44.4 69.15,47.7 69.4,52.9 69.65,50.8 69.9,46.5 70.15,48.0 70.4,52.2 70.65,54.1 70.9,47.8 71.15,49.8 71.4,53.4 71.65,54.2 71.9,51.6 72.15,51.7 72.4,52.8 72.65,55.5 72.9,52.9 73.15,52.0 73.4,52.4 73.65,55.0 73.9,54.2 74.15,52.3 74.4,55.4 74.65,55.4 74.9,54.5 75.15,54.6 75.4,54.6 75.65,54.8 75.9,54.7 76.15,54.7 76.4,54.5 76.65,54.9 76.9,55.3 77.15,55.5 77.4,56.1 77.65,56.5 77.9,56.7 78.15,57.1 78.4,57.2 78.65,57.0 78.9,57.4 79.15,57.9 79.4,58.3 79.65,58.8 79.9,59.3 80.15,59.5 80.4,59.6 80.65,59.9 80.9,59.6 81.15,59.7 81.4,60.1 81.65,60.4 81.9,60.5 82.15,60.8 82.4,60.8 82.65,61.2 82.9,61.7 83.15,62.1 83.4,62.5 83.65,62.8 83.9,62.9 84.15,62.9 84.4,63.1 84.65,62.8 84.9,62.8 85.15,62.8 85.4,62.7 85.65,62.9 85.9,63.0 86.15,63.1 86.4,63.2 86.65,63.0 86.9,63.0 87.15,63.2 87.4,63.2 87.65,63.5 87.9,63.8 88.15,63.4 88.4,63.2 88.65,63.0 88.9,62.6 89.15,62.7 89.4,62.4 89.65,62.3 89.9,62.0 90.15,61.9 90.4,61.8 90.65,61.4 90.9,61.1 91.15,61.3 91.4,60.9 91.65,61.1 91.9,60.8 92.15,60.5 92.4,60.4 92.65,60.1 92.9,60.2 93.15,60.5 93.4,60.7 93.65,61.0 93.9,61.2 94.15,61.1 94.4,60.8 94.65,60.7 94.9,60.2 95.15,60.6 95.4,60.5 95.65,60.6 95.9,60.6 96.15,60.2 96.4,59.9 96.65,59.9 96.9,60.2 97.15,60.5 97.4,61.1 97.65,61.2 97.9,60.7 98.15,60.2 98.4,59.7 98.65,59.4 98.9,58.5 99.15,57.8 99.4,58.3 99.65,58.6 99.9,58.8 100.15,59.1 100.4,58.9 100.65,58.4 100.9,57.9 101.15,57.7 101.4,57.2 101.65,56.5 101.9,56.1 102.15,55.8 102.4,55.7 102.65,55.5 102.9,55.4 103.15,55.0 103.4,55.0 103.65,54.8 103.9,54.3 104.15,54.4 104.4,53.9 104.65,53.7 104.9,54.2 105.15,54.5 105.4,54.6 105.65,54.2 105.9,53.9 106.15,53.4 106.4,52.8 106.65,52.4 106.9,51.8 107.15,51.7 107.4,51.0 107.65,51.1 107.9,51.7 108.15,51.4 108.4,49.9 108.65,50.0 108.9,51.2 109.15,50.6 109.4,50.5 109.65,50.6 109.9,52.5 110.15,51.7 110.4,50.0 110.65,51.6 110.9,50.8 111.15,49.0 111.4,51.1 111.65,50.3 111.9,49.5 112.15,50.3 112.4,49.2 112.65,49.2 112.9,49.9 113.15,48.9 113.4,50.2 113.65,51.0 113.9,51.2 114.15,50.5 114.4,50.3 114.65,51.0 114.9,51.5 115.15,51.6 115.4,51.5 115.65,51.1 115.9,51.0 116.15,50.9 116.4,51.0 116.65,50.8 116.9,51.1 117.15,51.5 117.4,52.0 117.65,52.1 117.9,53.0 118.15,52.7 118.4,52.8 118.65,52.8 118.9,52.7 119.15,52.5 119.4,52.5 119.65,52.8 119.9,52.6 120.15,52.9 120.4,52.6 120.65,52.7 120.9,52.7 121.15,52.4 121.4,52.7 121.65,52.7 121.9,52.3 122.15,52.1 122.4,51.8 122.65,51.7 122.9,51.5 123.15,51.9 123.4,51.9 123.65,52.0 123.9,52.3 124.15,52.5 124.4,52.8 124.65,53.2 124.9,53.2 125.15,53.5 125.4,53.6 125.65,53.7 125.9,53.6 126.15,54.2 126.4,54.4 126.65,54.2 126.9,54.6 127.15,54.9 127.4,55.0 127.65,55.3 127.9,55.0 128.15,57.0 128.4,56.7 128.65,54.4 128.9,57.6 129.15,55.5 129.4,57.2 129.65,58.0 129.9,55.7 130.15,59.5 130.4,54.2 130.65,59.7 130.9,56.5 131.15,53.8 131.4,60.5 131.65,58.0 131.9,53.8 132.15,60.1 132.4,59.8 132.65,55.0 132.9,58.1 133.15,58.6 133.4,55.1 133.65,59.7 133.9,56.3 134.15,56.0 134.4,57.7 134.65,55.8 134.9,56.5 135.15,57.8 135.4,58.4 135.65,55.8 135.9,57.2 136.15,57.4 136.4,57.0 136.65,56.9 136.9,56.8 137.15,56.6 137.4,56.7 137.65,56.7 137.9,56.7 138.15,56.7 138.4,56.9 138.65,57.0 138.9,57.1 139.15,57.3 139.4,57.3 139.65,57.6 139.9,58.0 140.15,57.9 140.4,58.2 140.65,57.7 140.9,57.4 141.15,57.2 141.4,56.4 141.65,56.2 141.9,56.5 142.15,56.4 142.4,56.5 142.65,56.7 142.9,56.8 143.15,56.9 143.4,57.0 143.65,57.0 143.9,57.0 144.15,57.1 144.4,57.2 144.65,57.1 144.9,57.0 145.15,56.9 145.4,56.8 145.65,56.5 145.9,56.7 146.15,56.8 146.4,56.8 146.65,56.8 146.9,57.0 147.15,57.0 147.4,57.4 147.65,57.2 147.9,57.0 148.15,56.8 148.4,56.3 148.65,56.5 148.9,56.5 149.15,56.5 149.4,56.4 149.65,56.2 149.9,56.2 150.15,56.2 150.4,56.0 150.65,56.2 150.9,56.1 151.15,56.2 151.4,56.3 151.65,55.9 151.9,56.2 152.15,56.5 152.4,56.0 152.65,56.3 152.9,56.3 153.15,56.3 153.4,56.2 153.65,56.2 153.9,56.0 154.15,55.9 154.4,56.0 154.65,55.9 154.9,55.7 155.15,55.7 155.4,56.0 155.65,55.9 155.9,55.8 156.15,55.7 156.4,55.9 156.65,55.5 156.9,55.6 157.15,55.7 157.4,55.6 157.65,55.4 157.9,55.3 158.15,55.1 158.4,55.2 158.65,54.9 158.9,55.2 159.15,55.3 159.4,55.3 159.65,55.7 159.9,55.9 160.15,55.7 160.4,55.7 160.65,55.9 160.9,56.0 161.15,56.1 161.4,56.5 161.65,56.7 161.9,56.6 162.15,56.5 162.4,56.9 162.65,57.0 162.9,56.9 163.15,56.9 163.4,57.1 163.65,57.5 163.9,57.6 164.15,57.4 164.4,57.4 164.65,57.3 164.9,57.4 165.15,57.2 165.4,57.3 165.65,57.1 165.9,57.3 166.15,57.2 166.4,57.2 166.65,57.2 166.9,57.4 167.15,57.2 167.4,57.0 167.65,56.8 167.9,56.7 168.15,56.5 168.4,56.8 168.65,56.5 168.9,56.2 169.15,56.2 169.4,56.1 169.65,56.1 169.9,55.6 170.15,55.6 170.4,55.5 170.65,55.2 170.9,55.3 171.15,55.3 171.4,55.3 171.65,55.6 171.9,55.5 172.15,55.1 172.4,54.4 172.65,54.1 172.9,53.4 173.15,53.1 173.4,52.4 173.65,52.7 173.9,53.1 174.15,53.0 174.4,53.0 174.65,53.2 174.9,53.1 175.15,53.2 175.4,53.1 175.65,53.1 175.9,53.1 176.15,52.9 176.4,52.6 176.65,52.6 176.9,52.7 177.15,52.5 177.4,52.4 177.65,52.3 177.9,52.1 178.15,52.1 178.4,51.6 178.65,51.5 178.9,51.4 179.15,51.5 179.4,51.6 179.65,51.7 179.9,51.8 180.15,51.4 180.4,51.1 180.65,50.7 180.9,50.4 181.15,50.0 181.4,49.7 181.65,49.4 181.9,49.2 182.15,49.2 182.4,48.9 182.65,48.6 182.9,48.4 183.15,48.1 183.4,47.7 183.65,47.2 183.9,46.6 184.15,46.7 184.4,46.2 184.65,45.9 184.9,45.3 185.15,46.7 185.4,44.8 185.65,45.6 185.9,46.7 186.15,44.5 186.4,45.0 186.65,47.0 186.9,44.7 187.15,44.2 187.4,46.0 187.65,47.3 187.9,47.0 188.15,44.5 188.4,46.0 188.65,48.7 188.9,48.6 189.15,45.4 189.4,49.7 189.65,47.7 189.9,45.0 190.15,48.8 190.4,49.2 190.65,49.0 190.9,48.9 191.15,48.6 191.4,49.6 191.65,51.2 191.9,48.6 192.15,48.3 192.4,51.1 192.65,53.2 192.9,51.4 193.15,49.5 193.4,52.1 193.65,51.9 193.9,50.6 194.15,53.2 194.4,53.8 194.65,52.4 194.9,51.8 195.15,54.1 195.4,53.3 195.65,51.7 195.9,51.2 196.15,52.8 196.4,53.5 196.65,51.2 196.9,51.9 197.15,53.4 197.4,53.1 197.65,52.9 197.9,53.1 198.15,53.5 198.4,53.7 198.65,54.1 198.9,54.5 199.15,54.8 199.4,55.0 199.65,55.2 199.9,55.6 200.15,55.9 200.4,56.1 200.65,56.3 200.9,56.3 201.15,56.5 201.4,56.5 201.65,56.7 201.9,57.1 202.15,57.4 202.4,57.9 202.65,58.0 202.9,58.1 203.15,58.2 203.4,58.6 203.65,58.8 203.9,59.5 204.15,59.7 204.4,60.4 204.65,61.1 204.9,61.1 205.15,62.3 205.4,61.4 205.65,61.1 205.9,62.6 206.15,62.8 206.4,61.5 206.65,60.5 206.9,62.8 207.15,64.8 207.4,62.7 207.65,60.7 207.9,62.6 208.15,64.2 208.4,63.8 208.65,62.6 208.9,62.6 209.15,62.0 209.4,64.1 209.65,63.7 209.9,62.0 210.15,61.8 210.4,62.8 210.65,63.5 210.9,61.4 211.15,63.5 211.4,61.8 211.65,62.0 211.9,62.1 212.15,61.8 212.4,61.4 212.65,60.8 212.9,60.6 213.15,61.0 213.4,60.9 213.65,61.0 213.9,61.1 214.15,61.2 214.4,60.7 214.65,60.4 214.9,60.2 215.15,60.0 215.4,59.3 215.65,59.1 215.9,58.8 216.15,58.8 216.4,58.1 216.65,57.9 216.9,57.6 217.15,57.3 217.4,56.8 217.65,56.5 217.9,56.0 218.15,56.3 218.4,57.1 218.65,57.4 218.9,58.0 219.15,58.3 219.4,58.5 219.65,57.9 219.9,57.2 220.15,56.4 220.4,55.5 220.65,55.9 220.9,56.4 221.15,56.2 221.4,56.1 221.65,56.0 221.9,56.2 222.15,56.3 222.4,55.8 222.65,55.4 222.9,55.3 223.15,55.1 223.4,55.0 223.65,54.7 223.9,54.4 224.15,54.4 224.4,54.0 224.65,54.5 224.9,54.9 225.15,54.9 225.4,55.2 225.65,55.1 225.9,54.5 226.15,54.3 226.4,54.2 226.65,54.3 226.9,54.5 227.15,54.5 227.4,54.3 227.65,54.5 227.9,53.8 228.15,53.6 228.4,52.9 228.65,52.7 228.9,52.3 229.15,52.5 229.4,52.4 229.65,51.9 229.9,51.8 230.15,51.9 230.4,51.6 230.65,51.8 230.9,51.6 231.15,51.4 231.4,51.4 231.65,50.9 231.9,50.9 232.15,50.9 232.4,50.8 232.65,51.2 232.9,50.9 233.15,50.4 233.4,50.0 233.65,49.4 233.9,49.3 234.15,49.4 234.4,49.8 234.65,49.8 234.9,50.3 235.15,50.4 235.4,49.8 235.65,49.8 235.9,49.6 236.15,49.3 236.4,49.2 236.65,49.1 236.9,49.2 237.15,49.3 237.4,49.6 237.65,49.3 237.9,49.6 238.15,49.7 238.4,49.6 238.65,49.6 238.9,49.5 239.15,49.9 239.4,49.8 239.65,49.9 239.9,49.7 240.15,49.9 240.4,49.7 240.65,49.6 240.9,49.8 241.15,50.1 241.4,50.0 241.65,50.0 241.9,50.1 242.15,50.0 242.4,50.1 242.65,49.7 242.9,49.4 243.15,49.3 243.4,49.2 243.65,49.4 243.9,50.2 244.15,50.0 244.4,48.2 244.65,50.4 244.9,51.5 245.15,49.8 245.4,49.5 245.65,52.2 245.9,52.8 246.15,51.9 246.4,51.4 246.65,51.9 246.9,54.8 247.15,53.5 247.4,52.8 247.65,51.3 247.9,55.0 248.15,57.2 248.4,55.7 248.65,54.1 248.9,56.9 249.15,59.3 249.4,58.8 249.65,56.4 249.9,58.5 250.15,58.6 250.4,59.0 250.65,55.5 250.9,56.8 251.15,58.5 251.4,57.5 251.65,57.3 251.9,59.9 252.15,59.5 252.4,55.5 252.65,56.5 252.9,59.3 253.15,58.1 253.4,56.6 253.65,57.9 253.9,57.4 254.15,57.8 254.4,56.8 254.65,57.6 254.9,57.4 255.15,57.2 255.4,57.8 255.65,58.0 255.9,57.5 256.15,57.3 256.4,57.0 256.65,56.9 256.9,56.9 257.15,56.9 257.4,56.9 257.65,57.0 257.9,57.1 258.15,57.0 258.4,56.9 258.65,57.0 258.9,57.0 259.15,57.0 259.4,56.9 259.65,56.7 259.9,56.3 260.15,56.4 260.4,56.2 260.65,56.5 260.9,56.4 261.15,56.6 261.4,56.7 261.65,56.5 261.9,56.5 262.15,56.3 262.4,56.3 262.65,56.1 262.9,56.1 263.15,56.2 263.4,56.5 263.65,56.6 263.9,56.7 264.15,56.6 264.4,56.7 264.65,56.7 264.9,56.4 265.15,56.7 265.4,56.6 265.65,56.4 265.9,56.0 266.15,55.8 266.4,56.2 266.65,56.3 266.9,56.2 267.15,56.3 267.4,56.3 267.65,56.5 267.9,56.3 268.15,56.2 268.4,56.4 268.65,56.3 268.9,56.5 269.15,56.6 269.4,56.7 269.65,56.6 269.9,56.8 270.15,56.4 270.4,56.0 270.65,56.2 270.9,56.4 271.15,56.4 271.4,56.6 271.65,56.7 271.9,56.6 272.15,56.2 272.4,56.2 272.65,56.5 272.9,56.3 273.15,56.5 273.4,56.3 273.65,56.3 273.9,55.9 274.15,55.5 274.4,55.4 274.65,55.8 274.9,56.0 275.15,56.4 275.4,56.8 275.65,57.2 275.9,57.2 276.15,57.1 276.4,57.1 276.65,56.8 276.9,56.5 277.15,56.1 277.4,56.0 277.65,55.7 277.9,55.9 278.15,55.7 278.4,55.6 278.65,55.7 278.9,56.0 279.15,55.7 279.4,55.9 279.65,56.4 279.9,56.2 280.15,55.8 280.4,55.9 280.65,56.1 280.9,56.0 281.15,56.1 281.4,55.6 281.65,56.1 281.9,55.5 282.15,55.6 282.4,55.4 282.65,55.0 282.9,55.7 283.15,55.6 283.4,55.3 283.65,55.4 283.9,55.3 284.15,55.7 284.4,55.9 284.65,56.2 284.9,55.6 285.15,55.6 285.4,55.7 285.65,55.7 285.9,55.6 286.15,56.0 286.4,56.2 286.65,55.9 286.9,56.0 287.15,56.2 287.4,55.9 287.65,55.7 287.9,55.9 288.15,56.0 288.4,56.1 288.65,56.1 288.9,56.1 289.15,56.1 289.4,55.5 289.65,55.5 289.9,55.5 290.15,55.4 290.4,55.1 290.65,55.1 290.9,55.4 291.15,55.9 291.4,56.8 291.65,57.8 291.9,57.2 292.15,56.7 292.4,56.3 292.65,55.9 292.9,55.5 293.15,55.1" fill="none" stroke="#0808ff" stroke-width="1.08" stroke-linejoin="round"/><rect x="38.0" y="16.3" width="255.39999999999998" height="86.4" fill="none" stroke="#767676" stroke-width="1.7"/><g font-family="'DejaVu Sans','Liberation Sans',sans-serif" font-size="10.9" fill="#545454" text-anchor="end"><text x="34.7" y="20.4">9500</text><text x="34.7" y="41.8">9000</text><text x="34.7" y="63.3">8500</text><text x="34.7" y="84.8">8000</text><text x="34.7" y="106.2">7500</text></g><g font-family="'DejaVu Serif','Liberation Serif',serif" font-size="10.8" fill="#545454" text-anchor="middle"><text x="38.4" y="115.9">0</text><text x="88.4" y="115.9">200</text><text x="138.4" y="115.9">400</text><text x="188.4" y="115.9">600</text><text x="238.4" y="115.9">800</text><text x="288.4" y="115.9">1000</text></g><rect x="179.4" y="24.3" width="13.4" height="10.4" fill="#fff" stroke="#ccc" stroke-width="1"/><rect x="180.8" y="25.7" width="10.6" height="7.6" fill="#0000ff"/><text x="196.6" y="32.8" font-family="'DejaVu Serif','Liberation Serif',serif" font-size="11.2" fill="#8a8a8a" textLength="90.6" lengthAdjust="spacing">nnaida19 1.8.W</text><path d="M292.8 6.800L302.900 16.900L292.800 27L282.700 16.900Z" fill="#ff0000"/></svg>
<svg class="a" style="left:322.4px;top:665.0px" width="313" height="121" viewBox="0 0 313 121"><path d="M88.4 16.3V102.7M138.4 16.3V102.7M188.4 16.3V102.7M238.4 16.3V102.7M288.4 16.3V102.7M38.0 37.9H293.4M38.0 59.5H293.4M38.0 81.1H293.4" stroke="#e6e6e6" stroke-width=".9" fill="none"/><polyline points="38.4,48.6 38.65,48.9 38.9,48.2 39.15,47.6 39.4,48.5 39.65,48.5 39.9,48.8 40.15,48.5 40.4,48.9 40.65,50.1 40.9,48.8 41.15,48.2 41.4,48.9 41.65,48.2 41.9,47.1 42.15,45.5 42.4,48.4 42.65,50.7 42.9,48.0 43.15,47.5 43.4,47.4 43.65,51.3 43.9,49.7 44.15,45.7 44.4,47.0 44.65,51.6 44.9,49.6 45.15,47.0 45.4,46.3 45.65,51.0 45.9,52.0 46.15,48.9 46.4,48.2 46.65,51.5 46.9,50.9 47.15,49.9 47.4,48.8 47.65,49.8 47.9,49.0 48.15,48.4 48.4,50.0 48.65,48.0 48.9,48.2 49.15,49.6 49.4,48.6 49.65,49.1 49.9,49.2 50.15,49.9 50.4,50.2 50.65,50.7 50.9,51.1 51.15,50.7 51.4,50.2 51.65,50.0 51.9,49.1 52.15,49.5 52.4,50.1 52.65,50.6 52.9,50.6 53.15,51.4 53.4,51.6 53.65,51.5 53.9,51.5 54.15,51.9 54.4,52.0 54.65,51.6 54.9,51.3 55.15,51.3 55.4,51.2 55.65,51.2 55.9,51.1 56.15,50.8 56.4,50.6 56.65,50.2 56.9,50.1 57.15,50.2 57.4,50.4 57.65,50.5 57.9,50.3 58.15,50.8 58.4,50.4 58.65,50.9 58.9,51.2 59.15,50.9 59.4,51.2 59.65,51.3 59.9,51.6 60.15,51.6 60.4,51.6 60.65,51.4 60.9,51.6 61.15,51.8 61.4,51.6 61.65,51.8 61.9,51.9 62.15,51.8 62.4,51.8 62.65,51.5 62.9,51.7 63.15,51.2 63.4,51.4 63.65,51.2 63.9,51.2 64.15,51.2 64.4,51.5 64.65,51.3 64.9,51.6 65.15,51.5 65.4,51.8 65.65,51.6 65.9,51.9 66.15,51.7 66.4,52.2 66.65,51.3 66.9,50.9 67.15,50.5 67.4,50.1 67.65,49.9 67.9,50.1 68.15,50.2 68.4,49.9 68.65,49.7 68.9,49.9 69.15,50.2 69.4,50.6 69.65,50.6 69.9,50.7 70.15,51.0 70.4,50.6 70.65,50.4 70.9,49.6 71.15,49.0 71.4,48.9 71.65,48.5 71.9,48.6 72.15,48.4 72.4,48.5 72.65,48.2 72.9,48.5 73.15,49.1 73.4,49.1 73.65,49.3 73.9,49.9 74.15,49.6 74.4,49.5 74.65,49.0 74.9,48.7 75.15,48.5 75.4,48.3 75.65,48.4 75.9,48.5 76.15,48.2 76.4,48.1 76.65,48.4 76.9,48.4 77.15,48.3 77.4,48.7 77.65,48.5 77.9,49.5 78.15,48.8 78.4,48.4 78.65,48.6 78.9,48.0 79.15,48.9 79.4,49.6 79.65,50.6 79.9,51.0 80.15,50.9 80.4,50.1 80.65,50.0 80.9,49.2 81.15,49.3 81.4,49.1 81.65,48.7 81.9,48.6 82.15,48.5 82.4,48.6 82.65,49.1 82.9,49.2 83.15,48.7 83.4,49.0 83.65,49.0 83.9,51.8 84.15,51.2 84.4,49.2 84.65,49.9 84.9,52.1 85.15,53.8 85.4,49.4 85.65,41.9 85.9,51.7 86.15,57.9 86.4,47.6 86.65,49.7 86.9,58.8 87.15,44.8 87.4,56.4 87.65,48.8 87.9,54.1 88.15,56.3 88.4,47.3 88.65,56.6 88.9,51.5 89.15,55.9 89.4,48.6 89.65,53.1 89.9,54.5 90.15,49.0 90.4,55.0 90.65,49.9 90.9,51.7 91.15,52.9 91.4,52.9 91.65,53.7 91.9,53.8 92.15,53.0 92.4,53.9 92.65,53.3 92.9,52.6 93.15,53.5 93.4,51.6 93.65,51.7 93.9,52.5 94.15,51.7 94.4,52.2 94.65,54.4 94.9,52.0 95.15,54.7 95.4,55.4 95.65,51.8 95.9,52.9 96.15,53.7 96.4,51.3 96.65,51.1 96.9,52.8 97.15,55.3 97.4,51.3 97.65,49.4 97.9,51.5 98.15,53.7 98.4,52.9 98.65,52.6 98.9,52.4 99.15,53.1 99.4,55.8 99.65,54.8 99.9,52.0 100.15,50.9 100.4,52.4 100.65,54.4 100.9,54.6 101.15,53.4 101.4,52.5 101.65,53.5 101.9,54.3 102.15,53.5 102.4,53.8 102.65,53.6 102.9,53.4 103.15,52.8 103.4,53.3 103.65,53.7 103.9,54.1 104.15,54.1 104.4,53.7 104.65,53.7 104.9,53.2 105.15,53.1 105.4,53.3 105.65,52.9 105.9,52.5 106.15,52.2 106.4,52.1 106.65,51.6 106.9,51.8 107.15,51.5 107.4,50.9 107.65,50.5 107.9,50.0 108.15,50.3 108.4,51.4 108.65,52.0 108.9,51.3 109.15,51.1 109.4,50.1 109.65,49.5 109.9,49.7 110.15,49.8 110.4,49.9 110.65,50.1 110.9,50.3 111.15,50.7 111.4,50.5 111.65,50.2 111.9,49.7 112.15,49.6 112.4,49.1 112.65,48.3 112.9,49.7 113.15,50.4 113.4,48.5 113.65,47.0 113.9,48.7 114.15,51.9 114.4,49.0 114.65,46.6 114.9,48.4 115.15,49.6 115.4,50.0 115.65,44.5 115.9,44.5 116.15,47.0 116.4,47.8 116.65,48.3 116.9,47.5 117.15,46.5 117.4,50.2 117.65,51.1 117.9,47.7 118.15,47.8 118.4,50.2 118.65,51.1 118.9,48.7 119.15,48.5 119.4,48.9 119.65,50.8 119.9,46.1 120.15,47.4 120.4,50.3 120.65,51.9 120.9,50.4 121.15,49.4 121.4,48.7 121.65,50.8 121.9,51.4 122.15,50.7 122.4,48.2 122.65,46.8 122.9,49.9 123.15,49.6 123.4,47.7 123.65,50.2 123.9,51.7 124.15,50.0 124.4,51.0 124.65,51.3 124.9,51.4 125.15,51.4 125.4,51.0 125.65,51.2 125.9,51.3 126.15,51.2 126.4,50.9 126.65,51.5 126.9,51.4 127.15,51.1 127.4,51.2 127.65,51.3 127.9,51.3 128.15,50.7 128.4,50.5 128.65,49.7 128.9,50.1 129.15,50.5 129.4,50.5 129.65,50.6 129.9,50.5 130.15,50.5 130.4,50.7 130.65,50.4 130.9,51.0 131.15,51.1 131.4,50.9 131.65,51.2 131.9,51.1 132.15,50.8 132.4,50.9 132.65,50.5 132.9,50.4 133.15,50.7 133.4,50.7 133.65,50.8 133.9,51.1 134.15,50.9 134.4,51.0 134.65,51.1 134.9,50.7 135.15,50.7 135.4,50.5 135.65,51.0 135.9,51.1 136.15,51.5 136.4,51.7 136.65,52.4 136.9,52.3 137.15,52.3 137.4,52.4 137.65,51.6 137.9,51.7 138.15,52.0 138.4,52.3 138.65,52.9 138.9,53.0 139.15,53.1 139.4,52.8 139.65,52.4 139.9,52.2 140.15,52.6 140.4,52.7 140.65,53.0 140.9,52.7 141.15,52.4 141.4,52.4 141.65,52.4 141.9,52.1 142.15,51.9 142.4,51.7 142.65,52.2 142.9,52.3 143.15,52.7 143.4,52.5 143.65,53.4 143.9,51.0 144.15,55.3 144.4,51.4 144.65,52.5 144.9,56.0 145.15,60.2 145.4,53.9 145.65,47.1 145.9,46.9 146.15,52.4 146.4,56.9 146.65,56.2 146.9,50.5 147.15,54.3 147.4,50.3 147.65,51.7 147.9,54.3 148.15,52.2 148.4,50.6 148.65,57.8 148.9,49.9 149.15,55.8 149.4,50.9 149.65,46.7 149.9,54.8 150.15,46.7 150.4,51.7 150.65,52.2 150.9,51.2 151.15,51.4 151.4,51.9 151.65,51.4 151.9,51.5 152.15,51.4 152.4,51.2 152.65,51.6 152.9,51.4 153.15,51.4 153.4,51.0 153.65,51.0 153.9,51.1 154.15,51.3 154.4,51.2 154.65,51.5 154.9,51.6 155.15,51.6 155.4,51.2 155.65,51.0 155.9,50.3 156.15,49.9 156.4,49.5 156.65,49.2 156.9,49.5 157.15,49.8 157.4,49.8 157.65,50.0 157.9,49.7 158.15,49.3 158.4,48.9 158.65,49.0 158.9,49.4 159.15,49.1 159.4,48.9 159.65,49.1 159.9,49.1 160.15,48.9 160.4,49.0 160.65,48.7 160.9,48.6 161.15,48.4 161.4,48.6 161.65,48.2 161.9,48.8 162.15,49.3 162.4,49.3 162.65,49.6 162.9,49.8 163.15,50.1 163.4,50.0 163.65,50.3 163.9,50.1 164.15,50.0 164.4,50.0 164.65,49.9 164.9,49.6 165.15,49.6 165.4,49.1 165.65,49.3 165.9,49.3 166.15,49.4 166.4,50.2 166.65,50.0 166.9,50.2 167.15,50.7 167.4,50.5 167.65,50.6 167.9,50.2 168.15,50.1 168.4,49.8 168.65,49.5 168.9,49.5 169.15,49.9 169.4,49.5 169.65,49.1 169.9,49.3 170.15,49.6 170.4,49.6 170.65,50.1 170.9,50.0 171.15,50.1 171.4,50.6 171.65,50.3 171.9,50.4 172.15,50.2 172.4,50.3 172.65,50.2 172.9,49.6 173.15,49.6 173.4,49.1 173.65,49.1 173.9,49.1 174.15,49.6 174.4,49.7 174.65,49.6 174.9,49.7 175.15,49.3 175.4,49.5 175.65,50.3 175.9,50.8 176.15,50.3 176.4,50.3 176.65,49.7 176.9,49.5 177.15,48.9 177.4,49.8 177.65,50.5 177.9,51.5 178.15,51.6 178.4,51.3 178.65,51.3 178.9,51.1 179.15,50.8 179.4,50.6 179.65,50.4 179.9,50.8 180.15,49.9 180.4,49.8 180.65,49.8 180.9,50.5 181.15,50.8 181.4,51.3 181.65,51.4 181.9,51.5 182.15,52.0 182.4,51.9 182.65,51.4 182.9,51.3 183.15,51.1 183.4,50.7 183.65,50.7 183.9,50.9 184.15,50.5 184.4,50.9 184.65,51.0 184.9,51.5 185.15,51.5 185.4,51.8 185.65,51.3 185.9,50.8 186.15,51.1 186.4,50.8 186.65,50.7 186.9,50.9 187.15,51.0 187.4,50.9 187.65,51.1 187.9,50.7 188.15,50.6 188.4,51.0 188.65,50.7 188.9,50.7 189.15,50.5 189.4,50.8 189.65,50.8 189.9,50.8 190.15,50.8 190.4,51.3 190.65,51.3 190.9,50.9 191.15,51.1 191.4,50.7 191.65,50.2 191.9,50.6 192.15,51.2 192.4,51.7 192.65,51.6 192.9,51.3 193.15,50.9 193.4,50.5 193.65,50.7 193.9,51.3 194.15,51.1 194.4,51.0 194.65,51.0 194.9,51.1 195.15,50.6 195.4,50.3 195.65,50.1 195.9,49.5 196.15,49.4 196.4,50.0 196.65,50.4 196.9,50.7 197.15,51.7 197.4,52.0 197.65,51.2 197.9,50.5 198.15,50.0 198.4,50.3 198.65,50.2 198.9,50.1 199.15,50.0 199.4,50.1 199.65,50.2 199.9,49.9 200.15,49.9 200.4,49.1 200.65,49.5 200.9,50.1 201.15,50.2 201.4,50.8 201.65,51.0 201.9,50.9 202.15,50.6 202.4,50.5 202.65,48.9 202.9,51.7 203.15,54.5 203.4,54.9 203.65,47.9 203.9,48.0 204.15,55.5 204.4,48.8 204.65,53.6 204.9,54.8 205.15,46.3 205.4,45.3 205.65,56.8 205.9,47.8 206.15,51.4 206.4,50.4 206.65,47.3 206.9,49.4 207.15,56.2 207.4,55.8 207.65,48.4 207.9,53.6 208.15,55.6 208.4,53.0 208.65,51.7 208.9,45.9 209.15,51.4 209.4,55.2 209.65,54.7 209.9,47.1 210.15,50.5 210.4,55.5 210.65,54.8 210.9,49.9 211.15,55.0 211.4,51.4 211.65,49.5 211.9,53.9 212.15,53.2 212.4,53.5 212.65,53.9 212.9,54.1 213.15,54.9 213.4,54.3 213.65,54.3 213.9,54.1 214.15,53.9 214.4,54.4 214.65,54.6 214.9,55.1 215.15,55.2 215.4,55.4 215.65,55.5 215.9,55.5 216.15,55.6 216.4,55.5 216.65,55.5 216.9,55.4 217.15,55.8 217.4,55.5 217.65,55.3 217.9,55.8 218.15,55.3 218.4,55.3 218.65,55.5 218.9,55.7 219.15,56.1 219.4,55.8 219.65,56.4 219.9,55.8 220.15,55.4 220.4,55.7 220.65,55.8 220.9,55.6 221.15,55.4 221.4,54.9 221.65,55.0 221.9,55.3 222.15,55.2 222.4,55.5 222.65,55.2 222.9,54.9 223.15,54.9 223.4,54.3 223.65,54.3 223.9,54.5 224.15,54.5 224.4,54.4 224.65,54.2 224.9,53.7 225.15,53.7 225.4,52.9 225.65,52.3 225.9,51.9 226.15,51.8 226.4,51.4 226.65,51.7 226.9,51.7 227.15,51.5 227.4,51.9 227.65,51.2 227.9,51.0 228.15,50.4 228.4,50.2 228.65,49.7 228.9,49.3 229.15,49.5 229.4,49.9 229.65,50.3 229.9,50.4 230.15,50.3 230.4,50.5 230.65,50.4 230.9,50.2 231.15,50.9 231.4,50.0 231.65,49.9 231.9,49.4 232.15,48.2 232.4,49.2 232.65,47.6 232.9,48.5 233.15,49.4 233.4,46.4 233.65,50.8 233.9,47.1 234.15,46.2 234.4,48.6 234.65,49.7 234.9,49.5 235.15,48.3 235.4,45.4 235.65,47.9 235.9,49.3 236.15,50.6 236.4,50.2 236.65,49.1 236.9,46.6 237.15,47.4 237.4,50.0 237.65,50.2 237.9,48.6 238.15,47.8 238.4,50.3 238.65,47.7 238.9,47.6 239.15,50.0 239.4,48.3 239.65,48.5 239.9,48.9 240.15,48.6 240.4,49.2 240.65,49.2 240.9,49.3 241.15,49.3 241.4,49.5 241.65,49.2 241.9,49.2 242.15,49.5 242.4,49.5 242.65,49.8 242.9,49.8 243.15,50.2 243.4,50.2 243.65,50.4 243.9,50.1 244.15,50.0 244.4,50.5 244.65,50.7 244.9,50.6 245.15,51.0 245.4,52.0 245.65,52.3 245.9,52.5 246.15,52.9 246.4,52.6 246.65,52.6 246.9,52.6 247.15,52.4 247.4,52.2 247.65,51.7 247.9,51.6 248.15,51.2 248.4,51.5 248.65,51.3 248.9,51.2 249.15,51.0 249.4,50.9 249.65,50.8 249.9,50.6 250.15,51.0 250.4,51.1 250.65,50.6 250.9,50.4 251.15,50.3 251.4,50.6 251.65,51.1 251.9,51.3 252.15,51.5 252.4,51.9 252.65,51.9 252.9,52.0 253.15,52.8 253.4,53.4 253.65,53.8 253.9,53.0 254.15,52.4 254.4,52.0 254.65,51.9 254.9,52.0 255.15,52.2 255.4,51.6 255.65,51.5 255.9,51.6 256.15,52.4 256.4,52.7 256.65,52.8 256.9,52.4 257.15,51.5 257.4,51.1 257.65,50.5 257.9,49.9 258.15,50.2 258.4,50.8 258.65,51.7 258.9,52.2 259.15,51.9 259.4,52.1 259.65,52.1 259.9,51.6 260.15,52.3 260.4,52.3 260.65,53.0 260.9,52.5 261.15,52.7 261.4,52.4 261.65,51.9 261.9,52.1 262.15,52.5 262.4,52.6 262.65,52.6 262.9,52.5 263.15,51.7 263.4,51.4 263.65,49.7 263.9,49.7 264.15,52.3 264.4,53.7 264.65,51.4 264.9,47.5 265.15,50.1 265.4,53.0 265.65,54.1 265.9,46.3 266.15,49.9 266.4,51.2 266.65,54.4 266.9,49.3 267.15,48.3 267.4,53.2 267.65,54.3 267.9,46.5 268.15,47.3 268.4,56.6 268.65,51.3 268.9,45.2 269.15,50.1 269.4,54.5 269.65,55.0 269.9,51.5 270.15,46.9 270.4,47.0 270.65,52.4 270.9,54.4 271.15,49.1 271.4,49.4 271.65,51.5 271.9,52.5 272.15,51.4 272.4,51.3 272.65,51.5 272.9,51.3 273.15,51.0 273.4,51.0 273.65,50.8 273.9,50.4 274.15,50.0 274.4,50.0 274.65,50.2 274.9,49.9 275.15,49.7 275.4,49.2 275.65,49.1 275.9,48.6 276.15,48.5 276.4,48.4 276.65,48.2 276.9,48.6 277.15,48.0 277.4,48.1 277.65,48.3 277.9,48.2 278.15,48.7 278.4,49.2 278.65,49.6 278.9,50.3 279.15,49.5 279.4,48.7 279.65,48.3 279.9,47.6 280.15,47.5 280.4,47.0 280.65,47.1 280.9,47.1 281.15,47.0 281.4,47.4 281.65,47.4 281.9,47.8 282.15,47.1 282.4,47.1 282.65,46.4 282.9,46.8 283.15,46.9 283.4,47.1 283.65,48.0 283.9,47.5 284.15,49.1 284.4,49.7 284.65,49.0 284.9,47.4 285.15,49.7 285.4,50.4 285.65,48.1 285.9,49.0 286.15,50.1 286.4,49.9 286.65,49.7 286.9,51.3 287.15,50.8 287.4,50.1 287.65,48.5 287.9,50.5 288.15,49.8 288.4,47.7 288.65,48.9 288.9,51.4 289.15,49.2 289.4,49.3 289.65,50.1 289.9,51.1 290.15,49.3 290.4,50.4 290.65,51.7 290.9,49.7 291.15,51.0 291.4,51.7 291.65,51.8 291.9,51.3 292.15,51.7 292.4,51.4 292.65,51.2 292.9,51.1 293.15,50.6" fill="none" stroke="#0808ff" stroke-width="1.08" stroke-linejoin="round"/><rect x="38.0" y="16.3" width="255.39999999999998" height="86.4" fill="none" stroke="#767676" stroke-width="1.7"/><g font-family="'DejaVu Sans','Liberation Sans',sans-serif" font-size="10.9" fill="#545454" text-anchor="end"><text x="34.7" y="20.4">9500</text><text x="34.7" y="41.8">9000</text><text x="34.7" y="63.3">8500</text><text x="34.7" y="84.8">8000</text><text x="34.7" y="106.2">7500</text></g><g font-family="'DejaVu Serif','Liberation Serif',serif" font-size="10.8" fill="#545454" text-anchor="middle"><text x="38.4" y="115.9">0</text><text x="88.4" y="115.9">200</text><text x="138.4" y="115.9">400</text><text x="188.4" y="115.9">600</text><text x="238.4" y="115.9">800</text><text x="288.4" y="115.9">1000</text></g><rect x="179.4" y="24.3" width="13.4" height="10.4" fill="#fff" stroke="#ccc" stroke-width="1"/><rect x="180.8" y="25.7" width="10.6" height="7.6" fill="#0000ff"/><text x="196.6" y="32.8" font-family="'DejaVu Serif','Liberation Serif',serif" font-size="11.2" fill="#8a8a8a" textLength="90.6" lengthAdjust="spacing">nnaida20 1.8.W</text><path d="M292.8 6.800L302.900 16.900L292.800 27L282.700 16.900Z" fill="#ff0000"/></svg>
<svg class="a" style="left:635.7px;top:665.0px" width="313" height="121" viewBox="0 0 313 121"><path d="M88.4 16.3V102.7M138.4 16.3V102.7M188.4 16.3V102.7M238.4 16.3V102.7M288.4 16.3V102.7M38.0 37.9H293.4M38.0 59.5H293.4M38.0 81.1H293.4" stroke="#e6e6e6" stroke-width=".9" fill="none"/><polyline points="38.4,52.3 38.65,50.9 38.9,50.9 39.15,52.3 39.4,50.9 39.65,50.9 39.9,52.3 40.15,51.7 40.4,51.5 40.65,52.1 40.9,51.2 41.15,52.0 41.4,51.6 41.65,51.1 41.9,52.4 42.15,51.7 42.4,50.3 42.65,50.6 42.9,51.3 43.15,52.0 43.4,50.4 43.65,51.9 43.9,51.1 44.15,51.5 44.4,53.4 44.65,50.9 44.9,52.4 45.15,51.9 45.4,52.3 45.65,52.6 45.9,51.6 46.15,53.6 46.4,53.1 46.65,51.7 46.9,51.4 47.15,52.5 47.4,53.2 47.65,51.9 47.9,53.0 48.15,52.4 48.4,52.5 48.65,53.0 48.9,52.3 49.15,52.0 49.4,53.0 49.65,53.0 49.9,51.3 50.15,51.8 50.4,53.0 50.65,51.4 50.9,53.2 51.15,51.3 51.4,51.8 51.65,52.7 51.9,53.4 52.15,52.7 52.4,52.6 52.65,53.1 52.9,53.3 53.15,52.1 53.4,53.0 53.65,52.5 53.9,51.6 54.15,51.1 54.4,51.7 54.65,53.8 54.9,53.2 55.15,53.2 55.4,53.5 55.65,53.4 55.9,52.4 56.15,52.5 56.4,53.3 56.65,53.8 56.9,53.5 57.15,53.4 57.4,52.9 57.65,53.3 57.9,53.5 58.15,52.9 58.4,52.8 58.65,53.0 58.9,53.9 59.15,52.9 59.4,54.5 59.65,53.8 59.9,53.5 60.15,54.2 60.4,53.1 60.65,54.3 60.9,53.4 61.15,53.4 61.4,53.2 61.65,53.9 61.9,53.5 62.15,53.1 62.4,54.5 62.65,54.1 62.9,53.3 63.15,54.2 63.4,52.9 63.65,54.6 63.9,54.2 64.15,53.8 64.4,54.2 64.65,54.0 64.9,54.1 65.15,53.8 65.4,53.3 65.65,54.0 65.9,53.4 66.15,53.6 66.4,53.2 66.65,52.8 66.9,53.9 67.15,52.3 67.4,52.7 67.65,54.1 67.9,54.0 68.15,53.3 68.4,53.3 68.65,54.1 68.9,54.4 69.15,54.4 69.4,53.6 69.65,53.9 69.9,54.8 70.15,54.7 70.4,55.0 70.65,54.1 70.9,54.0 71.15,54.4 71.4,54.3 71.65,53.7 71.9,55.7 72.15,54.5 72.4,54.2 72.65,55.5 72.9,55.7 73.15,55.0 73.4,54.4 73.65,54.9 73.9,55.3 74.15,55.2 74.4,54.9 74.65,54.2 74.9,54.6 75.15,54.7 75.4,54.3 75.65,54.4 75.9,55.0 76.15,55.2 76.4,55.4 76.65,54.7 76.9,54.5 77.15,54.5 77.4,54.4 77.65,54.2 77.9,54.7 78.15,55.2 78.4,54.7 78.65,55.0 78.9,55.2 79.15,53.4 79.4,53.7 79.65,54.9 79.9,55.5 80.15,53.5 80.4,53.9 80.65,55.3 80.9,54.7 81.15,53.8 81.4,55.1 81.65,55.1 81.9,54.3 82.15,53.7 82.4,54.9 82.65,54.6 82.9,53.2 83.15,54.2 83.4,53.9 83.65,53.9 83.9,54.9 84.15,54.0 84.4,54.0 84.65,55.4 84.9,54.4 85.15,52.8 85.4,55.4 85.65,55.4 85.9,50.0 86.15,59.6 86.4,51.0 86.65,53.2 86.9,59.9 87.15,50.1 87.4,57.0 87.65,56.2 87.9,49.6 88.15,60.5 88.4,49.9 88.65,53.4 88.9,56.0 89.15,53.4 89.4,52.0 89.65,57.5 89.9,56.6 90.15,51.7 90.4,51.3 90.65,59.3 90.9,57.1 91.15,49.5 91.4,51.3 91.65,58.4 91.9,53.7 92.15,54.3 92.4,55.1 92.65,53.2 92.9,54.1 93.15,54.4 93.4,54.3 93.65,55.0 93.9,53.4 94.15,55.4 94.4,54.4 94.65,52.9 94.9,53.5 95.15,56.0 95.4,55.0 95.65,52.5 95.9,51.9 96.15,54.8 96.4,54.9 96.65,53.5 96.9,53.1 97.15,53.8 97.4,54.7 97.65,55.2 97.9,51.7 98.15,55.5 98.4,53.8 98.65,52.5 98.9,55.1 99.15,51.6 99.4,53.7 99.65,54.4 99.9,51.5 100.15,54.4 100.4,53.4 100.65,52.5 100.9,55.0 101.15,52.2 101.4,54.0 101.65,54.4 101.9,53.9 102.15,52.9 102.4,53.1 102.65,54.1 102.9,54.1 103.15,54.2 103.4,53.5 103.65,52.9 103.9,53.9 104.15,54.0 104.4,53.7 104.65,53.2 104.9,52.6 105.15,54.2 105.4,52.6 105.65,52.8 105.9,53.6 106.15,52.7 106.4,53.2 106.65,53.1 106.9,52.4 107.15,53.4 107.4,51.9 107.65,53.6 107.9,52.4 108.15,53.6 108.4,52.5 108.65,52.6 108.9,54.0 109.15,53.9 109.4,52.7 109.65,51.6 109.9,52.4 110.15,53.2 110.4,52.5 110.65,51.1 110.9,50.9 111.15,52.3 111.4,51.8 111.65,52.0 111.9,52.1 112.15,52.9 112.4,51.4 112.65,51.3 112.9,52.4 113.15,52.7 113.4,51.6 113.65,52.3 113.9,53.1 114.15,52.2 114.4,51.2 114.65,52.7 114.9,51.9 115.15,50.3 115.4,51.5 115.65,52.3 115.9,51.0 116.15,51.3 116.4,51.7 116.65,51.5 116.9,50.9 117.15,52.2 117.4,52.3 117.65,51.5 117.9,51.5 118.15,52.4 118.4,52.4 118.65,51.2 118.9,51.7 119.15,52.6 119.4,52.4 119.65,51.7 119.9,51.9 120.15,52.1 120.4,51.5 120.65,51.3 120.9,52.2 121.15,52.2 121.4,51.3 121.65,51.2 121.9,51.5 122.15,51.9 122.4,51.7 122.65,51.2 122.9,51.6 123.15,51.9 123.4,51.4 123.65,50.9 123.9,51.0 124.15,52.5 124.4,51.5 124.65,50.5 124.9,51.9 125.15,52.1 125.4,49.9 125.65,53.3 125.9,49.9 126.15,50.6 126.4,52.7 126.65,52.4 126.9,51.0 127.15,49.2 127.4,54.0 127.65,49.8 127.9,51.5 128.15,50.7 128.4,50.4 128.65,51.3 128.9,49.6 129.15,51.8 129.4,51.4 129.65,50.5 129.9,51.0 130.15,52.5 130.4,50.9 130.65,51.0 130.9,51.3 131.15,51.0 131.4,50.3 131.65,50.9 131.9,51.0 132.15,50.8 132.4,51.2 132.65,50.6 132.9,49.9 133.15,50.6 133.4,51.3 133.65,50.6 133.9,50.8 134.15,50.8 134.4,50.7 134.65,51.4 134.9,50.4 135.15,51.1 135.4,50.6 135.65,51.4 135.9,51.8 136.15,51.1 136.4,50.8 136.65,52.5 136.9,51.6 137.15,50.9 137.4,52.3 137.65,51.2 137.9,51.7 138.15,51.8 138.4,51.1 138.65,50.3 138.9,51.1 139.15,50.9 139.4,51.1 139.65,50.8 139.9,51.9 140.15,51.8 140.4,50.3 140.65,51.0 140.9,52.2 141.15,50.4 141.4,50.3 141.65,51.4 141.9,50.7 142.15,50.9 142.4,51.2 142.65,50.6 142.9,50.5 143.15,52.4 143.4,50.9 143.65,50.5 143.9,51.1 144.15,52.4 144.4,51.4 144.65,50.5 144.9,51.7 145.15,52.2 145.4,51.4 145.65,48.9 145.9,50.7 146.15,52.3 146.4,50.7 146.65,49.7 146.9,53.8 147.15,49.5 147.4,49.9 147.65,51.2 147.9,51.5 148.15,52.3 148.4,54.2 148.65,53.5 148.9,48.5 149.15,47.5 149.4,54.5 149.65,54.3 149.9,51.6 150.15,47.5 150.4,52.3 150.65,53.2 150.9,50.8 151.15,46.9 151.4,52.9 151.65,53.7 151.9,49.9 152.15,48.3 152.4,52.4 152.65,53.8 152.9,48.9 153.15,47.7 153.4,53.4 153.65,54.1 153.9,52.3 154.15,46.5 154.4,50.7 154.65,54.9 154.9,52.3 155.15,50.6 155.4,48.6 155.65,53.6 155.9,53.9 156.15,50.3 156.4,50.0 156.65,51.8 156.9,53.7 157.15,51.8 157.4,50.2 157.65,52.7 157.9,51.8 158.15,50.4 158.4,50.4 158.65,51.1 158.9,51.7 159.15,50.9 159.4,51.2 159.65,51.9 159.9,51.9 160.15,51.9 160.4,50.8 160.65,51.1 160.9,51.7 161.15,52.6 161.4,52.1 161.65,51.2 161.9,51.1 162.15,52.1 162.4,51.9 162.65,52.0 162.9,51.6 163.15,51.9 163.4,52.3 163.65,53.2 163.9,52.2 164.15,51.9 164.4,51.6 164.65,52.7 164.9,52.6 165.15,51.9 165.4,51.9 165.65,51.9 165.9,52.4 166.15,52.6 166.4,52.3 166.65,51.4 166.9,52.2 167.15,53.2 167.4,53.3 167.65,52.3 167.9,51.9 168.15,51.9 168.4,53.0 168.65,54.0 168.9,54.0 169.15,52.7 169.4,52.4 169.65,53.3 169.9,53.3 170.15,52.2 170.4,53.2 170.65,52.1 170.9,51.7 171.15,53.2 171.4,53.3 171.65,52.5 171.9,52.3 172.15,52.9 172.4,53.7 172.65,54.5 172.9,53.8 173.15,52.9 173.4,53.3 173.65,53.9 173.9,53.8 174.15,52.6 174.4,53.1 174.65,53.7 174.9,53.3 175.15,53.3 175.4,52.4 175.65,53.2 175.9,53.3 176.15,53.2 176.4,53.0 176.65,53.4 176.9,54.1 177.15,53.1 177.4,53.4 177.65,53.5 177.9,53.3 178.15,54.0 178.4,52.8 178.65,53.9 178.9,53.0 179.15,53.1 179.4,54.6 179.65,53.7 179.9,52.7 180.15,54.1 180.4,53.3 180.65,53.2 180.9,54.3 181.15,54.2 181.4,53.6 181.65,53.5 181.9,53.7 182.15,53.7 182.4,53.7 182.65,52.9 182.9,54.4 183.15,53.8 183.4,53.0 183.65,53.8 183.9,55.0 184.15,54.8 184.4,54.0 184.65,54.3 184.9,55.1 185.15,54.4 185.4,53.5 185.65,54.4 185.9,54.5 186.15,55.2 186.4,54.5 186.65,54.4 186.9,55.0 187.15,55.2 187.4,54.2 187.65,54.2 187.9,54.8 188.15,54.3 188.4,53.9 188.65,53.7 188.9,53.5 189.15,54.6 189.4,54.8 189.65,54.8 189.9,54.3 190.15,55.2 190.4,55.7 190.65,56.2 190.9,55.8 191.15,55.6 191.4,55.8 191.65,57.1 191.9,57.0 192.15,56.4 192.4,55.0 192.65,57.0 192.9,56.1 193.15,56.2 193.4,57.2 193.65,56.6 193.9,55.6 194.15,56.2 194.4,56.8 194.65,57.6 194.9,56.5 195.15,55.7 195.4,56.3 195.65,56.4 195.9,56.1 196.15,56.5 196.4,56.8 196.65,56.4 196.9,56.0 197.15,56.0 197.4,57.2 197.65,56.2 197.9,56.1 198.15,56.7 198.4,56.4 198.65,57.2 198.9,56.4 199.15,56.2 199.4,56.2 199.65,56.8 199.9,56.2 200.15,55.9 200.4,57.2 200.65,55.4 200.9,56.3 201.15,55.9 201.4,55.1 201.65,56.3 201.9,55.6 202.15,55.9 202.4,56.8 202.65,55.4 202.9,55.1 203.15,58.9 203.4,52.2 203.65,53.9 203.9,57.7 204.15,56.7 204.4,53.0 204.65,56.5 204.9,56.0 205.15,54.8 205.4,53.4 205.65,56.8 205.9,59.3 206.15,56.8 206.4,55.0 206.65,52.0 206.9,57.6 207.15,58.3 207.4,53.9 207.65,53.2 207.9,56.1 208.15,57.1 208.4,57.7 208.65,54.8 208.9,51.3 209.15,56.9 209.4,58.4 209.65,53.1 209.9,56.2 210.15,61.3 210.4,53.4 210.65,55.4 210.9,56.7 211.15,57.7 211.4,54.2 211.65,52.7 211.9,54.7 212.15,55.4 212.4,57.2 212.65,55.4 212.9,55.0 213.15,56.3 213.4,56.3 213.65,54.9 213.9,55.1 214.15,55.9 214.4,55.2 214.65,55.2 214.9,55.0 215.15,55.8 215.4,55.2 215.65,55.4 215.9,55.4 216.15,54.8 216.4,55.0 216.65,55.2 216.9,54.7 217.15,54.3 217.4,55.2 217.65,55.0 217.9,54.0 218.15,54.3 218.4,55.6 218.65,54.9 218.9,53.5 219.15,54.6 219.4,55.0 219.65,54.6 219.9,55.1 220.15,54.2 220.4,53.7 220.65,54.7 220.9,54.3 221.15,53.5 221.4,53.1 221.65,54.7 221.9,54.1 222.15,54.0 222.4,53.6 222.65,53.8 222.9,54.8 223.15,53.1 223.4,53.0 223.65,53.7 223.9,53.6 224.15,53.4 224.4,53.2 224.65,53.5 224.9,53.5 225.15,53.7 225.4,53.2 225.65,53.8 225.9,52.9 226.15,52.7 226.4,53.5 226.65,53.6 226.9,53.4 227.15,53.1 227.4,53.0 227.65,53.6 227.9,53.5 228.15,52.3 228.4,52.3 228.65,53.7 228.9,53.8 229.15,52.9 229.4,52.9 229.65,53.3 229.9,53.4 230.15,52.7 230.4,53.5 230.65,52.7 230.9,52.3 231.15,53.7 231.4,51.9 231.65,53.0 231.9,52.8 232.15,52.4 232.4,51.8 232.65,52.4 232.9,53.2 233.15,52.5 233.4,51.9 233.65,52.2 233.9,52.8 234.15,51.8 234.4,51.6 234.65,52.2 234.9,52.1 235.15,51.4 235.4,51.9 235.65,52.2 235.9,51.5 236.15,51.5 236.4,51.3 236.65,53.0 236.9,52.2 237.15,52.3 237.4,52.0 237.65,52.0 237.9,52.7 238.15,52.3 238.4,51.3 238.65,53.0 238.9,52.8 239.15,52.0 239.4,52.4 239.65,53.2 239.9,52.1 240.15,52.2 240.4,52.5 240.65,51.8 240.9,51.2 241.15,51.9 241.4,52.0 241.65,51.7 241.9,51.4 242.15,51.5 242.4,51.9 242.65,52.5 242.9,51.6 243.15,52.1 243.4,52.3 243.65,51.3 243.9,51.1 244.15,52.1 244.4,52.2 244.65,50.8 244.9,52.0 245.15,52.0 245.4,51.6 245.65,50.5 245.9,51.7 246.15,52.3 246.4,50.8 246.65,51.3 246.9,52.4 247.15,50.8 247.4,51.4 247.65,52.2 247.9,51.6 248.15,51.3 248.4,51.3 248.65,51.8 248.9,51.6 249.15,51.3 249.4,52.1 249.65,52.7 249.9,51.6 250.15,51.7 250.4,53.0 250.65,51.2 250.9,52.6 251.15,52.1 251.4,50.8 251.65,52.6 251.9,51.4 252.15,51.2 252.4,52.7 252.65,51.9 252.9,50.9 253.15,51.7 253.4,51.8 253.65,50.7 253.9,51.2 254.15,51.0 254.4,50.4 254.65,50.8 254.9,50.5 255.15,50.8 255.4,50.3 255.65,51.5 255.9,53.3 256.15,52.3 256.4,51.6 256.65,51.2 256.9,51.7 257.15,51.8 257.4,51.0 257.65,50.3 257.9,51.3 258.15,51.9 258.4,50.5 258.65,50.4 258.9,51.7 259.15,52.2 259.4,51.7 259.65,51.6 259.9,51.5 260.15,52.3 260.4,51.0 260.65,50.6 260.9,51.7 261.15,52.1 261.4,51.6 261.65,50.2 261.9,51.0 262.15,52.4 262.4,51.7 262.65,50.5 262.9,50.7 263.15,51.2 263.4,52.3 263.65,52.2 263.9,49.4 264.15,48.5 264.4,54.6 264.65,51.0 264.9,48.7 265.15,52.3 265.4,53.3 265.65,48.9 265.9,50.7 266.15,52.7 266.4,49.6 266.65,52.0 266.9,52.4 267.15,51.5 267.4,51.2 267.65,57.0 267.9,46.9 268.15,50.1 268.4,55.9 268.65,46.1 268.9,48.1 269.15,57.0 269.4,55.4 269.65,46.8 269.9,45.7 270.15,57.6 270.4,45.4 270.65,57.5 270.9,47.6 271.15,50.9 271.4,53.2 271.65,47.6 271.9,55.4 272.15,47.1 272.4,51.3 272.65,50.8 272.9,52.0 273.15,54.9 273.4,48.6 273.65,55.3 273.9,55.5 274.15,50.3 274.4,50.1 274.65,52.7 274.9,54.8 275.15,51.2 275.4,49.9 275.65,51.9 275.9,52.2 276.15,51.9 276.4,51.8 276.65,51.8 276.9,52.4 277.15,52.6 277.4,53.0 277.65,52.1 277.9,52.1 278.15,52.4 278.4,52.7 278.65,51.7 278.9,52.9 279.15,51.6 279.4,51.3 279.65,51.7 279.9,52.7 280.15,52.7 280.4,53.1 280.65,52.8 280.9,52.1 281.15,53.5 281.4,54.3 281.65,54.0 281.9,53.3 282.15,52.6 282.4,53.5 282.65,54.1 282.9,54.1 283.15,53.3 283.4,53.2 283.65,53.8 283.9,53.9 284.15,52.8 284.4,53.9 284.65,53.4 284.9,53.0 285.15,53.5 285.4,52.5 285.65,54.1 285.9,52.3 286.15,54.2 286.4,52.5 286.65,53.6 286.9,54.1 287.15,53.3 287.4,52.5 287.65,54.0 287.9,54.5 288.15,53.8 288.4,53.6 288.65,55.0 288.9,54.6 289.15,53.2 289.4,52.6 289.65,52.9 289.9,53.6 290.15,52.8 290.4,52.7 290.65,52.8 290.9,53.2 291.15,52.7 291.4,52.0 291.65,52.6 291.9,52.1 292.15,52.3 292.4,53.0 292.65,52.3 292.9,53.3 293.15,52.3" fill="none" stroke="#0808ff" stroke-width="1.08" stroke-linejoin="round"/><rect x="38.0" y="16.3" width="255.39999999999998" height="86.4" fill="none" stroke="#767676" stroke-width="1.7"/><g font-family="'DejaVu Sans','Liberation Sans',sans-serif" font-size="10.9" fill="#545454" text-anchor="end"><text x="34.7" y="20.4">9500</text><text x="34.7" y="41.8">9000</text><text x="34.7" y="63.3">8500</text><text x="34.7" y="84.8">8000</text><text x="34.7" y="106.2">7500</text></g><g font-family="'DejaVu Serif','Liberation Serif',serif" font-size="10.8" fill="#545454" text-anchor="middle"><text x="38.4" y="115.9">0</text><text x="88.4" y="115.9">200</text><text x="138.4" y="115.9">400</text><text x="188.4" y="115.9">600</text><text x="238.4" y="115.9">800</text><text x="288.4" y="115.9">1000</text></g><rect x="179.4" y="24.3" width="13.4" height="10.4" fill="#fff" stroke="#ccc" stroke-width="1"/><rect x="180.8" y="25.7" width="10.6" height="7.6" fill="#0000ff"/><text x="196.6" y="32.8" font-family="'DejaVu Serif','Liberation Serif',serif" font-size="11.2" fill="#8a8a8a" textLength="90.6" lengthAdjust="spacing">nnaida23 1.8.W</text><path d="M292.8 6.800L302.900 16.900L292.800 27L282.700 16.900Z" fill="#ff0000"/></svg>
<svg class="a" style="left:949.1px;top:665.0px" width="313" height="121" viewBox="0 0 313 121"><path d="M88.4 16.3V102.7M138.4 16.3V102.7M188.4 16.3V102.7M238.4 16.3V102.7M288.4 16.3V102.7M38.0 37.9H293.4M38.0 59.5H293.4M38.0 81.1H293.4" stroke="#c4c4c4" stroke-width=".9" fill="none"/><polyline points="38.4,52.1 38.65,51.9 38.9,51.5 39.15,50.1 39.4,50.3 39.65,51.2 39.9,52.1 40.15,52.7 40.4,52.9 40.65,53.3 40.9,52.5 41.15,51.5 41.4,51.1 41.65,50.5 41.9,51.2 42.15,51.4 42.4,52.2 42.65,53.1 42.9,52.0 43.15,51.1 43.4,50.1 43.65,50.9 43.9,52.1 44.15,52.3 44.4,52.6 44.65,52.9 44.9,53.0 45.15,53.2 45.4,53.9 45.65,53.4 45.9,54.3 46.15,54.5 46.4,53.1 46.65,53.0 46.9,51.4 47.15,51.6 47.4,51.3 47.65,52.0 47.9,52.7 48.15,53.0 48.4,52.6 48.65,52.5 48.9,52.7 49.15,52.5 49.4,52.4 49.65,52.2 49.9,52.2 50.15,52.1 50.4,51.7 50.65,51.4 50.9,51.4 51.15,51.6 51.4,51.8 51.65,52.3 51.9,52.4 52.15,52.7 52.4,52.7 52.65,53.0 52.9,52.6 53.15,52.6 53.4,52.8 53.65,52.9 53.9,53.9 54.15,54.4 54.4,54.5 54.65,55.2 54.9,54.9 55.15,55.1 55.4,54.6 55.65,54.4 55.9,53.9 56.15,54.0 56.4,54.3 56.65,54.0 56.9,54.3 57.15,54.8 57.4,54.9 57.65,55.3 57.9,55.3 58.15,55.4 58.4,54.8 58.65,54.7 58.9,54.5 59.15,55.0 59.4,55.1 59.65,54.7 59.9,54.7 60.15,54.1 60.4,53.2 60.65,53.8 60.9,53.4 61.15,53.2 61.4,52.9 61.65,53.2 61.9,53.5 62.15,53.5 62.4,53.5 62.65,52.9 62.9,53.4 63.15,54.1 63.4,54.6 63.65,55.1 63.9,55.3 64.15,55.9 64.4,55.9 64.65,56.1 64.9,56.8 65.15,55.6 65.4,56.1 65.65,57.5 65.9,55.8 66.15,57.3 66.4,56.1 66.65,54.9 66.9,55.1 67.15,55.5 67.4,56.9 67.65,54.0 67.9,54.9 68.15,57.4 68.4,55.9 68.65,54.6 68.9,56.4 69.15,55.8 69.4,52.0 69.65,55.0 69.9,54.1 70.15,51.6 70.4,54.0 70.65,54.7 70.9,52.4 71.15,53.5 71.4,55.4 71.65,53.8 71.9,53.1 72.15,52.7 72.4,55.8 72.65,55.1 72.9,53.7 73.15,52.6 73.4,52.7 73.65,54.3 73.9,54.0 74.15,53.2 74.4,51.6 74.65,53.6 74.9,55.5 75.15,55.4 75.4,56.0 75.65,55.1 75.9,55.9 76.15,54.7 76.4,54.5 76.65,53.4 76.9,53.8 77.15,53.3 77.4,54.0 77.65,53.3 77.9,52.7 78.15,52.9 78.4,52.9 78.65,52.6 78.9,52.4 79.15,51.6 79.4,52.5 79.65,53.1 79.9,54.1 80.15,54.8 80.4,54.8 80.65,54.6 80.9,54.2 81.15,54.8 81.4,55.4 81.65,55.3 81.9,56.2 82.15,55.3 82.4,54.8 82.65,54.3 82.9,54.3 83.15,53.2 83.4,53.6 83.65,53.2 83.9,54.4 84.15,54.7 84.4,55.0 84.65,55.7 84.9,56.0 85.15,55.4 85.4,51.7 85.65,51.4 85.9,55.6 86.15,55.6 86.4,52.6 86.65,51.4 86.9,53.1 87.15,57.1 87.4,53.8 87.65,52.4 87.9,52.0 88.15,52.7 88.4,54.4 88.65,52.8 88.9,50.6 89.15,50.6 89.4,51.5 89.65,55.0 89.9,57.4 90.15,52.5 90.4,57.4 90.65,53.6 90.9,56.4 91.15,56.6 91.4,53.3 91.65,52.2 91.9,57.1 92.15,54.7 92.4,53.4 92.65,53.9 92.9,53.9 93.15,54.0 93.4,53.9 93.65,54.0 93.9,53.7 94.15,54.3 94.4,54.2 94.65,54.2 94.9,54.0 95.15,54.0 95.4,53.8 95.65,53.7 95.9,53.7 96.15,53.7 96.4,54.4 96.65,53.9 96.9,52.9 97.15,52.9 97.4,52.0 97.65,52.4 97.9,52.3 98.15,52.6 98.4,52.0 98.65,52.7 98.9,53.5 99.15,53.0 99.4,53.6 99.65,53.9 99.9,54.2 100.15,54.3 100.4,53.8 100.65,53.6 100.9,52.9 101.15,52.6 101.4,52.6 101.65,52.7 101.9,52.6 102.15,52.7 102.4,52.8 102.65,53.2 102.9,52.9 103.15,52.3 103.4,52.9 103.65,52.8 103.9,52.0 104.15,53.0 104.4,54.1 104.65,54.4 104.9,54.4 105.15,54.9 105.4,54.8 105.65,55.0 105.9,54.8 106.15,53.7 106.4,53.3 106.65,52.5 106.9,52.7 107.15,52.7 107.4,53.0 107.65,53.0 107.9,53.4 108.15,53.5 108.4,52.6 108.65,51.9 108.9,51.2 109.15,51.6 109.4,51.4 109.65,50.7 109.9,51.0 110.15,50.8 110.4,51.3 110.65,51.6 110.9,52.2 111.15,52.5 111.4,53.1 111.65,52.6 111.9,53.5 112.15,53.6 112.4,53.9 112.65,53.5 112.9,53.0 113.15,51.7 113.4,51.7 113.65,52.1 113.9,52.5 114.15,53.0 114.4,53.4 114.65,54.0 114.9,54.0 115.15,53.6 115.4,53.9 115.65,53.3 115.9,52.6 116.15,51.9 116.4,51.3 116.65,50.6 116.9,50.1 117.15,50.2 117.4,50.3 117.65,51.3 117.9,51.6 118.15,52.2 118.4,52.4 118.65,53.0 118.9,52.2 119.15,52.9 119.4,53.6 119.65,53.1 119.9,53.1 120.15,54.0 120.4,53.6 120.65,53.3 120.9,53.1 121.15,52.7 121.4,52.7 121.65,53.0 121.9,52.3 122.15,52.2 122.4,51.3 122.65,51.1 122.9,51.6 123.15,51.9 123.4,51.9 123.65,52.3 123.9,51.9 124.15,52.6 124.4,52.8 124.65,53.8 124.9,54.2 125.15,53.4 125.4,53.0 125.65,52.2 125.9,52.7 126.15,53.1 126.4,53.5 126.65,53.8 126.9,53.9 127.15,54.3 127.4,53.6 127.65,53.2 127.9,52.2 128.15,51.4 128.4,51.4 128.65,52.1 128.9,52.6 129.15,52.9 129.4,53.4 129.65,53.6 129.9,54.1 130.15,54.3 130.4,55.1 130.65,55.8 130.9,56.2 131.15,56.1 131.4,55.6 131.65,55.8 131.9,55.9 132.15,55.1 132.4,55.3 132.65,54.9 132.9,55.0 133.15,54.8 133.4,54.8 133.65,53.3 133.9,53.6 134.15,54.1 134.4,54.1 134.65,51.5 134.9,53.1 135.15,54.9 135.4,50.8 135.65,50.0 135.9,53.6 136.15,53.8 136.4,52.0 136.65,52.8 136.9,55.8 137.15,56.6 137.4,56.1 137.65,55.1 137.9,56.6 138.15,51.6 138.4,55.4 138.65,51.6 138.9,52.6 139.15,50.9 139.4,52.7 139.65,52.9 139.9,53.0 140.15,52.3 140.4,52.7 140.65,53.7 140.9,53.1 141.15,53.3 141.4,53.7 141.65,53.7 141.9,53.6 142.15,53.0 142.4,53.3 142.65,53.1 142.9,53.3 143.15,53.1 143.4,54.0 143.65,54.4 143.9,53.9 144.15,53.7 144.4,53.5 144.65,52.9 144.9,52.6 145.15,52.7 145.4,52.0 145.65,52.2 145.9,53.6 146.15,53.5 146.4,54.0 146.65,55.4 146.9,53.2 147.15,52.2 147.4,53.6 147.65,52.2 147.9,51.3 148.15,52.8 148.4,49.2 148.65,54.1 148.9,53.1 149.15,51.7 149.4,48.9 149.65,49.7 149.9,51.8 150.15,53.1 150.4,49.6 150.65,47.2 150.9,47.8 151.15,53.2 151.4,53.6 151.65,49.2 151.9,48.2 152.15,52.5 152.4,52.6 152.65,49.2 152.9,52.7 153.15,57.2 153.4,54.8 153.65,47.5 153.9,46.1 154.15,50.8 154.4,52.5 154.65,53.1 154.9,50.6 155.15,50.1 155.4,51.0 155.65,56.2 155.9,56.7 156.15,50.1 156.4,50.7 156.65,51.6 156.9,56.0 157.15,54.0 157.4,50.7 157.65,46.9 157.9,49.2 158.15,54.2 158.4,57.3 158.65,52.8 158.9,52.0 159.15,54.8 159.4,51.9 159.65,52.5 159.9,53.2 160.15,50.2 160.4,50.4 160.65,52.4 160.9,55.8 161.15,51.4 161.4,50.2 161.65,52.6 161.9,55.4 162.15,54.1 162.4,49.8 162.65,50.4 162.9,54.2 163.15,53.7 163.4,53.8 163.65,51.7 163.9,52.1 164.15,53.3 164.4,53.3 164.65,52.2 164.9,51.5 165.15,51.6 165.4,51.4 165.65,52.5 165.9,53.3 166.15,54.8 166.4,54.2 166.65,54.5 166.9,54.6 167.15,55.1 167.4,54.9 167.65,54.8 167.9,54.4 168.15,53.1 168.4,52.9 168.65,52.7 168.9,52.0 169.15,53.5 169.4,54.3 169.65,55.3 169.9,54.8 170.15,54.4 170.4,54.1 170.65,53.5 170.9,53.2 171.15,53.7 171.4,53.4 171.65,53.5 171.9,53.7 172.15,53.4 172.4,53.6 172.65,53.7 172.9,53.1 173.15,53.1 173.4,53.1 173.65,53.1 173.9,53.0 174.15,53.1 174.4,53.4 174.65,53.0 174.9,52.9 175.15,52.3 175.4,52.4 175.65,53.1 175.9,53.6 176.15,53.8 176.4,54.2 176.65,54.2 176.9,53.9 177.15,54.2 177.4,54.0 177.65,54.2 177.9,53.8 178.15,54.0 178.4,54.5 178.65,54.1 178.9,53.4 179.15,52.4 179.4,51.8 179.65,52.4 179.9,52.6 180.15,52.9 180.4,53.2 180.65,52.9 180.9,53.2 181.15,52.4 181.4,51.9 181.65,51.9 181.9,51.2 182.15,50.9 182.4,50.8 182.65,50.8 182.9,50.9 183.15,50.7 183.4,50.9 183.65,50.9 183.9,52.1 184.15,52.0 184.4,52.9 184.65,53.9 184.9,53.9 185.15,53.6 185.4,53.6 185.65,53.7 185.9,53.0 186.15,53.4 186.4,53.0 186.65,53.7 186.9,53.7 187.15,53.6 187.4,53.7 187.65,53.4 187.9,53.6 188.15,53.7 188.4,54.2 188.65,54.5 188.9,54.3 189.15,53.9 189.4,53.4 189.65,52.7 189.9,52.6 190.15,52.1 190.4,52.7 190.65,52.8 190.9,52.6 191.15,52.9 191.4,53.1 191.65,53.3 191.9,52.8 192.15,52.9 192.4,52.0 192.65,52.5 192.9,52.8 193.15,53.3 193.4,54.1 193.65,54.2 193.9,53.9 194.15,54.0 194.4,54.1 194.65,54.0 194.9,54.4 195.15,54.3 195.4,54.1 195.65,54.1 195.9,54.3 196.15,54.1 196.4,53.8 196.65,53.6 196.9,53.2 197.15,53.5 197.4,53.9 197.65,54.2 197.9,54.4 198.15,54.2 198.4,54.2 198.65,53.7 198.9,54.5 199.15,54.6 199.4,54.8 199.65,54.2 199.9,54.0 200.15,54.0 200.4,53.6 200.65,53.3 200.9,53.7 201.15,51.7 201.4,53.4 201.65,52.8 201.9,52.5 202.15,54.0 202.4,53.5 202.65,56.3 202.9,55.9 203.15,53.6 203.4,56.1 203.65,56.0 203.9,58.8 204.15,50.1 204.4,47.6 204.65,54.8 204.9,56.3 205.15,52.1 205.4,50.2 205.65,55.9 205.9,55.3 206.15,52.0 206.4,53.2 206.65,57.3 206.9,57.3 207.15,53.3 207.4,49.8 207.65,51.1 207.9,57.2 208.15,57.8 208.4,55.9 208.65,48.7 208.9,49.6 209.15,53.6 209.4,56.0 209.65,51.2 209.9,52.2 210.15,56.5 210.4,54.8 210.65,51.9 210.9,53.7 211.15,56.4 211.4,49.8 211.65,55.3 211.9,56.4 212.15,51.2 212.4,57.2 212.65,55.9 212.9,52.2 213.15,53.2 213.4,52.9 213.65,53.3 213.9,53.6 214.15,54.1 214.4,53.8 214.65,53.5 214.9,52.7 215.15,52.0 215.4,52.5 215.65,52.8 215.9,53.0 216.15,53.2 216.4,52.9 216.65,53.0 216.9,52.8 217.15,52.4 217.4,52.3 217.65,52.2 217.9,52.9 218.15,53.7 218.4,53.7 218.65,54.7 218.9,54.6 219.15,54.3 219.4,54.4 219.65,54.2 219.9,54.2 220.15,54.3 220.4,53.5 220.65,53.0 220.9,52.4 221.15,52.4 221.4,52.9 221.65,52.4 221.9,52.7 222.15,52.8 222.4,53.9 222.65,54.2 222.9,55.3 223.15,55.6 223.4,56.5 223.65,56.4 223.9,55.8 224.15,55.4 224.4,55.3 224.65,54.9 224.9,54.4 225.15,54.2 225.4,53.7 225.65,53.4 225.9,54.9 226.15,56.5 226.4,51.8 226.65,54.8 226.9,56.0 227.15,54.9 227.4,53.7 227.65,53.2 227.9,50.7 228.15,49.9 228.4,53.7 228.65,54.7 228.9,50.9 229.15,50.9 229.4,55.0 229.65,52.2 229.9,51.8 230.15,54.0 230.4,50.2 230.65,49.8 230.9,50.6 231.15,51.9 231.4,51.6 231.65,49.8 231.9,52.1 232.15,52.0 232.4,52.9 232.65,53.3 232.9,53.6 233.15,54.3 233.4,54.5 233.65,55.2 233.9,56.1 234.15,55.8 234.4,55.4 234.65,55.0 234.9,54.4 235.15,53.2 235.4,52.6 235.65,51.9 235.9,51.3 236.15,52.5 236.4,53.7 236.65,54.7 236.9,53.9 237.15,53.0 237.4,52.2 237.65,52.5 237.9,52.4 238.15,52.7 238.4,52.5 238.65,52.8 238.9,53.5 239.15,54.0 239.4,54.1 239.65,54.3 239.9,53.2 240.15,52.6 240.4,52.2 240.65,52.7 240.9,52.5 241.15,53.2 241.4,53.7 241.65,54.3 241.9,54.1 242.15,53.4 242.4,53.1 242.65,52.4 242.9,51.3 243.15,50.4 243.4,51.0 243.65,51.5 243.9,52.1 244.15,52.7 244.4,53.0 244.65,52.1 244.9,51.5 245.15,51.0 245.4,52.1 245.65,53.3 245.9,54.5 246.15,55.1 246.4,54.5 246.65,54.8 246.9,54.9 247.15,54.5 247.4,54.6 247.65,54.4 247.9,54.5 248.15,54.3 248.4,54.1 248.65,55.0 248.9,53.6 249.15,53.4 249.4,53.7 249.65,53.5 249.9,51.2 250.15,51.4 250.4,54.6 250.65,55.1 250.9,53.8 251.15,48.8 251.4,52.7 251.65,54.9 251.9,51.6 252.15,49.7 252.4,52.8 252.65,51.7 252.9,51.2 253.15,49.6 253.4,51.1 253.65,53.5 253.9,51.3 254.15,52.8 254.4,52.8 254.65,55.7 254.9,55.3 255.15,54.4 255.4,53.2 255.65,52.6 255.9,54.6 256.15,54.4 256.4,53.8 256.65,55.1 256.9,52.9 257.15,55.4 257.4,51.6 257.65,53.9 257.9,53.2 258.15,52.5 258.4,53.5 258.65,53.9 258.9,53.5 259.15,53.6 259.4,53.8 259.65,53.5 259.9,54.1 260.15,54.1 260.4,54.3 260.65,54.2 260.9,54.4 261.15,53.8 261.4,55.4 261.65,54.1 261.9,52.8 262.15,56.2 262.4,53.5 262.65,52.4 262.9,55.9 263.15,55.3 263.4,51.3 263.65,54.7 263.9,57.8 264.15,52.9 264.4,49.3 264.65,56.9 264.9,56.5 265.15,50.3 265.4,59.3 265.65,53.3 265.9,53.0 266.15,54.6 266.4,51.3 266.65,53.1 266.9,55.2 267.15,55.6 267.4,54.0 267.65,53.4 267.9,55.3 268.15,54.5 268.4,52.9 268.65,56.6 268.9,53.3 269.15,51.8 269.4,56.5 269.65,52.1 269.9,54.6 270.15,54.6 270.4,52.6 270.65,53.6 270.9,52.0 271.15,51.7 271.4,52.3 271.65,51.8 271.9,51.6 272.15,51.5 272.4,51.3 272.65,52.0 272.9,51.8 273.15,51.4 273.4,51.1 273.65,51.4 273.9,51.6 274.15,51.4 274.4,52.7 274.65,53.6 274.9,54.1 275.15,53.9 275.4,53.1 275.65,52.7 275.9,53.0 276.15,52.6 276.4,52.9 276.65,53.1 276.9,53.4 277.15,53.6 277.4,53.2 277.65,53.3 277.9,52.7 278.15,52.2 278.4,52.6 278.65,53.3 278.9,53.1 279.15,53.5 279.4,54.0 279.65,54.2 279.9,54.2 280.15,53.8 280.4,53.8 280.65,53.9 280.9,53.2 281.15,53.2 281.4,52.1 281.65,52.5 281.9,52.9 282.15,53.2 282.4,53.3 282.65,53.8 282.9,54.0 283.15,53.3 283.4,52.7 283.65,52.3 283.9,52.1 284.15,52.2 284.4,53.0 284.65,52.3 284.9,52.2 285.15,52.8 285.4,52.5 285.65,52.6 285.9,51.8 286.15,52.0 286.4,52.5 286.65,53.1 286.9,53.2 287.15,53.7 287.4,54.4 287.65,55.0 287.9,54.5 288.15,54.1 288.4,53.2 288.65,52.9 288.9,52.7 289.15,52.3 289.4,52.2 289.65,52.6 289.9,52.9 290.15,53.3 290.4,53.0 290.65,52.6 290.9,52.4 291.15,52.1 291.4,51.4 291.65,51.6 291.9,50.9 292.15,50.6 292.4,51.5 292.65,51.6 292.9,52.0 293.15,52.8" fill="none" stroke="#0808ff" stroke-width="1.08" stroke-linejoin="round"/><rect x="38.0" y="16.3" width="255.39999999999998" height="86.4" fill="none" stroke="#000" stroke-width="1.7"/><g font-family="'DejaVu Sans','Liberation Sans',sans-serif" font-size="10.9" fill="#545454" text-anchor="end"><text x="34.7" y="20.4">9500</text><text x="34.7" y="41.8">9000</text><text x="34.7" y="63.3">8500</text><text x="34.7" y="84.8">8000</text><text x="34.7" y="106.2">7500</text></g><g font-family="'DejaVu Serif','Liberation Serif',serif" font-size="10.8" fill="#545454" text-anchor="middle"><text x="38.4" y="115.9">0</text><text x="88.4" y="115.9">200</text><text x="138.4" y="115.9">400</text><text x="188.4" y="115.9">600</text><text x="238.4" y="115.9">800</text><text x="288.4" y="115.9">1000</text></g><rect x="179.4" y="24.3" width="13.4" height="10.4" fill="#fff" stroke="#ccc" stroke-width="1"/><rect x="180.8" y="25.7" width="10.6" height="7.6" fill="#0000ff"/><text x="196.6" y="32.8" font-family="'DejaVu Serif','Liberation Serif',serif" font-size="11.2" fill="#000" textLength="90.6" lengthAdjust="spacing">nnaida24 1.8.W</text><path d="M292.8 6.800L302.900 16.900L292.800 27L282.700 16.900Z" fill="#00ff00"/></svg>
</div></body></html>
